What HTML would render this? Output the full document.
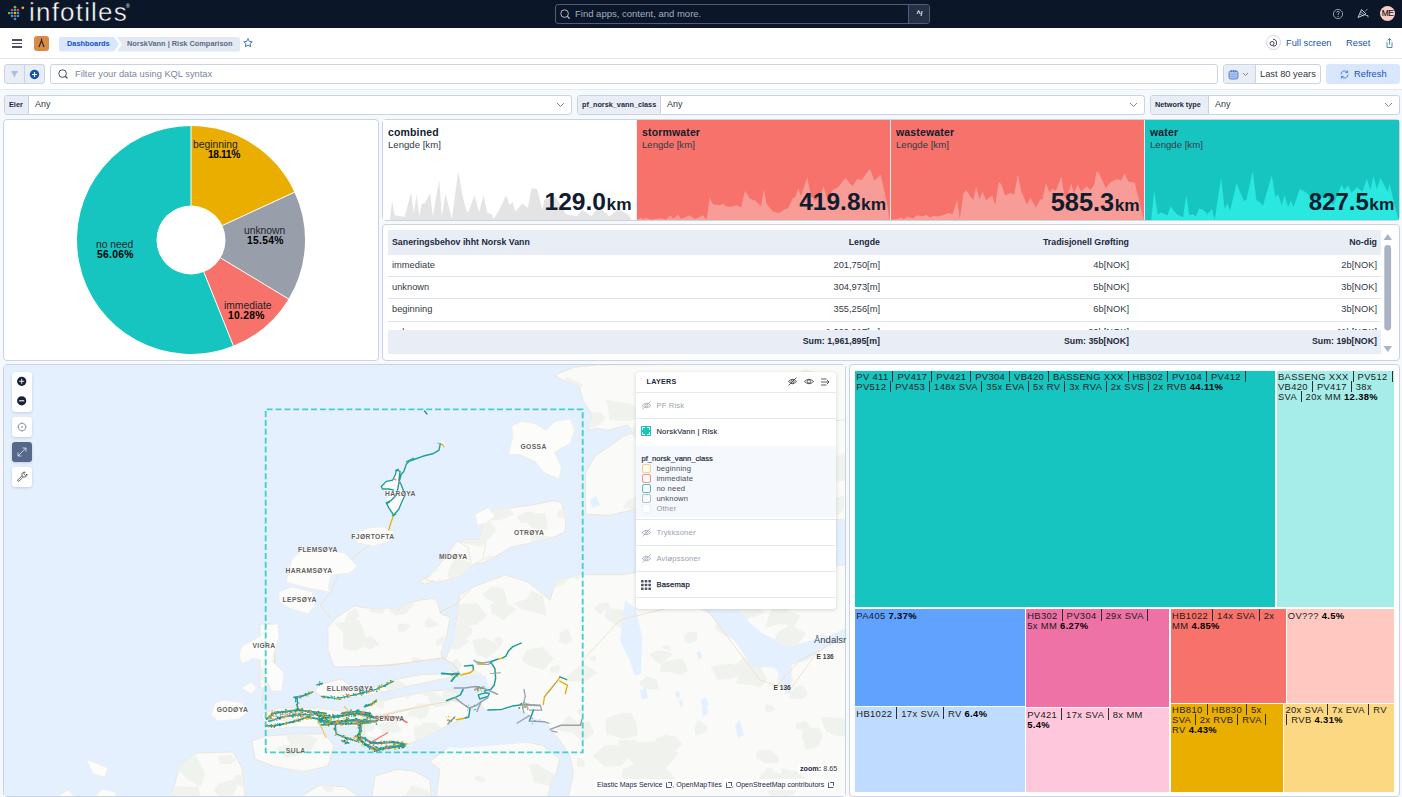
<!DOCTYPE html>
<html><head><meta charset="utf-8">
<style>
*{box-sizing:border-box;margin:0;padding:0}
html,body{width:1402px;height:797px;overflow:hidden;background:#f6f9fc;font-family:"Liberation Sans",sans-serif;color:#1d2a3e}
.abs{position:absolute}
#hdr{position:absolute;left:0;top:0;width:1402px;height:28px;background:#0b1628}
#bar2{position:absolute;left:0;top:28px;width:1402px;height:31px;background:#fff;border-bottom:1px solid #e3e8f2}
#fbar{position:absolute;left:0;top:59px;width:1402px;height:31px;background:#fff;border-bottom:1px solid #e3e8f2}
#cbar{position:absolute;left:0;top:90px;width:1402px;height:29px;background:#f6f9fc}
.panel{position:absolute;background:#fff;border:1px solid #cad3e2;border-radius:4px;overflow:hidden}
.ctl{position:absolute;top:95px;height:20px;background:#fff;border:1px solid #cad3e2;border-radius:3px;overflow:hidden}
.ctl .lb{position:absolute;left:0;top:0;bottom:0;background:#e9edf5;border-right:1px solid #cad3e2;font-size:7.3px;font-weight:bold;color:#1d2a3e;line-height:18px;padding-left:4px}
.ctl .v{position:absolute;top:0;font-size:9px;color:#343741;line-height:17px}
.chev{position:absolute;top:3.5px;width:9px;height:9px}
.pl{font-size:10.3px;line-height:12px;color:#1f2329;white-space:nowrap}
.pl.b{font-weight:bold;color:#000;letter-spacing:0.3px}
.mt{font-size:10.5px;font-weight:bold;color:#111c2f;line-height:12px;letter-spacing:0.15px}
.ms{font-size:9.6px;color:#343a48;line-height:12px}
.mv{font-size:24.3px;font-weight:bold;color:#111c2f;line-height:28px;white-space:nowrap}
.mv span{font-size:17.3px;margin-left:0.5px}
.th{font-size:8.8px;font-weight:bold;color:#1d2a3e;line-height:12px;white-space:nowrap}
.tc{font-size:9.3px;color:#343a48;line-height:12px;white-space:nowrap}
.tm{overflow:hidden}
.tt{position:absolute;left:1px;top:1.5px;font-size:9.4px;line-height:10px;color:#1a1c21;white-space:nowrap;letter-spacing:0.36px}
.tt b{color:#000}
.pp{display:inline-block;width:1px;height:1px;position:relative;margin:0 1px;vertical-align:baseline}.pp:after{content:"";position:absolute;left:0;top:-8.5px;width:1px;height:11.5px;background:#2b3036}
.ml{font-size:6.7px;font-weight:bold;color:#655f5d;letter-spacing:0.4px;line-height:8px;white-space:nowrap;text-shadow:0 0 1px #fff,0 0 1px #fff}
.mc{background:#fff;border-radius:3px;box-shadow:0 1px 3px rgba(0,0,0,0.15)}
.lyl{left:636px;width:200px;height:1px;background:#e3e8f2}
.lyt{left:656.4px;font-size:7.6px;line-height:9px;white-space:nowrap;letter-spacing:0.2px}
.lyt.g{color:#98a2b3}
.sw{left:641.5px;width:9px;height:9px;border:1px solid;border-radius:2px;background:#fff}
.ext{display:inline-block;width:6px;height:6px;border:0.7px solid #5a6170;border-top-color:transparent;border-right-color:transparent;margin-left:2px;vertical-align:-0.5px;position:relative}.ext:after{content:"";position:absolute;right:-1px;top:-1px;width:3px;height:3px;border-top:0.7px solid #5a6170;border-right:0.7px solid #5a6170}
</style></head><body>
<div id="hdr">
 <svg class="abs" style="left:8px;top:5px" width="17" height="17" viewBox="0 0 17 17">
  <circle cx="7" cy="2.2" r="1.35" fill="#7cb342"/>
  <circle cx="14.8" cy="2.8" r="1.35" fill="#f5b400"/>
  <circle cx="4" cy="5" r="1.35" fill="#e0453a"/><circle cx="7" cy="5" r="1.35" fill="#2e9be0"/><circle cx="10" cy="5" r="1.35" fill="#e0453a"/>
  <circle cx="1.2" cy="8" r="1.35" fill="#7cb342"/><circle cx="4" cy="8" r="1.35" fill="#2e9be0"/><circle cx="7" cy="8" r="1.35" fill="#f5b400"/><circle cx="10" cy="8" r="1.35" fill="#2e9be0"/>
  <circle cx="4" cy="11" r="1.35" fill="#2e9be0"/><circle cx="7" cy="11" r="1.35" fill="#e0453a"/><circle cx="10" cy="11" r="1.35" fill="#2e9be0"/>
  <circle cx="7" cy="14" r="1.35" fill="#2e9be0"/>
 </svg>
 <div class="abs" style="left:29px;top:-3px;font-size:26px;color:#fff;letter-spacing:1.2px;line-height:30px;-webkit-text-stroke:0.45px #0b1628">infotiles</div>
 <div class="abs" style="left:126px;top:3px;font-size:5px;color:#fff;line-height:6px">&reg;</div>
 <div class="abs" style="left:555px;top:4px;width:375px;height:20px;border:1px solid #4f5d78;border-radius:3px;background:#0b1628;overflow:hidden">
  <svg class="abs" style="left:4px;top:4px" width="11" height="11" viewBox="0 0 11 11"><circle cx="4.6" cy="4.6" r="3.8" fill="none" stroke="#c5cbd6" stroke-width="0.9"/><path d="M7.4 7.4 L9.6 9.6" stroke="#c5cbd6" stroke-width="1.3"/></svg>
  <div class="abs" style="left:19px;top:0;line-height:18px;font-size:9.5px;color:#a2aec3">Find apps, content, and more.</div>
  <div class="abs" style="left:352px;top:0;width:22px;height:18px;background:#252f45;border-left:1px solid #4f5d78;font-size:7px;color:#fff;line-height:18px;text-align:center;font-weight:bold">^/</div>
 </div>
 <svg class="abs" style="left:1332px;top:8px" width="12" height="12" viewBox="0 0 12 12"><circle cx="6" cy="6" r="4.6" fill="none" stroke="#a6aebb" stroke-width="0.9"/><path d="M4.7 4.6 Q4.8 3.3 6 3.3 Q7.3 3.3 7.3 4.5 Q7.3 5.4 6.1 5.9 L6.1 7" fill="none" stroke="#a6aebb" stroke-width="0.9"/><circle cx="6.1" cy="8.4" r="0.6" fill="#a6aebb"/></svg>
 <svg class="abs" style="left:1357px;top:7px" width="12" height="12" viewBox="0 0 12 12"><path d="M1 10.5 L4.5 2.5 L9 7 Z" fill="none" stroke="#c5cbd6" stroke-width="1"/><path d="M3 7 L6.5 9 M4 4.8 L7.5 8" stroke="#c5cbd6" stroke-width="0.8"/><path d="M8 4.5 L10.5 2" stroke="#c5cbd6" stroke-width="0.7"/><path d="M8.5 8.5 L11 8.5 L11 10.5" fill="none" stroke="#c5cbd6" stroke-width="0.8"/></svg>
 <div class="abs" style="left:1380px;top:6px;width:15px;height:15px;border-radius:50%;background:#fbcdc6;color:#111;font-size:8.3px;line-height:15px;text-align:center;letter-spacing:-0.5px;-webkit-text-stroke:0.15px #111">ME</div>
</div>
<div id="bar2">
 <div class="abs" style="left:12px;top:11px;width:10px;height:1.6px;background:#4a505c"></div>
 <div class="abs" style="left:12px;top:14.6px;width:10px;height:1.6px;background:#4a505c"></div>
 <div class="abs" style="left:12px;top:18.2px;width:10px;height:1.6px;background:#4a505c"></div>
 <div class="abs" style="left:34px;top:8px;width:15px;height:15px;border-radius:3px;background:#d98b45"></div>
 <svg class="abs" style="left:34px;top:8px" width="15" height="15" viewBox="0 0 15 15"><path d="M7.5 2.5 V4.5 M7.5 4.5 L5 11 M7.5 4.5 L10 11" fill="none" stroke="#222" stroke-width="1.1"/></svg>
 <svg class="abs" style="left:59px;top:9px" width="183" height="15" viewBox="0 0 183 15">
  <path d="M0 2 Q0 0 2 0 H55 L60 7.3 L55 14.6 H2 Q0 14.6 0 12.6 Z" fill="#d8e7fe"/>
  <path d="M58 0 H179 Q181 0 181 2 V12.6 Q181 14.6 179 14.6 H58 L63 7.3 Z" fill="#e3e8f2"/>
 </svg>
 <div class="abs" style="left:67px;top:8px;line-height:15px;font-size:7.4px;font-weight:bold;color:#1750ba">Dashboards</div>
 <div class="abs" style="left:127px;top:8px;line-height:15px;font-size:7.4px;font-weight:bold;color:#5a6b86">NorskVann | Risk Comparison</div>
 <svg class="abs" style="left:243px;top:10px" width="10" height="10" viewBox="0.5 0.5 11 11"><path d="M6 1.2 L7.4 4.3 L10.7 4.6 L8.2 6.8 L9 10.1 L6 8.4 L3 10.1 L3.8 6.8 L1.3 4.6 L4.6 4.3 Z" fill="none" stroke="#1d5cc8" stroke-width="0.9" stroke-linejoin="round"/></svg>
 <div class="abs" style="left:1266px;top:7px;width:15px;height:15px;border-radius:50%;border:1px solid #cdd5e3;background:#fff"></div>
 <svg class="abs" style="left:1268px;top:9px" width="11" height="11" viewBox="0 0 11 11"><circle cx="4" cy="6.5" r="2" fill="none" stroke="#333" stroke-width="0.9"/><path d="M5 3 Q6 1.5 7.5 3 L8.5 5 Q9 8 7 9 L5 9" fill="none" stroke="#333" stroke-width="0.9"/></svg>
 <div class="abs" style="left:1286px;top:8px;line-height:14px;font-size:9.3px;color:#1a52b8">Full screen</div>
 <div class="abs" style="left:1346px;top:8px;line-height:14px;font-size:9.3px;color:#1a52b8">Reset</div>
 <svg class="abs" style="left:1384px;top:9px" width="11" height="12" viewBox="0 0 11 12"><path d="M5.5 1.5 V7.5 M3.6 3.4 L5.5 1.5 L7.4 3.4 M3 5.2 V10.5 H8 V5.2" fill="none" stroke="#1d5cc8" stroke-width="0.75" stroke-linejoin="round"/></svg>
</div>
<div id="fbar">
 <div class="abs" style="left:4px;top:5px;width:41px;height:20px;border:1px solid #cad3e2;border-radius:3px;background:#e9edf5"></div>
 <div class="abs" style="left:24px;top:6px;width:1px;height:18px;background:#cad3e2"></div>
 <svg class="abs" style="left:10px;top:11px" width="9" height="8" viewBox="0 0 9 8"><path d="M1.5 2 H7.5 M2.8 4 H6.2 M3.8 6 H5.2" stroke="#1d5cc8" stroke-width="0.65"/></svg>
 <svg class="abs" style="left:29px;top:9.5px" width="11" height="11" viewBox="0 0 11 11"><circle cx="5.5" cy="5.5" r="4.7" fill="#1750ba"/><path d="M5.5 3 V8 M3 5.5 H8" stroke="#fff" stroke-width="1.1"/></svg>
 <div class="abs" style="left:50px;top:5px;width:1168px;height:20px;border:1px solid #cad3e2;border-radius:3px;background:#fff"></div>
 <svg class="abs" style="left:58px;top:10px" width="11" height="11" viewBox="0 0 11 11"><circle cx="4.6" cy="4.6" r="3.8" fill="none" stroke="#343741" stroke-width="0.9"/><path d="M7.4 7.4 L9.4 9.4" stroke="#343741" stroke-width="1.3"/></svg>
 <div class="abs" style="left:75px;top:8px;line-height:14px;font-size:9.3px;color:#7a879c">Filter your data using KQL syntax</div>
 <div class="abs" style="left:1223px;top:5px;width:98px;height:20px;border:1px solid #cad3e2;border-radius:3px;background:#fff;overflow:hidden">
  <div class="abs" style="left:0;top:0;width:32px;height:18px;background:#e9edf5;border-right:1px solid #cad3e2"></div>
 </div>
 <svg class="abs" style="left:1228px;top:10px" width="11" height="11" viewBox="0 0 11 11"><rect x="1" y="2" width="9" height="8" rx="1.8" fill="#a9c2ee" stroke="#3f6fd0" stroke-width="0.8"/><path d="M3.3 1 V3 M5.5 1 V3 M7.7 1 V3" stroke="#3f6fd0" stroke-width="0.9"/><path d="M2.5 5.3 H8.5 M2.5 7.5 H8.5" stroke="#6d93dc" stroke-width="0.5"/></svg>
 <svg class="abs" style="left:1242px;top:12.5px" width="7" height="5" viewBox="0 0 7 5"><path d="M1 1 L3.5 3.5 L6 1" fill="none" stroke="#5a6b86" stroke-width="0.8"/></svg>
 <div class="abs" style="left:1260px;top:8px;line-height:14px;font-size:9.3px;color:#343741">Last 80 years</div>
 <div class="abs" style="left:1326px;top:5px;width:74px;height:20px;border-radius:3px;background:#d8e7fe"></div>
 <svg class="abs" style="left:1339px;top:9.5px" width="11" height="11" viewBox="0 0 11 11"><path d="M2 5.5 A3.5 3.5 0 0 1 8.2 3.2 M9 5.5 A3.5 3.5 0 0 1 2.8 7.8" fill="none" stroke="#1d5cc8" stroke-width="0.7"/><path d="M8.6 1.4 V3.6 H6.4 M2.4 9.6 V7.4 H4.6" fill="none" stroke="#1d5cc8" stroke-width="0.7"/></svg>
 <div class="abs" style="left:1354px;top:8px;line-height:14px;font-size:9.3px;color:#1a52b8">Refresh</div>
</div>
<div id="cbar"></div>
<div class="ctl" style="left:4px;width:568px"><div class="lb" style="width:24px">Eier</div><div class="v" style="left:30px">Any</div>
 <svg class="chev" style="right:6px" viewBox="0 0 9 9"><path d="M1 3 L4.5 6.5 L8 3" fill="none" stroke="#5a6b86" stroke-width="0.8"/></svg></div>
<div class="ctl" style="left:577px;width:568px"><div class="lb" style="width:83px">pf_norsk_vann_class</div><div class="v" style="left:89px">Any</div>
 <svg class="chev" style="right:6px" viewBox="0 0 9 9"><path d="M1 3 L4.5 6.5 L8 3" fill="none" stroke="#5a6b86" stroke-width="0.8"/></svg></div>
<div class="ctl" style="left:1150px;width:250px"><div class="lb" style="width:58px">Network type</div><div class="v" style="left:64px">Any</div>
 <svg class="chev" style="right:6px" viewBox="0 0 9 9"><path d="M1 3 L4.5 6.5 L8 3" fill="none" stroke="#5a6b86" stroke-width="0.8"/></svg></div>

<!-- panels -->
<div class="panel" style="left:3px;top:119px;width:376px;height:242px"></div>
<div class="panel" style="left:382px;top:119px;width:1018px;height:102px"></div>
<div class="panel" style="left:382px;top:224px;width:1018px;height:137px"></div>
<div class="panel" style="left:3px;top:364px;width:843px;height:433px;background:#e5f0ff"></div>
<div class="panel" style="left:849px;top:364px;width:551px;height:433px"></div>
<!-- map -->
<svg class="abs" style="left:4px;top:365px" width="841" height="431" viewBox="4 365 841 431">
<rect x="4" y="365" width="841" height="431" fill="#e5f0ff"/>
<path d="M554.7 375.0 L565.8 370.6 L574.6 367.3 L596.7 365.1 L846.0 364.0 L846.0 440.0 L640.0 440.0 L627.6 425.0 L607.8 430.3 L596.7 428.1 L587.9 430.3 L592.3 414.8 L583.5 401.6 L579.0 386.1 L561.4 379.5 Z" fill="#fafbf9" stroke="#eadfca" stroke-width="0.7"/>
<path d="M585.6 472.5 L595.2 455.9 L611.8 444.9 L622.9 436.6 L640.0 430.0 L846.0 420.0 L846.0 520.0 L640.0 508.0 L609.0 515.3 L585.6 513.9 Z" fill="#fafbf9" stroke="#eadfca" stroke-width="0.7"/>
<path d="M477.4 545.0 L486.3 518.6 L495.1 509.8 L512.8 507.6 L530.4 505.4 L552.5 501.0 L561.4 502.1 L565.8 518.6 L565.0 532.0 L554.0 537.0 L540.0 541.0 L511.0 547.0 L488.0 561.0 L477.0 564.0 Z" fill="#fafbf9" stroke="#eadfca" stroke-width="0.7"/>
<path d="M418.0 582.0 L437.0 572.0 L446.0 556.0 L454.0 546.0 L466.0 540.0 L486.0 540.0 L483.0 559.0 L466.0 569.0 L441.0 578.0 L425.0 584.0 Z" fill="#fafbf9" stroke="#eadfca" stroke-width="0.7"/>
<path d="M425.0 580.0 L440.0 564.0 L457.0 541.0 L468.0 547.0 L471.0 564.0 L463.0 575.0 L440.0 582.0 Z" fill="#fafbf9" stroke="#eadfca" stroke-width="0.7"/>
<path d="M171.0 797.0 L180.0 765.0 L197.0 753.0 L233.0 752.0 L242.0 768.0 L245.0 797.0 Z" fill="#fafbf9" stroke="#eadfca" stroke-width="0.7"/>
<path d="M328.0 627.0 L337.0 617.0 L354.0 606.0 L373.0 609.0 L389.0 608.0 L399.0 611.0 L402.0 605.0 L421.0 600.0 L436.0 598.0 L441.0 614.0 L450.0 617.0 L447.0 634.0 L441.0 653.0 L444.0 663.0 L405.0 663.0 L373.0 666.0 L334.0 667.0 L328.0 650.0 Z" fill="#fafbf9" stroke="#eadfca" stroke-width="0.7"/>
<path d="M444.0 663.0 L454.0 637.0 L460.0 595.0 L473.0 587.0 L505.0 575.0 L528.0 582.0 L550.0 600.0 L556.6 580.2 L581.4 574.7 L620.1 574.7 L700.0 565.0 L846.0 565.0 L846.0 797.0 L568.3 797.0 L573.4 772.8 L570.0 755.7 L559.7 740.3 L551.0 730.0 L544.0 721.0 L518.0 724.0 L486.0 711.0 L470.0 692.0 L454.0 675.0 Z" fill="#fafbf9" stroke="#eadfca" stroke-width="0.7"/>
<path d="M262.0 714.0 L279.0 708.0 L318.0 708.0 L363.0 714.0 L366.0 727.0 L325.0 727.0 L292.0 727.0 L266.0 730.0 Z" fill="#fafbf9" stroke="#eadfca" stroke-width="0.7"/>
<path d="M260.0 624.0 L274.0 624.0 L276.0 650.0 L272.0 675.0 L266.0 688.0 L260.0 688.0 Z" fill="#fafbf9" stroke="#eadfca" stroke-width="0.7"/>
<path d="M252.0 741.0 L266.0 736.0 L300.0 734.0 L325.0 734.0 L334.0 746.0 L328.0 766.0 L302.0 772.0 L273.0 766.0 L255.0 759.0 Z" fill="#fafbf9" stroke="#eadfca" stroke-width="0.7"/>
<path d="M429.6 761.7 L448.5 747.1 L465.6 740.3 L482.7 731.7 L499.8 733.4 L508.4 743.7 L525.5 742.0 L542.6 745.4 L559.7 759.1 L556.3 772.8 L551.2 781.4 L547.7 797.0 L436.5 797.0 L439.9 769.4 Z" fill="#fafbf9" stroke="#eadfca" stroke-width="0.7"/>
<path d="M375.0 776.0 L397.1 769.4 L414.2 771.1 L429.6 779.6 L431.4 797.0 L372.0 797.0 Z" fill="#fafbf9" stroke="#eadfca" stroke-width="0.7"/>
<path d="M300.0 797.0 L320.0 785.0 L345.0 787.0 L360.0 797.0 Z" fill="#fafbf9" stroke="#eadfca" stroke-width="0.7"/>
<clipPath id="landclip"><path d="M554.7 375.0 L565.8 370.6 L574.6 367.3 L596.7 365.1 L846.0 364.0 L846.0 440.0 L640.0 440.0 L627.6 425.0 L607.8 430.3 L596.7 428.1 L587.9 430.3 L592.3 414.8 L583.5 401.6 L579.0 386.1 L561.4 379.5 Z" fill="#000"/><path d="M585.6 472.5 L595.2 455.9 L611.8 444.9 L622.9 436.6 L640.0 430.0 L846.0 420.0 L846.0 520.0 L640.0 508.0 L609.0 515.3 L585.6 513.9 Z" fill="#000"/><path d="M477.4 545.0 L486.3 518.6 L495.1 509.8 L512.8 507.6 L530.4 505.4 L552.5 501.0 L561.4 502.1 L565.8 518.6 L565.0 532.0 L554.0 537.0 L540.0 541.0 L511.0 547.0 L488.0 561.0 L477.0 564.0 Z" fill="#000"/><path d="M418.0 582.0 L437.0 572.0 L446.0 556.0 L454.0 546.0 L466.0 540.0 L486.0 540.0 L483.0 559.0 L466.0 569.0 L441.0 578.0 L425.0 584.0 Z" fill="#000"/><path d="M425.0 580.0 L440.0 564.0 L457.0 541.0 L468.0 547.0 L471.0 564.0 L463.0 575.0 L440.0 582.0 Z" fill="#000"/><path d="M171.0 797.0 L180.0 765.0 L197.0 753.0 L233.0 752.0 L242.0 768.0 L245.0 797.0 Z" fill="#000"/><path d="M328.0 627.0 L337.0 617.0 L354.0 606.0 L373.0 609.0 L389.0 608.0 L399.0 611.0 L402.0 605.0 L421.0 600.0 L436.0 598.0 L441.0 614.0 L450.0 617.0 L447.0 634.0 L441.0 653.0 L444.0 663.0 L405.0 663.0 L373.0 666.0 L334.0 667.0 L328.0 650.0 Z" fill="#000"/><path d="M444.0 663.0 L454.0 637.0 L460.0 595.0 L473.0 587.0 L505.0 575.0 L528.0 582.0 L550.0 600.0 L556.6 580.2 L581.4 574.7 L620.1 574.7 L700.0 565.0 L846.0 565.0 L846.0 797.0 L568.3 797.0 L573.4 772.8 L570.0 755.7 L559.7 740.3 L551.0 730.0 L544.0 721.0 L518.0 724.0 L486.0 711.0 L470.0 692.0 L454.0 675.0 Z" fill="#000"/><path d="M262.0 714.0 L279.0 708.0 L318.0 708.0 L363.0 714.0 L366.0 727.0 L325.0 727.0 L292.0 727.0 L266.0 730.0 Z" fill="#000"/><path d="M260.0 624.0 L274.0 624.0 L276.0 650.0 L272.0 675.0 L266.0 688.0 L260.0 688.0 Z" fill="#000"/><path d="M252.0 741.0 L266.0 736.0 L300.0 734.0 L325.0 734.0 L334.0 746.0 L328.0 766.0 L302.0 772.0 L273.0 766.0 L255.0 759.0 Z" fill="#000"/><path d="M429.6 761.7 L448.5 747.1 L465.6 740.3 L482.7 731.7 L499.8 733.4 L508.4 743.7 L525.5 742.0 L542.6 745.4 L559.7 759.1 L556.3 772.8 L551.2 781.4 L547.7 797.0 L436.5 797.0 L439.9 769.4 Z" fill="#000"/><path d="M375.0 776.0 L397.1 769.4 L414.2 771.1 L429.6 779.6 L431.4 797.0 L372.0 797.0 Z" fill="#000"/><path d="M300.0 797.0 L320.0 785.0 L345.0 787.0 L360.0 797.0 Z" fill="#000"/></clipPath>
<g clip-path="url(#landclip)" fill="#f0f3ed"><path d="M221.9 599.9 L217.0 614.0 L200.9 613.0 L188.7 609.0 L189.1 594.1 L198.3 584.3 L210.1 592.2 Z"/><path d="M798.7 530.3 L786.3 541.5 L773.2 543.7 L771.0 526.7 L791.4 523.4 Z"/><path d="M794.5 533.1 L794.5 542.0 L782.4 550.5 L761.5 545.5 L757.7 536.4 L767.7 525.6 L778.8 525.3 L794.2 521.9 Z"/><path d="M41.9 484.7 L32.3 492.0 L19.6 495.1 L17.8 483.4 L19.2 478.4 L35.6 477.5 Z"/><path d="M297.1 393.7 L296.4 396.0 L291.7 395.7 L290.0 393.6 L292.9 391.6 L294.5 392.2 Z"/><path d="M23.6 414.7 L18.7 425.2 L-3.8 415.5 L-0.1 407.0 L17.8 401.6 Z"/><path d="M748.3 534.3 L741.5 542.2 L729.2 537.4 L728.9 524.3 L738.9 526.5 Z"/><path d="M359.7 615.8 L355.4 621.2 L344.8 621.5 L348.1 612.0 L356.4 608.7 Z"/><path d="M815.4 374.0 L812.3 377.5 L807.3 378.9 L802.6 375.9 L800.1 371.8 L804.4 369.3 L812.2 371.1 Z"/><path d="M200.3 713.0 L197.4 717.1 L184.8 717.2 L181.4 713.5 L190.1 708.3 L195.2 708.5 Z"/><path d="M485.7 482.6 L483.0 485.0 L479.6 482.9 L480.9 480.5 L484.1 479.0 Z"/><path d="M367.0 589.5 L362.4 592.8 L357.4 594.6 L347.3 593.3 L350.0 585.1 L356.1 578.4 L363.1 585.7 Z"/><path d="M402.6 693.0 L395.4 701.1 L388.5 697.2 L378.1 697.6 L381.0 687.6 L388.6 682.4 L392.8 682.7 Z"/><path d="M117.6 582.5 L109.3 592.8 L101.5 589.5 L93.4 580.3 L101.8 574.2 L110.2 572.8 Z"/><path d="M712.4 441.9 L706.8 447.0 L687.3 446.2 L680.6 444.7 L677.9 433.7 L686.9 423.8 L695.6 431.5 Z"/><path d="M122.4 416.3 L113.9 426.3 L106.4 422.6 L102.9 415.0 L112.4 412.6 Z"/><path d="M846.0 551.2 L841.7 554.8 L830.6 558.7 L825.9 548.9 L831.7 541.2 L840.6 543.3 Z"/><path d="M432.0 668.3 L433.0 674.8 L420.6 684.9 L414.9 676.0 L407.8 671.8 L413.2 656.7 L424.3 659.9 L439.9 657.6 Z"/><path d="M633.4 733.6 L631.8 737.6 L622.6 738.8 L613.4 735.7 L611.6 733.7 L614.9 725.9 L615.3 719.9 L628.7 721.3 Z"/><path d="M578.2 727.2 L576.9 734.1 L568.4 731.9 L556.0 729.8 L561.3 724.8 L568.4 715.1 L575.4 720.5 Z"/><path d="M223.9 631.5 L221.0 636.5 L214.9 635.3 L206.8 634.6 L208.3 629.7 L209.5 626.9 L216.5 625.1 L218.0 627.0 Z"/><path d="M765.1 437.9 L763.5 444.0 L753.4 443.8 L742.8 444.8 L740.4 436.2 L739.3 423.6 L749.3 422.7 L763.5 424.9 Z"/><path d="M505.8 479.4 L501.6 485.2 L493.5 485.9 L489.2 479.2 L492.7 474.0 L499.1 474.5 Z"/><path d="M776.4 648.2 L767.7 655.6 L753.9 649.5 L756.1 644.1 L768.3 638.7 Z"/><path d="M822.4 735.3 L819.3 746.6 L805.9 750.2 L801.4 735.4 L804.2 727.7 L818.4 727.4 Z"/><path d="M236.1 760.1 L230.6 764.3 L219.9 763.7 L218.3 756.7 L230.7 754.8 Z"/><path d="M466.5 416.4 L464.5 418.6 L461.1 420.3 L458.6 417.5 L457.8 414.9 L461.6 411.9 L464.6 415.0 Z"/><path d="M807.4 511.3 L805.7 521.9 L786.4 516.4 L792.6 506.4 L803.3 498.3 Z"/><path d="M405.0 413.0 L393.9 420.7 L381.1 423.6 L367.4 409.2 L378.1 404.9 L395.7 400.3 Z"/><path d="M339.3 409.1 L338.3 412.3 L331.0 413.7 L327.0 411.4 L324.3 404.3 L330.5 399.8 L337.0 403.2 Z"/><path d="M93.4 412.9 L89.2 419.4 L82.2 416.0 L82.9 412.0 L88.7 409.0 Z"/><path d="M493.5 451.2 L487.7 457.0 L479.6 457.5 L475.4 453.4 L474.6 449.4 L481.4 443.5 L486.3 449.4 Z"/><path d="M178.6 640.0 L168.5 649.1 L154.3 647.1 L150.9 635.1 L169.8 629.2 Z"/><path d="M486.3 780.1 L483.9 781.8 L479.4 781.8 L473.5 779.2 L476.5 775.0 L482.8 777.0 Z"/><path d="M738.4 626.0 L729.1 638.7 L714.9 628.7 L717.2 617.4 L727.4 618.2 Z"/><path d="M75.4 451.5 L71.7 456.5 L66.9 455.2 L59.3 451.7 L65.0 445.9 L71.4 446.2 Z"/><path d="M725.6 557.5 L729.7 565.9 L718.6 567.3 L711.4 562.5 L708.1 556.3 L715.7 553.3 L722.4 552.4 Z"/><path d="M422.4 390.3 L418.1 396.2 L411.2 396.3 L409.1 383.7 L418.1 384.5 Z"/><path d="M169.6 507.9 L165.7 514.0 L157.3 511.6 L160.2 504.7 L165.6 503.8 Z"/><path d="M697.1 635.3 L696.8 640.8 L690.1 643.7 L684.1 640.9 L684.6 634.9 L688.5 631.7 L697.5 632.3 Z"/><path d="M303.8 568.8 L303.4 586.3 L290.6 582.5 L279.1 573.9 L276.8 567.6 L287.6 554.4 L299.5 558.0 Z"/><path d="M637.4 725.0 L637.1 736.5 L619.2 736.1 L606.4 735.1 L605.0 718.7 L617.3 713.9 L630.7 712.6 Z"/><path d="M33.2 567.2 L28.1 572.3 L18.5 571.3 L17.5 561.6 L26.0 563.8 Z"/><path d="M175.8 704.3 L168.8 709.7 L158.1 709.3 L164.4 701.5 L171.2 701.4 Z"/><path d="M254.8 456.9 L252.9 463.7 L246.3 464.1 L239.6 464.1 L232.4 454.6 L233.8 449.4 L245.0 449.7 L255.0 447.5 Z"/><path d="M589.2 414.1 L586.1 419.9 L581.3 425.6 L563.7 421.2 L562.6 414.0 L564.9 403.0 L574.0 402.8 L583.6 407.0 Z"/><path d="M483.7 679.7 L484.4 691.2 L472.3 691.1 L461.5 689.2 L451.9 684.1 L460.2 677.7 L473.3 669.6 L481.2 673.1 Z"/><path d="M737.4 527.2 L727.2 534.7 L705.8 535.4 L699.9 526.0 L714.8 517.6 L730.1 515.6 Z"/><path d="M447.4 640.3 L444.7 645.0 L436.2 645.4 L436.0 639.4 L444.5 637.4 Z"/><path d="M198.9 580.5 L185.6 582.6 L175.2 588.4 L160.8 581.3 L156.2 569.4 L171.3 563.4 L194.2 565.2 Z"/><path d="M256.9 470.0 L257.1 472.9 L251.5 472.8 L252.3 468.1 L256.2 467.8 Z"/><path d="M472.4 576.7 L471.9 578.7 L468.5 578.9 L465.0 577.3 L467.8 574.9 L470.1 574.3 Z"/><path d="M553.9 659.1 L543.5 669.9 L527.4 665.0 L522.1 659.0 L526.8 649.5 L543.1 647.1 Z"/><path d="M450.0 691.4 L448.0 693.4 L441.6 695.4 L436.1 694.7 L436.0 691.7 L435.8 686.9 L443.1 686.3 L447.0 685.3 Z"/><path d="M202.0 563.4 L200.0 565.1 L196.4 566.9 L194.8 565.3 L194.5 562.2 L198.2 559.3 L200.0 561.7 Z"/><path d="M789.8 442.7 L787.8 447.9 L781.3 457.3 L771.6 448.7 L763.6 443.8 L770.5 432.2 L784.7 428.3 L788.3 437.8 Z"/><path d="M555.1 422.6 L544.6 435.4 L525.3 424.9 L526.7 412.6 L540.1 409.4 Z"/><path d="M139.3 670.4 L143.9 675.8 L132.1 677.1 L116.1 677.1 L112.9 673.5 L122.1 663.3 L127.4 660.9 L139.6 665.9 Z"/><path d="M123.8 429.7 L115.9 431.6 L111.9 432.1 L108.9 427.8 L109.0 419.8 L117.8 419.4 Z"/><path d="M413.9 684.2 L410.7 690.6 L400.3 691.0 L390.4 692.4 L393.8 683.1 L394.9 674.6 L400.2 677.4 L406.2 679.9 Z"/><path d="M834.0 540.4 L830.2 546.9 L824.8 545.0 L824.5 541.4 L825.5 538.6 L829.4 537.9 Z"/><path d="M290.6 584.4 L283.3 593.7 L274.2 594.8 L261.3 590.7 L267.4 581.5 L274.5 576.5 L288.3 577.3 Z"/><path d="M223.4 552.7 L219.3 562.3 L211.1 559.8 L207.4 554.6 L201.7 549.0 L213.0 548.0 L220.2 548.5 Z"/><path d="M833.0 523.4 L831.6 526.0 L828.9 525.0 L826.6 523.6 L827.3 519.8 L831.9 521.7 Z"/><path d="M426.9 505.0 L424.8 509.5 L417.0 507.5 L411.6 499.3 L424.3 497.2 Z"/><path d="M708.1 727.4 L704.1 733.3 L695.3 735.5 L694.4 727.6 L698.1 719.3 L703.1 722.5 Z"/><path d="M307.2 367.0 L304.4 375.8 L293.8 372.8 L288.6 369.3 L294.9 358.8 L303.2 358.4 Z"/><path d="M640.7 505.4 L636.9 509.6 L623.2 507.9 L626.1 501.4 L636.5 496.0 Z"/><path d="M56.4 587.1 L55.4 598.6 L42.7 595.0 L35.1 585.9 L43.5 582.9 L53.7 577.9 Z"/><path d="M124.1 596.0 L120.0 599.9 L114.1 601.6 L107.5 596.2 L106.8 591.3 L113.8 590.9 L122.3 588.1 Z"/><path d="M431.8 727.6 L431.3 733.2 L424.5 731.5 L421.3 730.9 L421.4 727.9 L423.6 723.8 L428.3 726.2 Z"/><path d="M194.8 556.5 L192.6 561.3 L186.9 562.0 L182.5 556.4 L186.2 550.8 L191.6 553.1 Z"/><path d="M670.0 735.8 L669.0 738.2 L666.6 739.1 L664.1 738.2 L662.1 736.1 L663.6 735.0 L666.9 734.5 L668.4 734.5 Z"/><path d="M143.0 493.3 L136.5 507.3 L123.9 501.3 L111.2 491.7 L115.0 480.9 L138.6 484.6 Z"/><path d="M853.6 725.5 L843.9 736.5 L834.5 735.4 L825.9 731.3 L820.7 717.1 L832.4 717.4 L849.3 718.5 Z"/><path d="M473.0 565.2 L468.3 573.6 L462.2 575.7 L453.5 573.7 L449.7 567.8 L453.2 560.7 L458.2 557.6 L466.5 561.8 Z"/><path d="M231.8 456.2 L223.9 462.3 L215.1 460.8 L216.6 453.9 L230.8 448.5 Z"/><path d="M631.7 753.3 L621.9 765.5 L608.5 766.7 L612.5 752.0 L628.3 738.8 Z"/><path d="M132.2 753.8 L128.9 762.9 L118.1 764.8 L106.6 760.3 L106.2 755.9 L109.1 747.5 L118.2 743.1 L131.7 746.9 Z"/><path d="M633.5 526.4 L619.7 531.9 L604.6 535.3 L605.6 522.7 L618.0 519.5 Z"/><path d="M292.1 716.2 L289.5 720.4 L282.9 721.9 L279.3 717.0 L283.8 711.7 L290.0 713.6 Z"/><path d="M705.8 394.0 L706.4 399.1 L701.9 400.6 L695.4 399.4 L693.6 395.4 L696.7 393.1 L699.9 389.7 L703.0 392.6 Z"/><path d="M373.4 402.9 L362.7 412.5 L351.0 420.6 L340.5 413.9 L336.7 399.9 L355.2 394.4 L364.6 400.2 Z"/><path d="M503.6 640.0 L501.0 645.7 L493.7 641.2 L493.6 637.8 L499.1 636.8 Z"/><path d="M455.3 492.5 L447.6 500.0 L440.8 498.8 L435.4 489.5 L454.1 483.3 Z"/><path d="M62.9 656.6 L50.4 665.3 L40.8 667.0 L34.8 659.5 L34.4 651.9 L38.7 647.1 L57.4 647.4 Z"/><path d="M127.0 437.4 L130.8 441.7 L116.3 442.9 L110.3 438.8 L111.3 433.1 L119.9 431.1 L127.7 427.7 Z"/><path d="M226.2 568.5 L225.1 572.9 L218.6 574.7 L214.8 571.5 L218.5 567.3 L219.8 565.2 L225.1 564.8 Z"/><path d="M787.1 560.8 L780.5 565.5 L770.5 575.1 L760.9 571.5 L761.0 561.6 L763.5 555.0 L774.4 546.6 L781.8 555.3 Z"/><path d="M660.7 571.9 L654.0 575.2 L648.9 577.5 L643.9 579.1 L634.7 570.4 L637.8 566.3 L648.5 563.4 L652.9 567.0 Z"/><path d="M196.1 761.5 L197.8 774.1 L178.2 771.3 L162.5 762.4 L178.4 755.9 L194.4 754.4 Z"/><path d="M334.1 785.8 L332.2 792.1 L327.7 792.2 L323.6 789.8 L322.1 783.1 L325.7 781.4 L331.1 781.6 Z"/><path d="M700.2 470.0 L697.8 475.1 L685.1 483.0 L672.8 465.2 L686.6 462.1 L695.3 462.6 Z"/><path d="M780.3 479.9 L775.7 486.5 L766.0 490.6 L748.5 483.6 L750.6 471.3 L758.9 466.6 L772.8 473.7 Z"/><path d="M157.6 501.6 L151.7 506.2 L145.2 507.1 L143.9 504.7 L146.3 496.8 L151.1 500.5 Z"/><path d="M668.5 525.5 L668.3 528.4 L662.1 531.2 L657.7 527.0 L655.6 524.4 L658.9 522.9 L662.5 520.2 L669.1 520.2 Z"/><path d="M154.6 683.0 L155.0 686.8 L150.6 689.9 L144.4 684.0 L143.3 680.3 L147.6 677.7 L152.8 677.9 Z"/><path d="M375.1 647.3 L371.2 648.9 L366.9 649.1 L367.5 644.9 L370.5 644.2 Z"/><path d="M767.4 679.2 L760.4 688.0 L753.4 685.2 L735.8 683.5 L738.9 674.5 L745.3 665.5 L760.9 669.1 Z"/><path d="M579.7 422.7 L583.6 434.3 L564.9 434.7 L551.1 429.9 L554.8 420.5 L566.3 409.2 L572.9 417.3 Z"/><path d="M793.7 682.0 L790.4 683.0 L786.3 687.8 L777.3 687.6 L776.7 679.6 L779.1 674.4 L786.1 673.3 L791.9 675.4 Z"/><path d="M709.7 448.4 L706.0 450.7 L703.9 452.4 L698.0 449.4 L701.2 446.1 L704.4 443.1 L706.4 445.9 Z"/><path d="M586.7 418.4 L582.4 421.5 L570.7 422.3 L561.9 418.5 L559.0 412.8 L570.2 406.6 L582.5 410.0 Z"/><path d="M300.4 392.9 L296.0 396.1 L289.1 396.1 L286.9 387.6 L294.5 385.2 Z"/><path d="M552.0 390.6 L543.6 399.6 L530.9 398.6 L525.7 392.5 L533.3 383.3 L544.0 383.7 Z"/><path d="M37.2 642.9 L29.4 652.9 L12.4 648.3 L11.5 636.0 L33.6 630.6 Z"/><path d="M594.4 732.6 L583.3 741.4 L574.3 735.0 L566.0 723.7 L589.7 721.6 Z"/><path d="M811.1 529.5 L807.6 534.5 L804.5 535.2 L796.9 535.2 L797.9 525.9 L802.7 523.5 L810.4 524.5 Z"/><path d="M652.3 541.8 L651.4 549.9 L635.4 556.2 L616.1 546.6 L622.8 535.8 L636.9 524.5 L646.9 528.1 Z"/><path d="M380.1 644.9 L371.7 647.4 L364.6 647.7 L365.0 638.0 L372.0 636.1 Z"/><path d="M456.3 527.1 L447.0 531.0 L441.0 536.2 L434.8 529.1 L439.8 523.5 L444.0 518.0 L450.0 521.5 Z"/><path d="M533.9 420.9 L529.8 424.8 L522.3 424.1 L516.5 420.6 L522.4 413.0 L527.8 412.6 Z"/><path d="M29.1 609.5 L26.4 615.0 L14.8 619.3 L1.2 617.6 L-0.9 606.6 L-0.9 601.2 L13.4 594.7 L20.3 602.9 Z"/><path d="M216.5 600.6 L208.5 606.0 L198.3 613.4 L193.4 599.4 L191.1 596.1 L201.2 590.1 L209.6 586.5 Z"/><path d="M149.2 786.7 L149.9 789.7 L145.8 789.1 L145.0 788.8 L142.1 786.8 L144.7 785.5 L145.4 784.0 L148.0 784.8 Z"/><path d="M575.6 424.6 L570.8 435.2 L550.2 436.4 L551.1 426.8 L550.0 418.3 L561.2 419.9 Z"/><path d="M682.8 744.8 L669.0 755.7 L658.4 750.7 L650.9 746.6 L657.2 737.4 L674.5 735.6 Z"/><path d="M640.2 752.9 L636.1 757.6 L615.9 760.3 L619.9 748.9 L618.3 740.2 L636.1 739.7 Z"/><path d="M145.6 398.7 L145.4 401.1 L141.8 400.8 L140.3 399.5 L140.3 397.7 L140.6 395.4 L141.4 394.3 L144.3 396.6 Z"/><path d="M234.9 377.5 L236.8 384.6 L219.0 390.0 L213.5 382.6 L212.9 371.4 L221.0 370.3 L230.3 371.2 Z"/><path d="M638.3 529.2 L639.0 534.6 L633.6 536.2 L625.7 533.6 L624.5 528.7 L629.7 525.6 L633.0 523.0 L638.4 524.4 Z"/><path d="M775.7 709.0 L771.5 711.4 L766.8 712.0 L764.4 707.9 L767.3 703.6 L771.8 705.4 Z"/><path d="M350.1 530.1 L347.4 531.0 L343.5 532.1 L340.7 531.3 L339.4 527.8 L344.1 525.9 L348.2 526.9 Z"/><path d="M738.2 617.2 L739.0 623.1 L733.8 621.3 L729.8 622.8 L730.4 616.9 L730.0 614.3 L735.8 611.1 L736.9 615.2 Z"/><path d="M652.0 526.3 L646.5 534.3 L642.0 535.5 L628.4 533.0 L628.3 525.5 L635.0 524.8 L639.1 523.1 L646.3 524.4 Z"/><path d="M289.3 368.0 L296.6 374.9 L285.6 379.0 L274.8 370.7 L273.3 365.7 L275.1 358.9 L285.8 352.8 L288.0 358.1 Z"/><path d="M135.7 692.9 L135.2 695.5 L128.5 695.1 L129.3 691.5 L132.6 690.1 Z"/><path d="M559.7 669.3 L558.7 673.4 L555.3 672.4 L551.0 673.6 L549.8 668.7 L551.2 666.7 L555.8 665.6 L559.6 665.2 Z"/><path d="M444.9 581.5 L444.0 584.2 L442.7 585.7 L438.9 585.8 L436.9 581.5 L438.7 579.3 L442.9 579.6 L444.9 580.2 Z"/><path d="M796.6 464.8 L787.4 471.5 L780.1 475.5 L778.3 467.9 L782.9 461.1 L794.4 461.2 Z"/><path d="M744.8 668.4 L735.0 678.0 L717.6 679.9 L710.8 666.8 L722.2 664.4 L731.8 663.8 Z"/><path d="M583.0 384.6 L571.2 401.0 L552.7 395.0 L552.7 383.5 L567.1 376.9 Z"/><path d="M475.2 457.8 L462.5 466.9 L451.2 465.9 L438.6 464.5 L443.8 450.9 L453.7 449.0 L463.1 450.6 Z"/><path d="M346.4 684.5 L340.5 689.3 L336.8 687.6 L336.4 683.2 L342.1 679.6 Z"/><path d="M340.7 370.7 L337.6 372.6 L333.7 373.5 L327.9 371.3 L331.3 368.9 L333.3 363.3 L340.2 365.3 Z"/><path d="M92.6 694.1 L89.6 704.9 L78.4 705.2 L70.4 699.9 L71.0 691.0 L78.8 687.4 L85.8 690.3 Z"/><path d="M86.0 720.7 L85.5 725.8 L76.5 729.9 L70.2 723.5 L70.1 716.7 L73.9 715.6 L81.0 714.6 Z"/><path d="M773.3 770.7 L773.4 774.7 L769.5 775.4 L763.6 773.5 L765.1 768.9 L768.4 767.8 L772.9 767.5 Z"/><path d="M55.5 586.2 L49.8 590.2 L43.6 590.2 L43.6 584.9 L49.0 583.6 Z"/><path d="M438.8 624.8 L430.7 628.0 L424.3 626.4 L424.9 620.9 L429.6 617.6 Z"/><path d="M628.8 618.2 L620.6 627.9 L612.8 623.2 L604.1 616.9 L607.8 607.9 L624.9 609.7 Z"/><path d="M461.9 664.9 L457.9 674.0 L449.7 670.3 L443.4 666.1 L451.8 661.6 L457.0 658.0 Z"/><path d="M391.9 733.9 L388.3 736.2 L383.4 736.4 L381.3 737.1 L376.6 732.6 L379.6 725.8 L381.6 724.5 L390.1 729.8 Z"/><path d="M498.4 561.9 L498.8 565.2 L491.9 566.2 L485.8 565.2 L484.2 561.1 L484.8 556.9 L490.4 555.3 L497.6 558.1 Z"/><path d="M572.0 421.9 L566.6 429.2 L557.7 438.9 L551.1 430.9 L547.7 423.0 L542.5 411.7 L562.4 408.8 L565.5 417.6 Z"/><path d="M108.1 579.8 L105.7 584.9 L100.4 593.6 L90.1 588.1 L83.9 582.8 L85.6 570.4 L100.8 572.3 L104.4 573.5 Z"/><path d="M806.3 633.5 L793.9 649.7 L773.2 646.8 L776.5 633.4 L790.1 624.5 Z"/><path d="M406.7 429.9 L400.6 439.5 L386.4 440.8 L370.4 436.4 L377.6 430.0 L388.7 418.1 L399.3 421.5 Z"/><path d="M496.4 530.3 L482.0 546.8 L462.9 543.2 L459.9 526.1 L488.7 519.3 Z"/><path d="M493.3 398.3 L489.7 399.6 L484.1 405.4 L482.7 401.1 L478.9 397.9 L481.6 393.4 L485.9 390.4 L492.7 390.7 Z"/><path d="M386.0 585.4 L381.6 595.9 L369.5 603.7 L364.5 597.2 L360.8 585.9 L353.6 577.3 L372.2 575.6 L388.3 575.1 Z"/><path d="M494.4 407.6 L489.8 418.8 L476.5 416.3 L462.0 415.7 L470.1 406.7 L465.1 399.7 L478.1 391.6 L492.2 398.4 Z"/><path d="M144.4 594.1 L145.8 605.5 L131.8 599.9 L115.8 600.7 L113.4 586.7 L130.9 575.8 L138.9 578.2 Z"/><path d="M688.4 670.7 L681.3 675.1 L666.3 671.5 L663.1 661.6 L682.3 658.0 Z"/><path d="M411.3 581.9 L403.5 594.9 L383.7 588.7 L386.2 580.6 L402.0 575.4 Z"/><path d="M556.4 774.9 L550.5 786.0 L541.9 784.4 L533.1 782.1 L532.3 775.0 L528.8 765.2 L536.4 763.2 L545.9 769.8 Z"/><path d="M782.8 779.6 L774.1 788.7 L761.9 790.9 L759.0 779.0 L760.7 773.5 L776.7 772.8 Z"/><path d="M782.2 450.8 L775.7 458.7 L760.0 457.0 L767.9 447.5 L775.9 441.8 Z"/><path d="M80.5 404.9 L74.2 407.4 L69.0 407.4 L66.6 401.1 L74.4 400.6 Z"/><path d="M246.3 779.2 L246.9 787.6 L239.8 786.0 L235.1 785.3 L234.1 779.3 L234.9 775.4 L242.7 774.6 L244.9 774.9 Z"/><path d="M753.9 439.9 L751.7 443.3 L745.6 443.6 L741.6 439.8 L744.3 436.7 L751.7 437.2 Z"/><path d="M516.6 608.7 L504.2 620.0 L491.5 613.6 L490.8 603.7 L505.5 603.3 Z"/><path d="M575.8 413.7 L575.3 419.9 L564.0 423.0 L561.9 420.4 L559.7 416.2 L561.7 412.1 L565.0 410.9 L574.3 410.5 Z"/><path d="M447.3 595.9 L441.8 599.9 L438.9 603.0 L431.1 598.7 L431.4 594.6 L430.3 587.7 L438.6 590.6 L445.4 589.9 Z"/><path d="M140.1 630.3 L134.5 640.5 L119.7 635.4 L113.2 629.0 L116.8 614.1 L128.3 619.0 Z"/><path d="M642.7 772.9 L647.2 782.8 L631.2 784.7 L622.1 777.3 L622.5 769.2 L631.5 765.2 L642.9 763.0 Z"/><path d="M43.2 569.1 L41.1 576.0 L33.7 575.3 L31.1 569.3 L26.6 563.1 L34.7 564.1 L42.3 564.7 Z"/><path d="M179.0 623.0 L169.6 631.3 L157.7 637.3 L147.5 630.5 L144.4 617.5 L157.4 613.7 L170.2 615.7 Z"/><path d="M643.2 414.0 L631.1 421.1 L609.3 420.3 L608.4 410.0 L606.3 400.1 L630.6 403.5 Z"/><path d="M562.8 546.3 L560.7 552.1 L545.1 556.6 L533.8 552.4 L529.9 535.0 L544.4 535.8 L558.8 537.4 Z"/><path d="M39.0 723.6 L34.0 727.9 L30.6 729.8 L24.5 728.8 L26.8 722.4 L29.8 718.6 L33.9 719.7 Z"/><path d="M678.1 563.3 L672.7 564.3 L669.1 564.3 L665.9 561.7 L667.3 558.2 L672.5 557.5 Z"/><path d="M451.3 425.4 L441.4 433.7 L419.9 439.5 L408.1 423.1 L424.1 414.5 L434.2 407.3 Z"/><path d="M706.2 549.8 L696.8 557.3 L682.7 560.7 L687.6 548.6 L700.0 545.3 Z"/><path d="M678.5 753.4 L664.8 770.0 L645.6 762.1 L646.3 751.0 L661.6 741.2 Z"/><path d="M238.2 656.0 L236.6 662.7 L227.0 665.2 L223.0 661.2 L216.3 657.1 L223.8 650.7 L228.3 652.5 L236.2 652.9 Z"/><path d="M368.4 439.6 L361.9 445.2 L351.4 445.2 L341.0 448.5 L339.0 436.8 L342.6 430.7 L351.9 428.6 L368.6 427.9 Z"/><path d="M508.1 735.3 L512.9 740.6 L495.0 743.3 L491.0 738.4 L481.3 732.4 L491.8 724.7 L501.3 720.1 L504.9 729.5 Z"/><path d="M269.9 547.7 L266.3 549.3 L261.5 549.7 L257.0 548.3 L260.8 544.5 L262.2 543.5 L266.9 541.5 Z"/><path d="M469.5 568.9 L467.4 574.9 L460.7 580.4 L447.7 576.9 L449.0 568.9 L454.4 560.8 L468.7 561.9 Z"/><path d="M289.2 579.3 L291.2 588.4 L283.7 591.2 L264.5 589.8 L262.4 577.3 L269.0 575.7 L280.3 573.9 L290.6 575.5 Z"/><path d="M673.4 654.4 L664.8 660.6 L659.5 664.1 L655.1 660.9 L648.6 654.2 L657.7 650.2 L668.8 651.5 Z"/><path d="M496.1 460.6 L489.6 465.2 L473.1 474.4 L467.6 468.7 L463.4 456.6 L476.5 446.7 L488.8 454.2 Z"/><path d="M501.3 646.1 L486.6 659.0 L475.8 654.5 L472.0 640.0 L484.9 637.7 Z"/><path d="M585.6 762.8 L583.0 767.2 L578.1 766.7 L576.4 763.0 L577.5 757.5 L582.8 759.6 Z"/><path d="M321.7 561.1 L319.9 564.1 L313.0 568.3 L306.6 561.9 L303.6 558.5 L313.1 557.1 L318.1 555.6 Z"/><path d="M674.4 667.4 L667.0 671.7 L660.0 672.5 L660.7 666.9 L662.2 662.6 L667.9 664.7 Z"/><path d="M586.6 566.8 L578.1 580.3 L571.3 576.7 L557.6 572.2 L550.1 564.7 L563.6 551.4 L577.7 559.7 Z"/><path d="M372.0 720.7 L364.9 729.0 L356.3 726.3 L351.7 713.7 L362.5 712.6 Z"/><path d="M50.3 722.5 L42.0 726.7 L34.7 732.3 L32.4 723.5 L35.3 718.4 L43.8 715.0 Z"/><path d="M210.2 548.9 L201.1 560.0 L185.8 559.9 L180.3 540.6 L201.0 539.3 Z"/><path d="M411.7 625.7 L403.3 632.0 L397.7 631.0 L397.7 624.3 L405.0 623.2 Z"/><path d="M306.2 580.5 L302.9 596.2 L278.7 596.8 L266.9 588.0 L278.3 575.7 L300.9 571.8 Z"/><path d="M606.4 417.6 L598.6 425.6 L586.4 428.9 L582.4 416.8 L585.5 413.1 L599.2 412.0 Z"/><path d="M28.3 732.8 L27.1 736.1 L11.8 737.0 L5.4 737.2 L-7.0 725.6 L3.2 717.4 L14.7 722.5 L17.2 723.4 Z"/><path d="M574.6 492.0 L567.5 502.1 L554.7 500.5 L548.4 492.7 L555.3 479.3 L570.7 485.0 Z"/><path d="M458.4 405.3 L458.1 409.5 L451.2 409.5 L447.4 409.7 L445.6 405.7 L447.3 402.7 L452.5 399.8 L456.8 401.4 Z"/><path d="M196.6 488.6 L187.6 495.0 L176.0 498.7 L170.6 488.6 L177.7 485.6 L187.3 486.2 Z"/><path d="M754.8 505.5 L746.2 521.4 L733.4 513.4 L726.0 499.4 L741.8 495.4 Z"/><path d="M487.2 392.1 L485.1 396.3 L482.2 396.9 L475.7 394.5 L479.9 391.0 L481.7 390.5 L487.3 388.3 Z"/><path d="M339.4 577.5 L322.9 594.3 L305.4 587.9 L312.3 570.7 L327.1 563.2 Z"/><path d="M325.0 515.8 L323.3 519.0 L319.9 519.2 L316.2 518.5 L313.0 515.2 L316.4 515.0 L320.2 512.4 L320.9 515.0 Z"/><path d="M28.9 661.6 L23.9 670.6 L9.4 672.9 L5.8 668.1 L-0.5 660.2 L2.7 655.0 L12.4 648.6 L20.2 656.6 Z"/><path d="M429.5 723.9 L432.8 731.5 L420.9 732.6 L406.1 731.7 L408.1 725.7 L413.4 720.2 L421.5 715.0 L435.5 715.0 Z"/><path d="M284.5 487.2 L288.5 499.2 L273.7 500.4 L257.3 494.8 L260.6 479.1 L269.8 478.0 L280.8 482.7 Z"/><path d="M182.8 600.1 L184.0 609.6 L168.4 608.4 L155.0 604.6 L160.8 589.3 L185.3 590.5 Z"/><path d="M205.6 774.9 L200.6 787.1 L185.3 777.9 L177.6 768.2 L197.0 756.5 Z"/><path d="M26.1 538.9 L20.1 548.4 L7.2 545.9 L2.0 541.5 L3.6 534.8 L10.4 528.3 L17.3 531.8 Z"/><path d="M843.6 509.2 L839.8 514.0 L831.3 516.0 L819.4 522.6 L816.4 510.4 L815.9 501.9 L829.7 498.4 L844.1 496.1 Z"/><path d="M596.6 658.8 L595.3 660.2 L592.5 661.6 L590.8 660.2 L589.0 656.7 L592.3 656.5 L594.8 655.8 Z"/><path d="M725.8 379.2 L716.8 391.9 L706.8 385.3 L699.5 379.8 L706.5 375.3 L717.1 373.3 Z"/><path d="M364.6 773.1 L349.8 783.9 L342.3 787.1 L329.5 780.0 L337.3 769.1 L351.0 763.7 Z"/><path d="M289.7 654.9 L287.7 658.9 L284.0 658.0 L280.8 655.4 L283.4 653.5 L286.4 653.9 Z"/><path d="M778.1 756.6 L779.3 763.1 L765.6 763.2 L761.8 761.1 L755.8 757.1 L757.7 750.2 L767.8 749.6 L772.3 751.2 Z"/><path d="M331.9 478.9 L318.5 481.7 L310.0 481.7 L301.8 475.7 L309.6 469.4 L323.4 467.1 Z"/><path d="M537.0 514.2 L535.8 522.8 L520.2 522.8 L516.7 516.6 L527.3 511.5 L532.1 511.6 Z"/><path d="M83.8 559.1 L86.1 568.9 L63.9 562.6 L50.7 558.0 L62.5 547.2 L76.9 547.8 Z"/><path d="M797.2 787.4 L794.6 793.4 L778.7 800.6 L767.5 793.0 L768.2 786.0 L767.5 772.8 L779.1 773.0 L789.2 779.4 Z"/><path d="M219.8 646.9 L213.9 654.4 L191.1 654.3 L195.7 637.0 L211.7 636.8 Z"/><path d="M236.0 789.0 L231.8 797.4 L221.9 800.1 L213.5 790.3 L218.8 783.0 L238.3 778.4 Z"/><path d="M794.7 600.4 L792.7 604.5 L788.0 606.1 L785.5 603.7 L785.2 599.5 L788.0 598.5 L790.6 598.1 Z"/><path d="M393.8 379.2 L395.6 383.9 L390.5 386.8 L385.2 382.2 L383.0 380.0 L385.3 376.5 L390.0 377.0 L393.7 375.1 Z"/><path d="M284.2 646.6 L278.5 649.0 L273.2 649.9 L267.8 645.6 L270.0 636.9 L280.2 638.8 Z"/><path d="M22.6 666.8 L25.1 672.9 L12.4 671.4 L6.1 670.1 L6.0 662.3 L11.0 660.8 L22.8 659.3 Z"/><path d="M692.5 511.2 L688.5 512.9 L683.2 514.1 L683.0 508.8 L689.3 506.5 Z"/><path d="M675.3 778.7 L668.9 780.6 L663.2 786.1 L652.3 783.6 L641.3 773.7 L646.4 766.0 L659.6 766.3 L669.6 771.3 Z"/><path d="M83.1 790.8 L75.3 800.1 L64.1 805.7 L57.8 798.6 L56.1 795.3 L58.3 783.1 L67.1 782.0 L73.2 788.2 Z"/><path d="M64.0 577.4 L53.9 588.7 L36.7 582.3 L27.9 570.7 L51.2 567.3 Z"/><path d="M432.5 732.1 L430.9 737.5 L424.1 737.6 L419.2 732.9 L420.6 728.0 L431.8 726.5 Z"/><path d="M803.9 586.2 L793.7 597.4 L783.6 593.8 L779.0 580.0 L792.1 574.9 Z"/><path d="M66.4 520.7 L57.0 526.0 L49.2 524.2 L45.0 516.2 L55.5 514.8 Z"/><path d="M271.0 411.2 L267.2 418.7 L263.2 416.4 L256.0 412.5 L255.6 408.3 L260.6 407.8 L268.5 407.7 Z"/><path d="M388.4 604.4 L382.6 614.0 L369.4 611.7 L367.1 602.1 L379.5 595.8 Z"/><path d="M475.9 493.0 L472.3 495.2 L468.9 496.2 L466.9 494.8 L469.2 491.9 L473.4 491.8 Z"/><path d="M316.2 575.8 L301.6 581.6 L277.1 577.5 L279.9 563.9 L299.3 563.8 Z"/><path d="M414.5 755.1 L406.0 760.4 L399.5 760.9 L384.2 761.1 L384.4 743.4 L398.9 741.5 L408.7 742.9 Z"/><path d="M773.2 512.7 L768.8 515.8 L765.4 517.9 L758.7 510.7 L762.6 506.1 L769.8 507.1 Z"/><path d="M265.1 460.8 L254.4 474.2 L239.0 468.1 L236.4 458.5 L255.1 452.4 Z"/><path d="M238.5 538.9 L236.4 543.2 L233.6 541.0 L230.7 538.7 L234.1 537.4 L236.1 537.9 Z"/><path d="M437.8 521.8 L424.8 530.9 L412.7 526.2 L413.9 515.3 L421.7 514.5 Z"/><path d="M631.6 752.2 L614.1 764.4 L605.1 766.9 L592.6 755.7 L604.4 745.7 L614.9 744.6 Z"/><path d="M156.0 557.7 L147.4 561.2 L139.3 563.5 L126.0 562.8 L122.1 552.9 L139.6 542.6 L149.0 549.3 Z"/><path d="M547.1 520.0 L548.0 530.1 L533.7 529.1 L528.3 524.6 L528.8 518.1 L538.4 513.3 L544.9 512.9 Z"/><path d="M192.4 413.4 L193.6 415.4 L190.1 417.1 L186.0 415.4 L184.2 413.2 L185.6 410.0 L188.7 410.4 L192.9 409.7 Z"/><path d="M317.4 773.1 L315.3 785.1 L303.3 782.5 L299.9 782.6 L290.5 773.0 L291.9 768.9 L305.2 770.2 L316.6 767.5 Z"/><path d="M661.6 772.0 L657.9 782.8 L649.0 777.3 L639.5 771.1 L646.5 764.8 L659.7 768.8 Z"/><path d="M423.9 577.8 L410.5 586.5 L401.7 590.3 L396.2 582.0 L398.7 576.3 L399.5 570.4 L413.8 570.9 Z"/><path d="M200.2 793.5 L193.8 804.3 L183.1 803.4 L171.0 800.6 L158.9 790.7 L166.2 785.7 L181.3 786.3 L198.7 786.7 Z"/><path d="M359.5 583.8 L352.0 595.6 L340.7 589.2 L346.3 582.1 L350.8 580.3 Z"/><path d="M133.3 732.3 L127.7 736.5 L122.9 734.4 L114.1 732.9 L120.1 724.1 L130.5 723.9 Z"/><path d="M452.7 427.2 L449.1 431.8 L441.4 435.6 L435.6 432.2 L438.3 424.0 L444.6 422.3 L450.4 421.6 Z"/><path d="M234.3 654.1 L233.4 655.6 L227.5 658.7 L221.8 655.3 L226.2 651.4 L229.1 650.2 L234.8 650.3 Z"/><path d="M409.8 749.5 L395.1 757.4 L381.1 758.0 L384.4 740.5 L396.7 744.0 Z"/><path d="M762.1 454.9 L758.7 461.8 L743.3 458.2 L748.6 451.8 L757.9 447.4 Z"/><path d="M762.5 565.0 L758.9 570.1 L750.9 567.2 L748.2 563.0 L758.5 558.3 Z"/><path d="M303.5 487.0 L303.6 489.7 L298.7 493.0 L296.5 490.9 L295.2 487.5 L295.9 485.7 L300.3 484.4 L302.4 486.2 Z"/><path d="M278.1 488.8 L273.2 498.4 L255.3 496.9 L255.4 492.3 L258.1 485.7 L269.9 482.6 Z"/><path d="M199.1 498.4 L197.8 501.6 L191.2 502.0 L191.6 497.9 L192.8 496.1 L196.7 496.7 Z"/><path d="M479.9 490.0 L473.0 501.0 L461.3 502.0 L452.9 500.8 L453.4 488.5 L457.1 486.9 L462.5 482.6 L469.8 484.0 Z"/><path d="M283.0 440.1 L280.9 452.3 L257.2 445.9 L258.2 427.0 L275.5 425.7 Z"/><path d="M317.9 738.9 L310.0 751.2 L300.2 747.8 L291.2 746.4 L286.1 737.0 L288.1 732.5 L299.7 729.4 L311.4 735.9 Z"/><path d="M58.1 727.0 L54.6 731.3 L48.1 731.9 L43.3 728.3 L46.5 723.2 L58.1 723.6 Z"/><path d="M264.5 548.8 L262.5 550.9 L260.2 551.4 L256.0 550.1 L257.3 547.7 L258.7 547.4 L263.5 546.6 Z"/><path d="M657.8 683.1 L659.4 689.9 L645.6 688.9 L638.7 683.9 L646.3 675.7 L656.4 679.5 Z"/><path d="M825.5 635.3 L826.5 638.0 L823.3 638.0 L820.0 636.9 L819.5 635.0 L822.9 632.5 L825.9 633.5 Z"/><path d="M490.5 432.0 L483.6 440.9 L478.9 439.6 L471.8 435.2 L471.3 428.2 L476.1 426.7 L487.0 424.8 Z"/><path d="M121.5 581.6 L106.5 588.3 L96.8 593.1 L83.6 582.9 L87.4 574.5 L98.5 565.0 L108.9 572.4 Z"/><path d="M372.2 445.6 L363.8 459.2 L348.1 450.2 L340.4 438.8 L362.6 431.2 Z"/><path d="M245.1 581.6 L234.2 588.1 L228.3 588.0 L221.7 581.5 L225.2 577.2 L237.2 574.2 Z"/><path d="M461.6 439.8 L460.0 448.6 L445.7 448.1 L442.4 439.2 L451.9 434.0 L457.8 430.9 Z"/><path d="M560.4 448.8 L559.5 452.5 L551.7 454.5 L549.9 450.4 L552.3 443.6 L558.5 442.7 Z"/><path d="M648.7 435.2 L642.3 440.4 L635.1 437.9 L627.3 431.5 L634.7 426.2 L639.8 426.8 Z"/><path d="M799.0 599.9 L798.5 609.0 L784.6 609.9 L771.7 603.5 L772.8 594.0 L782.8 593.1 L795.9 593.7 Z"/><path d="M855.2 554.4 L843.7 565.0 L824.6 571.0 L823.9 556.2 L825.8 542.9 L843.9 544.6 Z"/><path d="M269.3 675.2 L261.6 680.6 L242.0 685.5 L235.1 678.6 L241.0 664.7 L259.2 664.8 Z"/><path d="M487.1 615.8 L477.3 624.6 L467.7 626.1 L454.0 621.9 L449.6 613.4 L459.9 603.7 L478.0 603.4 Z"/><path d="M750.7 583.7 L745.3 589.4 L730.7 592.0 L725.3 578.8 L732.4 572.5 L742.9 574.4 Z"/><path d="M473.1 631.3 L463.8 642.0 L454.9 642.7 L447.5 630.0 L453.6 625.0 L467.7 621.9 Z"/><path d="M677.9 433.5 L677.0 438.6 L671.0 438.8 L667.2 433.0 L672.0 430.4 L677.3 429.4 Z"/><path d="M260.0 471.5 L254.2 480.7 L244.6 475.7 L239.5 461.5 L255.7 464.8 Z"/><path d="M514.3 513.9 L499.6 520.6 L488.7 520.4 L483.5 512.2 L487.7 501.6 L504.4 503.6 Z"/><path d="M124.7 377.8 L116.2 387.7 L102.5 385.6 L106.3 370.0 L115.6 365.7 Z"/><path d="M807.3 780.8 L797.9 784.9 L789.1 792.6 L780.6 777.8 L781.5 767.9 L799.9 772.1 Z"/><path d="M459.6 706.5 L453.5 717.4 L442.1 716.4 L436.4 713.0 L435.2 706.6 L444.2 702.1 L451.9 706.0 Z"/><path d="M297.1 716.0 L292.1 719.6 L289.3 720.0 L282.0 720.2 L283.3 716.6 L281.8 710.1 L289.9 710.9 L291.3 712.3 Z"/><path d="M506.0 389.1 L504.8 393.0 L500.3 392.6 L495.3 392.4 L494.3 388.5 L495.2 386.1 L498.7 386.0 L501.9 387.2 Z"/><path d="M372.2 465.5 L368.2 467.7 L361.1 471.0 L352.3 467.6 L350.6 463.9 L352.3 459.6 L363.2 450.9 L370.4 456.3 Z"/><path d="M333.0 581.8 L331.7 590.5 L320.4 596.6 L306.4 595.1 L299.5 582.8 L303.4 575.6 L316.2 573.4 L325.4 571.3 Z"/><path d="M305.9 412.3 L304.2 426.0 L287.9 422.6 L282.4 409.9 L288.4 405.8 L303.6 403.4 Z"/><path d="M151.3 635.3 L148.3 647.2 L133.5 648.0 L129.0 641.1 L123.7 633.2 L132.9 628.2 L149.8 627.2 Z"/><path d="M369.2 589.1 L365.6 594.6 L364.7 602.9 L351.3 593.8 L346.8 587.0 L352.7 584.0 L359.8 580.4 L368.7 577.6 Z"/><path d="M470.1 641.6 L457.6 649.6 L447.0 648.8 L437.8 638.6 L454.2 634.3 Z"/><path d="M129.6 499.2 L126.4 502.5 L123.1 501.9 L121.0 497.8 L125.6 497.5 Z"/><path d="M597.5 673.1 L587.8 679.9 L582.7 681.5 L566.6 681.5 L566.8 676.2 L573.5 670.7 L582.4 663.3 L589.4 666.9 Z"/><path d="M394.6 527.3 L396.6 534.6 L385.4 539.1 L375.8 534.3 L374.2 519.6 L384.4 516.4 L395.6 522.9 Z"/><path d="M560.7 467.5 L553.1 476.5 L544.0 470.8 L536.5 464.9 L543.7 455.0 L552.7 460.2 Z"/><path d="M496.9 460.6 L490.8 473.6 L475.9 470.3 L464.6 465.6 L456.7 464.4 L462.7 448.2 L472.6 444.0 L491.6 453.0 Z"/><path d="M34.8 695.0 L28.7 709.6 L14.7 707.0 L4.9 703.3 L8.2 690.1 L12.4 688.0 L28.1 684.7 Z"/><path d="M765.3 612.3 L753.9 617.6 L729.5 621.5 L728.5 611.3 L734.1 602.4 L749.7 602.2 Z"/><path d="M102.8 385.0 L100.6 389.3 L98.3 389.7 L92.8 387.4 L90.2 381.4 L93.3 376.1 L100.4 380.4 Z"/><path d="M235.5 363.7 L231.2 367.7 L226.4 366.9 L224.5 363.5 L230.5 361.3 Z"/><path d="M430.8 793.0 L428.9 802.9 L409.4 802.0 L406.2 794.5 L411.2 785.2 L425.8 789.5 Z"/><path d="M86.9 792.0 L88.7 805.1 L71.4 802.4 L60.9 803.0 L68.4 789.9 L72.2 786.8 L80.7 788.6 Z"/><path d="M339.2 438.5 L337.4 447.2 L319.9 444.7 L324.2 434.4 L333.3 430.6 Z"/><path d="M861.6 466.5 L855.3 480.8 L842.1 481.0 L829.1 479.9 L825.5 471.9 L833.9 457.8 L842.7 453.1 L854.8 461.8 Z"/><path d="M519.0 716.1 L513.2 721.0 L507.0 720.4 L501.7 715.8 L507.2 709.8 L514.7 710.7 Z"/><path d="M583.0 711.8 L582.7 712.4 L579.8 715.2 L578.3 713.7 L576.3 710.3 L577.8 709.5 L581.9 707.6 L583.5 709.0 Z"/><path d="M79.3 537.1 L67.0 545.3 L51.6 544.3 L51.0 528.5 L68.4 524.9 Z"/><path d="M258.0 461.1 L256.5 466.9 L248.7 467.1 L241.7 462.7 L243.1 456.3 L248.1 454.2 L256.8 454.3 Z"/><path d="M322.9 480.9 L311.7 487.9 L298.6 486.5 L300.2 477.7 L310.1 471.9 Z"/><path d="M40.8 555.1 L36.9 562.8 L19.2 564.3 L20.0 553.6 L21.7 549.6 L31.3 548.1 Z"/><path d="M134.2 551.5 L130.3 556.8 L118.5 557.5 L116.5 550.4 L121.9 546.6 L128.7 548.2 Z"/><path d="M317.5 417.4 L312.1 427.6 L292.1 424.9 L297.3 411.0 L311.4 411.8 Z"/><path d="M414.4 604.3 L405.6 614.2 L394.8 615.6 L389.1 611.1 L391.9 601.8 L393.5 594.5 L406.5 599.5 Z"/><path d="M440.1 570.2 L434.6 572.1 L428.5 578.2 L427.3 572.3 L418.9 571.0 L426.1 564.1 L430.9 564.9 L433.1 565.1 Z"/><path d="M322.1 374.6 L315.8 384.0 L311.1 380.2 L305.6 374.2 L307.3 368.8 L318.6 370.9 Z"/><path d="M637.1 532.3 L633.1 541.1 L624.6 543.1 L612.3 537.9 L606.0 532.2 L612.5 522.8 L623.4 515.8 L639.8 522.4 Z"/><path d="M573.3 490.8 L568.9 497.2 L561.4 497.1 L559.5 493.0 L559.3 489.2 L562.3 485.3 L569.5 486.7 Z"/><path d="M107.7 425.9 L94.7 437.3 L82.1 434.2 L77.5 424.0 L93.7 419.6 Z"/><path d="M423.2 581.8 L416.1 591.6 L407.8 594.3 L400.9 585.6 L410.7 578.6 L416.2 578.3 Z"/><path d="M715.9 606.5 L714.7 608.9 L704.0 611.6 L702.7 607.6 L701.6 603.9 L706.4 596.2 L715.3 601.2 Z"/><path d="M569.8 514.8 L571.2 518.7 L564.4 518.6 L556.1 517.1 L558.0 511.9 L561.5 508.0 L571.4 510.3 Z"/><path d="M460.8 463.7 L460.6 466.8 L457.0 467.3 L453.0 467.3 L454.2 464.5 L454.4 461.0 L456.6 460.6 L461.9 461.8 Z"/><path d="M91.0 523.4 L85.6 531.2 L79.2 526.0 L78.2 519.6 L89.9 515.4 Z"/><path d="M431.5 527.8 L432.9 538.5 L428.2 541.2 L413.8 535.0 L408.6 530.7 L417.9 521.3 L420.2 516.5 L435.8 519.1 Z"/><path d="M41.6 624.4 L29.8 629.6 L23.0 640.7 L14.6 628.9 L3.7 620.9 L22.8 613.9 L30.6 611.6 Z"/><path d="M18.6 689.9 L14.9 694.4 L10.0 698.9 L2.3 694.4 L-4.7 690.5 L1.3 685.7 L4.1 681.1 L19.5 683.0 Z"/><path d="M216.4 744.3 L200.8 753.1 L178.9 750.9 L179.7 737.4 L199.0 731.2 Z"/><path d="M252.8 737.9 L243.6 741.0 L239.5 743.0 L235.6 743.2 L232.1 736.7 L235.0 733.7 L240.9 731.9 L247.8 733.6 Z"/><path d="M470.6 615.0 L468.9 620.2 L459.0 617.2 L463.8 613.0 L467.7 611.3 Z"/><path d="M333.5 563.4 L326.4 572.9 L312.4 569.0 L315.6 561.1 L324.0 560.8 Z"/><path d="M568.5 456.0 L552.6 463.6 L540.5 458.1 L534.6 443.3 L549.8 445.5 Z"/><path d="M823.5 536.1 L821.7 537.9 L819.8 538.9 L816.2 538.5 L817.3 533.8 L819.3 533.8 L821.9 533.6 Z"/><path d="M654.4 454.8 L654.0 459.3 L647.3 460.1 L646.2 458.8 L643.0 457.3 L644.2 452.6 L647.7 450.8 L653.4 453.6 Z"/><path d="M430.7 766.1 L430.2 767.6 L426.1 767.7 L423.8 765.6 L427.4 762.9 L429.7 763.9 Z"/><path d="M763.6 668.8 L753.3 674.8 L750.1 679.8 L738.0 675.4 L729.9 669.7 L735.6 664.6 L743.8 657.3 L753.3 663.8 Z"/><path d="M762.0 380.4 L760.9 382.8 L756.6 382.5 L755.3 378.9 L760.6 377.3 Z"/><path d="M484.4 505.6 L482.5 507.7 L480.5 508.2 L477.2 505.9 L475.2 505.2 L477.7 503.1 L479.5 500.9 L481.4 503.0 Z"/><path d="M810.0 727.3 L805.9 730.7 L795.7 728.6 L795.9 723.4 L805.9 721.0 Z"/><path d="M507.0 598.5 L506.8 607.5 L496.2 603.7 L487.0 599.1 L482.2 594.4 L492.1 586.3 L503.8 588.5 Z"/><path d="M453.2 483.0 L447.7 489.4 L434.4 484.9 L436.5 480.8 L443.7 476.4 Z"/><path d="M179.9 769.5 L178.8 771.2 L176.2 772.3 L173.0 770.8 L171.9 769.3 L171.8 766.7 L176.0 764.8 L179.6 766.4 Z"/><path d="M204.9 546.3 L201.0 551.4 L191.1 549.4 L191.4 543.5 L199.0 541.2 Z"/><path d="M23.1 524.1 L22.0 526.5 L16.1 529.1 L11.7 528.3 L8.7 523.7 L10.8 518.2 L17.5 518.1 L22.8 521.3 Z"/><path d="M461.6 399.7 L453.2 408.6 L448.0 403.1 L442.3 397.2 L452.9 394.6 Z"/><path d="M573.7 572.5 L564.6 584.1 L554.9 587.9 L542.5 574.3 L545.1 567.5 L549.6 560.9 L567.8 559.1 Z"/><path d="M808.5 693.8 L802.0 699.5 L793.1 698.5 L788.8 698.3 L792.5 689.6 L798.3 685.8 L803.0 686.0 Z"/><path d="M109.4 466.7 L106.2 477.8 L93.1 479.7 L88.3 472.9 L76.7 467.2 L86.9 457.8 L98.1 459.2 L103.7 459.6 Z"/><path d="M110.9 568.1 L106.1 569.6 L101.6 571.3 L100.4 569.6 L99.2 566.1 L101.5 563.8 L105.3 564.8 Z"/><path d="M609.8 608.9 L604.3 610.6 L600.7 614.7 L593.6 609.6 L596.5 605.9 L598.7 603.8 L608.8 602.3 Z"/><path d="M365.6 636.9 L363.5 646.9 L355.8 650.7 L343.4 648.9 L342.9 632.3 L334.7 623.1 L359.0 620.2 L363.9 630.0 Z"/><path d="M353.7 732.4 L351.2 735.6 L347.5 734.5 L348.6 731.1 L352.9 728.7 Z"/><path d="M339.8 384.0 L333.9 394.9 L319.5 387.0 L315.6 375.4 L332.0 373.0 Z"/><path d="M57.0 775.6 L53.7 780.9 L39.8 776.5 L38.5 769.8 L50.0 765.3 Z"/><path d="M753.5 398.4 L746.2 404.6 L740.7 406.6 L733.4 402.2 L734.8 393.0 L740.5 391.8 L747.3 392.9 Z"/><path d="M662.6 748.5 L661.2 765.9 L637.2 768.1 L622.8 752.9 L633.5 742.2 L654.5 741.6 Z"/><path d="M264.3 720.4 L254.6 738.0 L235.9 735.5 L231.3 711.3 L250.8 706.1 Z"/><path d="M670.5 647.2 L670.8 651.1 L667.1 649.8 L662.2 648.5 L662.0 646.6 L667.8 644.8 L669.4 646.1 Z"/><path d="M314.9 450.1 L306.0 455.6 L299.4 465.5 L288.5 456.5 L285.5 453.3 L286.4 443.9 L298.3 443.6 L307.3 443.1 Z"/><path d="M72.0 441.5 L70.8 444.3 L63.2 443.8 L62.7 440.2 L64.1 437.5 L72.6 434.8 Z"/><path d="M442.7 465.4 L441.6 470.3 L433.8 472.0 L431.1 468.5 L430.4 465.4 L436.1 456.6 L445.1 459.6 Z"/><path d="M571.1 637.4 L572.3 641.4 L565.1 644.2 L558.6 641.5 L559.7 637.7 L560.6 632.2 L567.7 628.4 L570.9 634.7 Z"/><path d="M298.8 751.8 L296.4 756.2 L285.1 757.7 L282.6 754.4 L275.9 747.1 L286.4 745.4 L295.4 744.1 Z"/><path d="M733.0 416.1 L729.4 422.9 L717.0 429.0 L712.1 423.4 L713.7 417.0 L709.1 411.1 L722.8 411.1 L729.1 410.2 Z"/><path d="M759.3 566.4 L754.3 579.3 L736.0 570.6 L737.6 563.2 L750.9 561.0 Z"/><path d="M352.9 454.2 L348.6 457.1 L344.5 461.3 L340.3 457.6 L339.9 455.9 L338.6 450.6 L346.0 447.6 L351.9 452.3 Z"/><path d="M398.1 472.5 L395.4 476.5 L389.9 475.7 L391.3 470.5 L397.3 469.3 Z"/><path d="M290.0 693.3 L282.0 700.4 L272.6 697.3 L277.2 691.7 L284.4 687.5 Z"/><path d="M532.0 381.7 L519.3 399.1 L502.7 391.8 L505.4 381.9 L517.1 378.0 Z"/><path d="M826.6 534.2 L826.4 540.7 L820.0 538.0 L816.1 534.3 L818.8 530.4 L825.9 531.6 Z"/><path d="M288.2 552.1 L277.3 563.2 L272.9 557.8 L273.5 550.6 L277.5 548.4 Z"/><path d="M132.0 759.9 L131.3 769.0 L121.4 773.5 L108.5 768.4 L107.4 763.4 L107.1 752.7 L120.4 751.0 L128.6 757.8 Z"/><path d="M545.1 606.6 L546.5 616.0 L534.1 612.1 L523.6 610.3 L512.8 603.5 L526.8 598.7 L531.7 590.2 L543.0 595.9 Z"/><path d="M857.0 464.8 L845.0 471.0 L839.2 474.7 L822.0 473.1 L819.6 461.4 L822.8 454.7 L836.7 456.6 L844.5 454.9 Z"/><path d="M800.4 615.6 L795.0 625.8 L778.8 624.1 L765.4 628.2 L767.9 618.4 L771.5 610.1 L782.8 600.3 L788.2 610.6 Z"/><path d="M64.7 665.9 L57.8 671.2 L46.8 678.5 L41.4 677.3 L40.4 669.5 L45.3 663.0 L48.8 660.1 L56.6 662.5 Z"/><path d="M223.4 563.1 L220.8 565.0 L218.3 568.8 L208.3 566.3 L212.5 561.1 L211.7 558.3 L215.2 555.0 L222.5 556.5 Z"/><path d="M485.8 496.3 L480.8 501.5 L461.2 501.5 L451.8 495.3 L458.8 487.5 L462.3 478.3 L473.4 487.3 Z"/><path d="M735.2 599.0 L737.0 601.0 L731.8 603.0 L728.4 600.2 L724.8 598.2 L728.4 596.6 L730.9 593.2 L734.5 594.6 Z"/><path d="M35.7 741.8 L32.6 750.3 L25.3 747.4 L22.9 742.5 L26.2 738.6 L32.6 738.1 Z"/></g>
<path d="M699.3 609.2 L710.1 613.9 L722.4 630.8 L734.8 641.6 L744.0 653.9 L750.2 666.3 L774.8 667.8 L780.2 677.0 L785.6 694.0 L791.0 693.2 L791.8 664.7 L807.2 660.1 L822.6 649.3 L846.0 638.5 L846.0 627.7 L830.3 635.4 L807.2 641.6 L791.8 646.2 L784.1 646.2 L776.4 640.1 L761.0 632.4 L750.2 623.1 L737.9 609.2 Z" fill="#e5f0ff"/>
<path d="M625.0 600.0 L636.2 609.2 L642.3 638.5 L640.8 674.0 L634.6 675.5 L630.0 661.6 L620.0 640.0 Z" fill="#e5f0ff"/>
<path d="M696.3 652.4 L700.0 651.0 L702.4 656.0 L699.0 660.1 Z" fill="#e5f0ff"/>
<path d="M675.0 692.0 L679.0 691.0 L680.0 697.0 L676.0 698.0 Z" fill="#e5f0ff"/>
<path d="M679.0 700.0 L682.0 699.0 L683.0 706.0 L680.0 707.0 Z" fill="#e5f0ff"/>
<path d="M702.0 708.0 L707.0 706.0 L708.0 713.0 L703.0 717.0 Z" fill="#e5f0ff"/>
<path d="M420.0 745.0 L440.0 735.0 L457.6 722.0 L471.4 712.0 L485.2 708.7 L499.0 711.4 L512.8 707.3 L526.6 712.8 L547.3 725.3 L554.2 734.9 L554.2 740.0 L500.0 745.0 L460.0 748.0 Z" fill="#e5f0ff"/>
<path d="M360.0 666.4 L390.1 665.6 L420.2 661.1 L442.8 658.1 L453.4 664.1 L457.9 670.1 L457.6 675.6 L448.0 678.0 L400.0 685.0 L360.0 690.0 Z" fill="#e5f0ff"/>
<path d="M457.6 675.6 L471.4 674.2 L485.2 675.6 L489.4 688.0 L485.2 699.0 L475.6 705.9 L464.5 704.5 L453.5 696.3 L449.3 688.0 Z" fill="#e5f0ff"/>
<path d="M400.0 690.0 L450.7 685.2 L453.5 696.3 L440.0 702.0 L400.0 708.0 Z" fill="#e5f0ff"/>
<path d="M448.0 630.0 L456.2 630.0 L452.1 646.6 L448.0 643.8 Z" fill="#e5f0ff"/>
<path d="M590.0 500.0 L596.0 496.0 L600.0 505.0 L592.0 508.0 Z" fill="#e5f0ff"/>
<path d="M700.0 700.0 L706.0 697.0 L709.0 705.0 L703.0 708.0 Z" fill="#e5f0ff"/>
<path d="M735.0 725.0 L740.0 720.0 L744.0 735.0 L738.0 738.0 Z" fill="#e5f0ff"/>
<path d="M640.0 690.0 L646.0 688.0 L648.0 698.0 L642.0 700.0 Z" fill="#e5f0ff"/>
<path d="M394.0 514.0 L391.0 524.0 L387.0 532.0 L380.0 538.0 L365.0 548.0 L350.0 560.0 L340.0 573.0 L335.0 582.0 L331.0 592.0 L320.0 605.0 L330.0 617.0" fill="none" stroke="#efd9b8" stroke-width="0.8" stroke-linejoin="round" stroke-linecap="round" opacity="0.9"/>
<path d="M440.0 612.0 L455.0 605.0 L470.0 590.0" fill="none" stroke="#efd9b8" stroke-width="0.8" stroke-linejoin="round" stroke-linecap="round" opacity="0.9"/>
<path d="M583.0 660.0 L620.0 620.0 L700.0 600.0 L730.0 640.0 L760.0 680.0 L790.0 690.0 L815.0 655.0 L835.0 640.0" fill="none" stroke="#efd9b8" stroke-width="0.8" stroke-linejoin="round" stroke-linecap="round" opacity="0.9"/>
<path d="M775.0 688.0 L800.0 660.0 L820.0 650.0" fill="none" stroke="#efd9b8" stroke-width="0.8" stroke-linejoin="round" stroke-linecap="round" opacity="0.9"/>
<path d="M270.0 720.0 L262.0 700.0 L266.0 680.0 L275.0 660.0 L272.0 640.0" fill="none" stroke="#efd9b8" stroke-width="0.8" stroke-linejoin="round" stroke-linecap="round" opacity="0.9"/>
<clipPath id="lateclip"><path d="M318.0 685.0 L341.0 679.0 L360.0 692.7 L375.1 686.7 L397.7 679.2 L420.2 674.6 L441.3 673.9 L450.4 670.1 L457.9 674.6 L453.4 677.6 L441.3 679.2 L420.2 683.7 L397.7 688.2 L375.1 694.2 L360.0 697.2 L325.0 698.0 L315.0 692.0 Z" fill="#000"/><path d="M366.0 706.3 L382.6 700.2 L405.2 695.7 L427.8 691.2 L450.4 689.7 L456.4 692.7 L457.9 698.7 L444.3 703.3 L420.2 706.3 L397.7 710.8 L378.1 715.3 L366.0 718.3 Z" fill="#000"/><path d="M364.5 724.3 L382.6 715.3 L405.2 710.8 L427.8 704.8 L450.4 700.2 L465.4 703.3 L469.9 712.3 L465.4 718.3 L450.4 724.3 L435.3 731.9 L420.2 739.4 L405.2 745.4 L382.6 745.4 L364.5 742.4 Z" fill="#000"/></clipPath>
<path d="M318.0 685.0 L341.0 679.0 L360.0 692.7 L375.1 686.7 L397.7 679.2 L420.2 674.6 L441.3 673.9 L450.4 670.1 L457.9 674.6 L453.4 677.6 L441.3 679.2 L420.2 683.7 L397.7 688.2 L375.1 694.2 L360.0 697.2 L325.0 698.0 L315.0 692.0 Z" fill="#fafbf9" stroke="#eadfca" stroke-width="0.7"/>
<path d="M366.0 706.3 L382.6 700.2 L405.2 695.7 L427.8 691.2 L450.4 689.7 L456.4 692.7 L457.9 698.7 L444.3 703.3 L420.2 706.3 L397.7 710.8 L378.1 715.3 L366.0 718.3 Z" fill="#fafbf9" stroke="#eadfca" stroke-width="0.7"/>
<path d="M364.5 724.3 L382.6 715.3 L405.2 710.8 L427.8 704.8 L450.4 700.2 L465.4 703.3 L469.9 712.3 L465.4 718.3 L450.4 724.3 L435.3 731.9 L420.2 739.4 L405.2 745.4 L382.6 745.4 L364.5 742.4 Z" fill="#fafbf9" stroke="#eadfca" stroke-width="0.7"/>
<g clip-path="url(#lateclip)" fill="#f0f3ed"><path d="M428.5 712.9 L425.8 718.0 L418.7 719.3 L414.6 712.8 L418.4 707.0 L426.4 709.2 Z"/><path d="M471.7 689.4 L470.6 695.5 L462.9 695.5 L457.1 690.4 L461.9 684.4 L471.6 684.4 Z"/><path d="M372.2 688.9 L367.7 691.4 L358.9 694.0 L355.3 687.4 L358.3 681.7 L368.0 680.8 Z"/><path d="M390.4 729.3 L389.3 732.6 L382.1 732.9 L381.5 728.8 L382.5 726.5 L386.1 726.6 Z"/><path d="M429.8 707.7 L427.5 714.9 L418.5 712.2 L412.0 709.2 L417.6 703.5 L426.4 703.1 Z"/><path d="M470.4 735.7 L465.6 743.4 L461.2 741.0 L457.9 737.1 L458.3 732.6 L466.3 731.3 Z"/><path d="M470.1 690.7 L468.6 695.0 L459.1 694.3 L455.7 688.8 L458.2 685.6 L468.6 685.5 Z"/><path d="M422.4 713.8 L417.4 717.3 L411.6 716.6 L406.7 715.2 L411.7 709.3 L414.9 711.4 Z"/><path d="M397.6 743.0 L396.8 746.1 L389.3 744.4 L384.5 741.1 L387.2 739.4 L393.3 739.3 Z"/><path d="M440.5 733.4 L431.2 738.7 L420.3 740.9 L416.2 733.3 L425.7 731.6 L435.5 730.1 Z"/><path d="M480.9 743.5 L475.2 749.3 L466.4 749.1 L458.9 746.1 L462.5 740.3 L471.5 741.4 Z"/><path d="M466.0 688.9 L464.5 691.9 L460.5 691.2 L459.2 688.4 L460.6 686.8 L463.8 687.6 Z"/><path d="M385.2 726.2 L383.4 729.0 L377.6 729.2 L378.5 726.3 L379.6 724.4 L384.0 722.1 Z"/><path d="M387.9 698.9 L386.8 701.8 L382.4 701.4 L378.6 699.1 L383.3 696.2 L386.2 697.2 Z"/><path d="M369.7 699.5 L368.0 702.9 L361.6 702.6 L356.6 699.8 L362.5 697.7 L366.1 697.4 Z"/><path d="M397.1 724.8 L397.2 732.3 L386.9 730.5 L382.5 724.7 L389.9 721.1 L397.1 717.5 Z"/><path d="M381.9 740.1 L372.4 744.1 L369.2 743.6 L362.7 740.9 L365.8 735.4 L372.2 737.2 Z"/><path d="M416.3 694.1 L412.2 695.8 L407.0 699.2 L400.3 692.1 L404.5 688.8 L411.4 691.1 Z"/><path d="M375.6 728.1 L372.3 730.8 L364.8 732.0 L361.0 727.5 L366.7 724.5 L372.6 724.8 Z"/><path d="M407.5 689.9 L406.6 691.9 L402.9 692.6 L402.3 689.8 L402.5 687.9 L408.5 687.8 Z"/><path d="M465.3 734.6 L461.9 737.0 L459.9 736.2 L458.3 734.9 L459.4 733.1 L462.7 733.2 Z"/><path d="M432.8 692.2 L429.3 696.8 L424.9 695.6 L419.4 693.5 L422.4 689.7 L431.2 689.7 Z"/><path d="M403.5 687.9 L403.7 693.7 L394.0 695.3 L390.1 687.2 L394.9 682.4 L402.1 682.7 Z"/><path d="M381.7 696.9 L377.7 698.0 L372.5 699.4 L369.3 696.5 L374.2 694.1 L376.5 693.2 Z"/><path d="M441.3 729.1 L432.8 731.9 L425.0 731.2 L421.4 726.4 L423.1 722.5 L436.5 723.1 Z"/><path d="M443.4 697.4 L440.8 701.9 L431.7 701.6 L427.2 699.2 L432.5 691.1 L439.5 695.2 Z"/><path d="M385.2 741.3 L381.4 747.1 L371.6 745.1 L362.2 740.1 L366.0 737.0 L381.8 736.2 Z"/><path d="M435.5 733.9 L427.1 737.6 L416.4 741.6 L414.0 735.1 L415.1 725.8 L429.2 725.8 Z"/><path d="M376.8 697.2 L373.3 700.6 L369.1 699.8 L365.5 697.0 L369.7 695.9 L373.9 694.7 Z"/><path d="M452.3 702.9 L443.7 705.6 L434.7 707.4 L429.5 702.4 L432.8 695.1 L443.7 697.4 Z"/><path d="M401.8 728.6 L400.0 731.7 L391.4 733.4 L391.2 729.0 L392.7 723.5 L396.5 725.3 Z"/><path d="M456.8 694.9 L450.2 696.9 L444.7 699.7 L442.0 694.2 L445.6 690.1 L450.6 689.4 Z"/><path d="M384.3 704.1 L383.8 708.7 L378.1 708.0 L374.4 704.0 L377.9 701.1 L383.3 700.1 Z"/><path d="M406.1 685.7 L397.3 690.7 L389.0 691.6 L383.2 686.2 L387.2 682.2 L399.5 680.2 Z"/><path d="M394.6 729.6 L389.4 731.5 L382.7 731.5 L381.3 729.4 L384.9 724.2 L389.9 726.1 Z"/></g>
<path d="M511.7 425.9 L521.6 421.4 L534.9 423.6 L545.9 430.3 L554.7 421.4 L570.2 419.2 L574.6 430.3 L570.2 443.5 L561.4 447.9 L554.7 452.4 L561.4 467.8 L559.2 478.9 L543.7 472.2 L534.9 461.2 L519.4 454.6 L508.4 454.6 L512.8 436.9 Z" fill="#fcfcfb" stroke="#efe6d6" stroke-width="0.5"/>
<path d="M475.2 514.2 L488.5 507.6 L495.1 516.4 L486.3 523.0 L477.4 525.3 Z" fill="#fcfcfb" stroke="#efe6d6" stroke-width="0.5"/>
<path d="M352.0 535.0 L368.0 528.0 L383.0 527.0 L394.0 532.0 L390.0 541.0 L374.0 546.0 L358.0 543.0 Z" fill="#fcfcfb" stroke="#efe6d6" stroke-width="0.5"/>
<path d="M292.0 559.0 L302.0 550.0 L325.0 550.0 L345.0 553.0 L357.0 566.0 L350.0 573.0 L331.0 575.0 L328.0 588.0 L331.0 592.0 L308.0 588.0 L286.0 582.0 L289.0 569.0 Z" fill="#fcfcfb" stroke="#efe6d6" stroke-width="0.5"/>
<path d="M279.0 592.0 L292.0 587.0 L312.0 592.0 L315.0 605.0 L308.0 614.0 L289.0 608.0 L279.0 601.0 Z" fill="#fcfcfb" stroke="#efe6d6" stroke-width="0.5"/>
<path d="M239.0 655.0 L242.0 646.0 L254.0 640.0 L263.0 634.0 L266.0 625.0 L278.0 624.0 L279.0 637.0 L275.0 649.0 L272.0 661.0 L284.0 673.0 L282.0 691.0 L272.0 691.0 L266.0 679.0 L263.0 661.0 L254.0 658.0 L242.0 664.0 Z" fill="#fcfcfb" stroke="#efe6d6" stroke-width="0.5"/>
<path d="M242.0 688.0 L251.0 682.0 L257.0 688.0 L251.0 694.0 Z" fill="#fcfcfb" stroke="#efe6d6" stroke-width="0.5"/>
<path d="M211.0 715.0 L215.0 703.0 L224.0 700.0 L242.0 703.0 L248.0 712.0 L239.0 719.0 L218.0 721.0 Z" fill="#fcfcfb" stroke="#efe6d6" stroke-width="0.5"/>
<path d="M86.0 759.0 L93.0 762.0 L108.0 768.0 L105.0 777.0 L93.0 774.0 Z" fill="#fcfcfb" stroke="#efe6d6" stroke-width="0.5"/>
<path d="M56.0 797.0 L68.0 790.0 L75.0 797.0 Z" fill="#fcfcfb" stroke="#efe6d6" stroke-width="0.5"/>
<path d="M95.0 797.0 L102.0 789.0 L115.0 792.0 L117.0 797.0 Z" fill="#fcfcfb" stroke="#efe6d6" stroke-width="0.5"/>
<path d="M360.0 666.0 L390.0 665.6 L420.0 661.0 L443.0 658.0 L453.0 664.0 L458.0 670.0" fill="none" stroke="#efd9b8" stroke-width="0.9" stroke-linejoin="round" stroke-linecap="round" opacity="0.9"/>
<path d="M375.0 718.0 L400.0 711.0 L430.0 705.0 L455.0 700.0" fill="none" stroke="#efd9b8" stroke-width="0.9" stroke-linejoin="round" stroke-linecap="round" opacity="0.9"/>
</svg>
<div class="abs ml" style="left:269.7px;top:711.4px;color:#8d8886;opacity:0.8">ÅLESUND</div>
<svg class="abs" style="left:4px;top:365px" width="841" height="431" viewBox="4 365 841 431">
<rect x="265.7" y="409.4" width="317" height="343" fill="none" stroke="#48cfcc" stroke-width="1.9" stroke-dasharray="6 2.86" stroke-dashoffset="-1"/>
<path d="M381.3 487.1 L386.3 482.7 L393.8 480.2 L396.3 471.4 L400.1 468.9 L401.4 475.2 L400.1 482.7 L405.1 496.5 L402.6 505.3 L396.3 512.8 L391.3 511.6 L386.3 502.8 L388.8 495.2 L382.5 489 Z" fill="#fcfcfb"/>
<path d="M441 443 L444 441 L445 446 L442 447 Z" fill="#fcfcfb"/>
<path d="M440.3 443.8 L439.0 450.1 L432.7 453.8 L422.7 456.3 L413.9 459.5 L408.9 461.4 L406.4 463.9 L403.9 471.4 L401.4 473.9 L398.9 482.7 L397.6 490.2 L395.1 496.5 L391.3 500.3 L386.3 502.8 L388.8 507.8 L393.8 515.3 L398.9 509.0 L402.6 500.3 L405.1 495.2 L401.4 485.2 L398.9 480.2 L400.1 471.4 L396.3 470.2" fill="none" stroke="#1e9e9a" stroke-width="1.4" stroke-linejoin="round" stroke-linecap="round" opacity="1"/>
<path d="M396.3 471.4 L395.1 475.2 L392.6 480.2 L386.3 481.4 L381.3 486.5 L382.5 489.0 L388.8 489.0 L393.8 490.2" fill="none" stroke="#1e9e9a" stroke-width="1.3" stroke-linejoin="round" stroke-linecap="round" opacity="1"/>
<path d="M393.8 515.3 L391.0 522.0 L388.8 530.0" fill="none" stroke="#eaae01" stroke-width="1.2" stroke-linejoin="round" stroke-linecap="round" opacity="1"/>
<path d="M424.5 411.0 L427.0 414.0" fill="none" stroke="#2f7f86" stroke-width="1.2" stroke-linejoin="round" stroke-linecap="round" opacity="1"/>
<path d="M438.0 443.0 L443.0 445.0" fill="none" stroke="#98a1ae" stroke-width="1.1" stroke-linejoin="round" stroke-linecap="round" opacity="1"/>
<path d="M442.0 444.0 L444.0 447.0" fill="none" stroke="#eaae01" stroke-width="1.1" stroke-linejoin="round" stroke-linecap="round" opacity="1"/>
<path d="M406.0 462.0 l4 -2" stroke="#1e9e9a" stroke-width="1.3"/>
<path d="M395.0 471.0 l4 -2" stroke="#1e9e9a" stroke-width="1.3"/>
<path d="M392.0 516.0 l4 -2" stroke="#1e9e9a" stroke-width="1.3"/>
<path d="M386.0 504.0 l4 -2" stroke="#1e9e9a" stroke-width="1.3"/>
<path d="M410.0 460.0 l4 -2" stroke="#1e9e9a" stroke-width="1.3"/>
<path d="M394.0 479.0 L396.0 480.0" fill="none" stroke="#f6726a" stroke-width="1.1" stroke-linejoin="round" stroke-linecap="round" opacity="1"/>
<path d="M399.0 481.0 L400.0 483.0" fill="none" stroke="#f6726a" stroke-width="1.0" stroke-linejoin="round" stroke-linecap="round" opacity="1"/>
<path d="M266.6 719.1 L273.4 713.4 L284.8 711.7 L296.2 710.2 L307.7 711.1 L316.8 712.5 L325.9 713.4" fill="none" stroke="#1e9e9a" stroke-width="1.8" stroke-linejoin="round" stroke-linecap="round" opacity="1"/>
<path d="M266.6 725.9 L273.4 725.9 L284.8 723.7 L296.2 720.8 L307.7 717.0 L319.1 719.1 L325.9 717.9" fill="none" stroke="#1e9e9a" stroke-width="1.8" stroke-linejoin="round" stroke-linecap="round" opacity="1"/>
<path d="M268.8 721.4 L279.1 717.9 L290.5 715.7 L302.0 714.5 L313.4 715.1" fill="none" stroke="#1e9e9a" stroke-width="1.2" stroke-linejoin="round" stroke-linecap="round" opacity="1"/>
<path d="M314.5 713.4 L325.9 717.9 L341.9 715.7 L353.3 713.4 L364.7 714.5 L376.2 717.9" fill="none" stroke="#1e9e9a" stroke-width="2.4" stroke-linejoin="round" stroke-linecap="round" opacity="1"/>
<path d="M319.1 720.2 L330.5 722.5 L341.9 721.4 L353.3 720.2 L364.7 721.4 L376.2 721.4" fill="none" stroke="#1e9e9a" stroke-width="2.4" stroke-linejoin="round" stroke-linecap="round" opacity="1"/>
<path d="M321.4 724.8 L336.2 723.7 L353.3 723.7 L370.4 722.5" fill="none" stroke="#1e9e9a" stroke-width="1.8" stroke-linejoin="round" stroke-linecap="round" opacity="1"/>
<path d="M341.9 713.4 L348.8 712.2 L357.9 711.7 L370.4 713.4" fill="none" stroke="#1e9e9a" stroke-width="1.8" stroke-linejoin="round" stroke-linecap="round" opacity="1"/>
<path d="M359.0 720.2 L360.2 729.4 L359.0 738.5 L364.7 744.2 L376.2 749.9 L387.6 747.6 L404.7 745.3" fill="none" stroke="#1e9e9a" stroke-width="2.6" stroke-linejoin="round" stroke-linecap="round" opacity="1"/>
<path d="M355.6 736.2 L364.7 738.5 L371.6 743.1 L381.9 743.1 L393.3 741.9 L404.7 744.2" fill="none" stroke="#1e9e9a" stroke-width="2.0" stroke-linejoin="round" stroke-linecap="round" opacity="1"/>
<path d="M335.1 723.7 L336.2 733.9 L347.6 738.5 L355.6 740.8 L362.5 738.5" fill="none" stroke="#1e9e9a" stroke-width="1.4" stroke-linejoin="round" stroke-linecap="round" opacity="1"/>
<path d="M341.9 740.8 L348.8 743.1" fill="none" stroke="#1e9e9a" stroke-width="1.6" stroke-linejoin="round" stroke-linecap="round" opacity="1"/>
<path d="M364.7 706.5 L371.6 704.2 L376.2 700.8" fill="none" stroke="#1e9e9a" stroke-width="2.0" stroke-linejoin="round" stroke-linecap="round" opacity="1"/>
<path d="M294.0 697.4 L302.0 696.3 L312.2 692.3" fill="none" stroke="#1e9e9a" stroke-width="1.6" stroke-linejoin="round" stroke-linecap="round" opacity="1"/>
<path d="M321.4 696.3 L336.2 698.5 L353.3 695.1 L376.2 689.4 L393.3 681.4" fill="none" stroke="#1e9e9a" stroke-width="1.2" stroke-linejoin="round" stroke-linecap="round" opacity="1"/>
<path d="M297.4 698.5 L297.4 708.8" fill="none" stroke="#1e9e9a" stroke-width="1.3" stroke-linejoin="round" stroke-linecap="round" opacity="1"/>
<path d="M316.8 684.8 L322.5 683.1" fill="none" stroke="#1e9e9a" stroke-width="1.4" stroke-linejoin="round" stroke-linecap="round" opacity="1"/>
<path d="M376.2 717.9 L387.6 716.2 L399.0 717.9 L407.0 722.5" fill="none" stroke="#f6726a" stroke-width="1.5" stroke-linejoin="round" stroke-linecap="round" opacity="1"/>
<path d="M373.9 740.8 L387.6 732.8" fill="none" stroke="#f6726a" stroke-width="1.2" stroke-linejoin="round" stroke-linecap="round" opacity="1"/>
<path d="M317.9 721.4 L322.5 729.4 L325.9 737.4" fill="none" stroke="#f2c66a" stroke-width="1.2" stroke-linejoin="round" stroke-linecap="round" opacity="1"/>
<path d="M344.2 706.5 L348.8 711.1" fill="none" stroke="#f2c66a" stroke-width="1.2" stroke-linejoin="round" stroke-linecap="round" opacity="1"/>
<path d="M267.7 717.7 l1.2 -1.1" stroke="#eaae01" stroke-width="1.2"/>
<path d="M271.8 714.9 l-0.2 -1.2" stroke="#eaae01" stroke-width="1.2"/>
<path d="M267.0 719.5 l1.6 0.4" stroke="#eaae01" stroke-width="1.2"/>
<path d="M269.2 716.0 l1.7 -1.3" stroke="#eaae01" stroke-width="1.2"/>
<path d="M271.8 713.1 l0.3 0.2" stroke="#eaae01" stroke-width="1.2"/>
<path d="M270.0 715.4 l-0.5 0.1" stroke="#eaae01" stroke-width="1.2"/>
<path d="M265.7 717.8 l0.1 0.8" stroke="#1e9e9a" stroke-width="1.2"/>
<path d="M271.0 716.0 l1.1 0.6" stroke="#eaae01" stroke-width="1.2"/>
<path d="M268.5 717.8 l0.8 -0.6" stroke="#f6726a" stroke-width="1.2"/>
<path d="M272.1 713.2 l-0.6 1.2" stroke="#11807c" stroke-width="1.2"/>
<path d="M279.6 711.4 l0.3 1.1" stroke="#1e9e9a" stroke-width="1.2"/>
<path d="M277.6 713.1 l1.1 -1.2" stroke="#1e9e9a" stroke-width="1.2"/>
<path d="M273.8 713.8 l-1.6 0.6" stroke="#eaae01" stroke-width="1.2"/>
<path d="M282.3 713.2 l0.8 1.1" stroke="#f6726a" stroke-width="1.2"/>
<path d="M278.7 712.4 l-1.4 -1.2" stroke="#1e9e9a" stroke-width="1.2"/>
<path d="M281.1 711.3 l1.5 -0.0" stroke="#1e9e9a" stroke-width="1.2"/>
<path d="M275.0 712.4 l1.1 1.0" stroke="#eaae01" stroke-width="1.2"/>
<path d="M276.3 712.5 l1.6 -1.0" stroke="#1e9e9a" stroke-width="1.2"/>
<path d="M274.6 712.3 l1.2 -0.9" stroke="#1e9e9a" stroke-width="1.2"/>
<path d="M275.6 713.0 l0.2 1.3" stroke="#1e9e9a" stroke-width="1.2"/>
<path d="M281.3 712.5 l0.9 -0.1" stroke="#1e9e9a" stroke-width="1.2"/>
<path d="M284.7 712.4 l-0.4 -0.3" stroke="#1e9e9a" stroke-width="1.2"/>
<path d="M275.0 711.9 l1.7 -0.2" stroke="#eaae01" stroke-width="1.2"/>
<path d="M286.4 710.3 l-1.3 -1.1" stroke="#1e9e9a" stroke-width="1.2"/>
<path d="M287.6 712.3 l-0.4 0.4" stroke="#1e9e9a" stroke-width="1.2"/>
<path d="M296.0 710.2 l1.3 1.4" stroke="#eaae01" stroke-width="1.2"/>
<path d="M290.1 709.7 l0.9 0.7" stroke="#eaae01" stroke-width="1.2"/>
<path d="M290.9 711.0 l1.6 0.1" stroke="#eaae01" stroke-width="1.2"/>
<path d="M286.6 710.0 l-0.7 0.4" stroke="#1e9e9a" stroke-width="1.2"/>
<path d="M286.9 711.6 l-0.5 -0.8" stroke="#eaae01" stroke-width="1.2"/>
<path d="M291.0 711.3 l1.1 1.4" stroke="#1e9e9a" stroke-width="1.2"/>
<path d="M295.5 711.4 l1.1 -0.8" stroke="#1e9e9a" stroke-width="1.2"/>
<path d="M291.1 712.4 l-0.8 -0.7" stroke="#11807c" stroke-width="1.2"/>
<path d="M294.1 710.5 l1.8 1.3" stroke="#1e9e9a" stroke-width="1.2"/>
<path d="M288.2 710.3 l-0.6 -0.0" stroke="#eaae01" stroke-width="1.2"/>
<path d="M296.4 708.7 l-0.6 0.4" stroke="#1e9e9a" stroke-width="1.2"/>
<path d="M304.6 710.6 l0.9 -0.1" stroke="#1e9e9a" stroke-width="1.2"/>
<path d="M299.2 709.8 l1.6 0.6" stroke="#11807c" stroke-width="1.2"/>
<path d="M302.3 709.4 l-1.2 -1.0" stroke="#eaae01" stroke-width="1.2"/>
<path d="M299.2 711.2 l0.4 0.3" stroke="#eaae01" stroke-width="1.2"/>
<path d="M303.0 709.6 l-1.3 -1.4" stroke="#1e9e9a" stroke-width="1.2"/>
<path d="M307.8 711.1 l-0.2 1.0" stroke="#eaae01" stroke-width="1.2"/>
<path d="M304.8 710.2 l0.0 0.7" stroke="#f6726a" stroke-width="1.2"/>
<path d="M300.1 711.5 l1.5 -0.4" stroke="#eaae01" stroke-width="1.2"/>
<path d="M301.7 711.8 l1.2 1.1" stroke="#1e9e9a" stroke-width="1.2"/>
<path d="M296.7 710.3 l-0.2 -0.9" stroke="#11807c" stroke-width="1.2"/>
<path d="M297.2 709.2 l0.4 -1.1" stroke="#1e9e9a" stroke-width="1.2"/>
<path d="M297.5 710.3 l1.0 -1.1" stroke="#1e9e9a" stroke-width="1.2"/>
<path d="M301.9 710.0 l-1.4 -0.1" stroke="#11807c" stroke-width="1.2"/>
<path d="M309.1 709.8 l0.4 0.0" stroke="#f6726a" stroke-width="1.2"/>
<path d="M312.9 711.7 l1.1 0.0" stroke="#1e9e9a" stroke-width="1.2"/>
<path d="M310.0 712.6 l1.5 1.1" stroke="#f6726a" stroke-width="1.2"/>
<path d="M309.4 711.1 l-0.2 -1.2" stroke="#1e9e9a" stroke-width="1.2"/>
<path d="M308.6 711.9 l-1.4 0.8" stroke="#11807c" stroke-width="1.2"/>
<path d="M316.7 712.0 l1.4 1.3" stroke="#f6726a" stroke-width="1.2"/>
<path d="M311.0 711.1 l-1.2 0.5" stroke="#1e9e9a" stroke-width="1.2"/>
<path d="M310.3 712.9 l-0.6 -0.9" stroke="#1e9e9a" stroke-width="1.2"/>
<path d="M311.2 710.1 l-0.1 0.6" stroke="#1e9e9a" stroke-width="1.2"/>
<path d="M311.2 711.0 l-1.4 1.2" stroke="#eaae01" stroke-width="1.2"/>
<path d="M310.9 710.2 l-1.7 0.8" stroke="#f6726a" stroke-width="1.2"/>
<path d="M318.2 712.5 l1.1 -0.7" stroke="#1e9e9a" stroke-width="1.2"/>
<path d="M319.4 712.8 l-0.6 -0.6" stroke="#1e9e9a" stroke-width="1.2"/>
<path d="M323.1 714.4 l1.6 0.4" stroke="#f6726a" stroke-width="1.2"/>
<path d="M322.9 714.3 l-0.8 -1.1" stroke="#eaae01" stroke-width="1.2"/>
<path d="M318.4 712.2 l0.4 -1.3" stroke="#f6726a" stroke-width="1.2"/>
<path d="M324.6 714.5 l-1.6 -0.8" stroke="#f6726a" stroke-width="1.2"/>
<path d="M319.1 713.5 l-0.2 0.5" stroke="#f6726a" stroke-width="1.2"/>
<path d="M320.2 714.2 l-1.7 0.7" stroke="#eaae01" stroke-width="1.2"/>
<path d="M320.9 712.9 l-1.4 0.9" stroke="#1e9e9a" stroke-width="1.2"/>
<path d="M320.7 713.9 l1.7 -0.5" stroke="#1e9e9a" stroke-width="1.2"/>
<path d="M317.9 711.8 l0.8 -1.0" stroke="#1e9e9a" stroke-width="1.2"/>
<path d="M274.8 726.9 l-1.5 0.7" stroke="#eaae01" stroke-width="1.2"/>
<path d="M267.3 724.7 l-0.4 0.0" stroke="#11807c" stroke-width="1.2"/>
<path d="M273.5 726.5 l-0.1 -1.0" stroke="#eaae01" stroke-width="1.2"/>
<path d="M268.9 727.3 l-0.6 -1.3" stroke="#1e9e9a" stroke-width="1.2"/>
<path d="M271.8 725.0 l-0.4 -0.1" stroke="#f6726a" stroke-width="1.2"/>
<path d="M269.1 726.0 l-1.5 0.9" stroke="#eaae01" stroke-width="1.2"/>
<path d="M267.8 725.6 l-0.7 -0.7" stroke="#f6726a" stroke-width="1.2"/>
<path d="M270.7 726.7 l1.4 0.8" stroke="#1e9e9a" stroke-width="1.2"/>
<path d="M281.0 725.2 l-1.3 0.6" stroke="#1e9e9a" stroke-width="1.2"/>
<path d="M279.4 725.5 l0.5 0.7" stroke="#1e9e9a" stroke-width="1.2"/>
<path d="M281.6 724.2 l0.2 0.9" stroke="#1e9e9a" stroke-width="1.2"/>
<path d="M274.2 726.8 l0.7 0.5" stroke="#1e9e9a" stroke-width="1.2"/>
<path d="M274.6 724.3 l1.7 -0.3" stroke="#f6726a" stroke-width="1.2"/>
<path d="M277.2 723.5 l0.7 -0.0" stroke="#1e9e9a" stroke-width="1.2"/>
<path d="M274.3 726.7 l1.4 -1.1" stroke="#1e9e9a" stroke-width="1.2"/>
<path d="M280.2 724.7 l-1.5 -0.7" stroke="#11807c" stroke-width="1.2"/>
<path d="M280.9 725.0 l-0.0 -0.3" stroke="#1e9e9a" stroke-width="1.2"/>
<path d="M279.4 725.6 l0.5 -0.8" stroke="#1e9e9a" stroke-width="1.2"/>
<path d="M279.8 725.0 l-0.7 0.2" stroke="#1e9e9a" stroke-width="1.2"/>
<path d="M272.2 725.2 l-1.4 -0.8" stroke="#1e9e9a" stroke-width="1.2"/>
<path d="M279.6 724.2 l-0.1 -1.1" stroke="#1e9e9a" stroke-width="1.2"/>
<path d="M294.1 722.5 l-1.7 -0.1" stroke="#1e9e9a" stroke-width="1.2"/>
<path d="M295.6 721.2 l-0.4 1.2" stroke="#f6726a" stroke-width="1.2"/>
<path d="M294.2 719.8 l0.1 1.3" stroke="#1e9e9a" stroke-width="1.2"/>
<path d="M287.3 723.3 l0.7 -0.8" stroke="#eaae01" stroke-width="1.2"/>
<path d="M295.0 719.7 l1.6 0.5" stroke="#eaae01" stroke-width="1.2"/>
<path d="M290.1 722.2 l-0.7 1.0" stroke="#1e9e9a" stroke-width="1.2"/>
<path d="M285.6 724.7 l1.6 -0.9" stroke="#eaae01" stroke-width="1.2"/>
<path d="M285.7 722.9 l-0.4 1.4" stroke="#eaae01" stroke-width="1.2"/>
<path d="M291.1 721.8 l1.3 -0.6" stroke="#f6726a" stroke-width="1.2"/>
<path d="M285.9 723.9 l-0.9 -0.7" stroke="#eaae01" stroke-width="1.2"/>
<path d="M289.7 721.8 l1.4 0.9" stroke="#1e9e9a" stroke-width="1.2"/>
<path d="M293.3 723.2 l-1.1 -1.2" stroke="#1e9e9a" stroke-width="1.2"/>
<path d="M295.2 721.3 l0.5 -0.6" stroke="#eaae01" stroke-width="1.2"/>
<path d="M286.7 722.4 l-0.3 -0.6" stroke="#1e9e9a" stroke-width="1.2"/>
<path d="M299.9 720.3 l0.6 -0.6" stroke="#1e9e9a" stroke-width="1.2"/>
<path d="M302.3 717.7 l-1.5 0.0" stroke="#eaae01" stroke-width="1.2"/>
<path d="M305.7 717.6 l1.8 -0.1" stroke="#f6726a" stroke-width="1.2"/>
<path d="M296.9 719.0 l0.2 -0.5" stroke="#f6726a" stroke-width="1.2"/>
<path d="M301.4 718.5 l0.9 -0.2" stroke="#eaae01" stroke-width="1.2"/>
<path d="M301.0 718.9 l0.9 -0.0" stroke="#f6726a" stroke-width="1.2"/>
<path d="M302.4 719.2 l0.5 1.0" stroke="#1e9e9a" stroke-width="1.2"/>
<path d="M298.0 719.2 l0.5 -0.2" stroke="#1e9e9a" stroke-width="1.2"/>
<path d="M300.8 721.0 l-1.7 0.6" stroke="#eaae01" stroke-width="1.2"/>
<path d="M306.4 717.7 l-1.5 1.2" stroke="#eaae01" stroke-width="1.2"/>
<path d="M306.9 717.2 l-0.9 -1.1" stroke="#1e9e9a" stroke-width="1.2"/>
<path d="M298.1 720.8 l0.8 0.4" stroke="#11807c" stroke-width="1.2"/>
<path d="M304.8 718.1 l-1.8 -1.0" stroke="#eaae01" stroke-width="1.2"/>
<path d="M301.4 719.3 l0.5 0.1" stroke="#eaae01" stroke-width="1.2"/>
<path d="M313.4 716.7 l0.1 0.2" stroke="#f6726a" stroke-width="1.2"/>
<path d="M311.3 718.1 l0.1 1.4" stroke="#eaae01" stroke-width="1.2"/>
<path d="M310.3 718.6 l-0.1 -0.7" stroke="#eaae01" stroke-width="1.2"/>
<path d="M311.9 718.2 l-1.6 -0.9" stroke="#f6726a" stroke-width="1.2"/>
<path d="M318.2 717.6 l0.6 1.2" stroke="#eaae01" stroke-width="1.2"/>
<path d="M308.9 717.0 l-0.5 -0.3" stroke="#1e9e9a" stroke-width="1.2"/>
<path d="M307.1 718.1 l-1.1 1.3" stroke="#eaae01" stroke-width="1.2"/>
<path d="M312.2 716.9 l-0.8 1.1" stroke="#eaae01" stroke-width="1.2"/>
<path d="M309.3 717.6 l-0.1 1.1" stroke="#eaae01" stroke-width="1.2"/>
<path d="M308.6 718.4 l-1.0 1.3" stroke="#eaae01" stroke-width="1.2"/>
<path d="M307.9 716.0 l-0.2 0.6" stroke="#1e9e9a" stroke-width="1.2"/>
<path d="M310.1 716.4 l-0.6 -0.9" stroke="#eaae01" stroke-width="1.2"/>
<path d="M319.1 717.6 l0.8 0.9" stroke="#1e9e9a" stroke-width="1.2"/>
<path d="M325.7 716.8 l-0.8 -0.4" stroke="#eaae01" stroke-width="1.2"/>
<path d="M324.5 719.4 l-0.4 0.8" stroke="#eaae01" stroke-width="1.2"/>
<path d="M322.1 717.5 l-0.1 -0.4" stroke="#1e9e9a" stroke-width="1.2"/>
<path d="M324.5 717.6 l-1.7 -0.2" stroke="#1e9e9a" stroke-width="1.2"/>
<path d="M325.4 716.8 l-0.1 0.8" stroke="#eaae01" stroke-width="1.2"/>
<path d="M318.6 717.7 l-0.6 -0.6" stroke="#1e9e9a" stroke-width="1.2"/>
<path d="M326.0 717.3 l0.7 1.2" stroke="#1e9e9a" stroke-width="1.2"/>
<path d="M321.8 719.0 l0.5 1.2" stroke="#11807c" stroke-width="1.2"/>
<path d="M268.3 721.2 l1.6 -0.3" stroke="#1e9e9a" stroke-width="1.2"/>
<path d="M271.2 720.5 l-1.1 0.8" stroke="#1e9e9a" stroke-width="1.2"/>
<path d="M277.4 719.7 l-0.9 1.0" stroke="#1e9e9a" stroke-width="1.2"/>
<path d="M274.4 720.1 l-1.1 0.7" stroke="#1e9e9a" stroke-width="1.2"/>
<path d="M270.1 719.1 l0.2 -1.0" stroke="#1e9e9a" stroke-width="1.2"/>
<path d="M272.0 718.6 l-1.5 -1.1" stroke="#1e9e9a" stroke-width="1.2"/>
<path d="M274.6 719.5 l-1.3 -0.1" stroke="#eaae01" stroke-width="1.2"/>
<path d="M277.2 718.4 l0.6 -1.1" stroke="#11807c" stroke-width="1.2"/>
<path d="M276.9 718.7 l-0.9 -0.7" stroke="#f6726a" stroke-width="1.2"/>
<path d="M272.4 719.1 l1.4 0.2" stroke="#f6726a" stroke-width="1.2"/>
<path d="M271.9 721.7 l0.1 0.4" stroke="#1e9e9a" stroke-width="1.2"/>
<path d="M269.8 719.6 l-0.1 0.9" stroke="#eaae01" stroke-width="1.2"/>
<path d="M290.0 714.6 l-1.0 -1.3" stroke="#f6726a" stroke-width="1.2"/>
<path d="M287.0 715.7 l-0.5 1.0" stroke="#eaae01" stroke-width="1.2"/>
<path d="M283.5 717.8 l-1.4 0.3" stroke="#eaae01" stroke-width="1.2"/>
<path d="M285.4 716.1 l-1.6 1.4" stroke="#eaae01" stroke-width="1.2"/>
<path d="M280.3 719.1 l-1.8 -0.5" stroke="#11807c" stroke-width="1.2"/>
<path d="M285.9 715.8 l-1.7 -0.0" stroke="#eaae01" stroke-width="1.2"/>
<path d="M284.4 717.7 l0.2 0.4" stroke="#1e9e9a" stroke-width="1.2"/>
<path d="M279.2 718.3 l1.8 0.5" stroke="#1e9e9a" stroke-width="1.2"/>
<path d="M282.5 717.7 l-0.3 -1.3" stroke="#f6726a" stroke-width="1.2"/>
<path d="M288.8 716.6 l0.8 -0.8" stroke="#1e9e9a" stroke-width="1.2"/>
<path d="M280.4 717.7 l-1.5 0.2" stroke="#11807c" stroke-width="1.2"/>
<path d="M284.1 716.0 l0.2 0.4" stroke="#eaae01" stroke-width="1.2"/>
<path d="M288.3 716.2 l0.9 -0.9" stroke="#f6726a" stroke-width="1.2"/>
<path d="M293.5 714.3 l-1.4 -0.0" stroke="#eaae01" stroke-width="1.2"/>
<path d="M301.1 713.8 l1.2 -1.3" stroke="#eaae01" stroke-width="1.2"/>
<path d="M300.4 714.9 l-0.4 1.1" stroke="#1e9e9a" stroke-width="1.2"/>
<path d="M298.6 713.9 l1.3 0.3" stroke="#11807c" stroke-width="1.2"/>
<path d="M296.6 714.9 l-1.0 -0.3" stroke="#1e9e9a" stroke-width="1.2"/>
<path d="M296.1 713.9 l1.7 0.9" stroke="#eaae01" stroke-width="1.2"/>
<path d="M293.9 716.5 l-1.7 0.9" stroke="#1e9e9a" stroke-width="1.2"/>
<path d="M292.2 715.7 l1.0 0.4" stroke="#1e9e9a" stroke-width="1.2"/>
<path d="M293.3 715.0 l-0.2 -0.2" stroke="#f6726a" stroke-width="1.2"/>
<path d="M291.2 715.6 l-0.2 0.3" stroke="#eaae01" stroke-width="1.2"/>
<path d="M300.9 715.7 l-1.4 -1.0" stroke="#1e9e9a" stroke-width="1.2"/>
<path d="M294.2 715.0 l0.6 -1.3" stroke="#1e9e9a" stroke-width="1.2"/>
<path d="M293.3 715.0 l0.0 -1.2" stroke="#1e9e9a" stroke-width="1.2"/>
<path d="M307.3 716.2 l-1.7 -1.2" stroke="#eaae01" stroke-width="1.2"/>
<path d="M309.5 713.7 l1.7 -0.0" stroke="#eaae01" stroke-width="1.2"/>
<path d="M314.1 714.1 l0.8 -0.8" stroke="#11807c" stroke-width="1.2"/>
<path d="M311.8 714.3 l1.4 -0.6" stroke="#f6726a" stroke-width="1.2"/>
<path d="M310.2 715.0 l-1.1 -0.7" stroke="#1e9e9a" stroke-width="1.2"/>
<path d="M307.2 713.4 l-0.3 0.4" stroke="#eaae01" stroke-width="1.2"/>
<path d="M304.6 714.3 l1.0 -1.1" stroke="#11807c" stroke-width="1.2"/>
<path d="M308.4 714.4 l-0.2 0.1" stroke="#11807c" stroke-width="1.2"/>
<path d="M311.0 714.2 l0.5 -0.3" stroke="#1e9e9a" stroke-width="1.2"/>
<path d="M310.4 716.4 l-1.3 -0.5" stroke="#1e9e9a" stroke-width="1.2"/>
<path d="M302.1 714.9 l-0.7 0.0" stroke="#eaae01" stroke-width="1.2"/>
<path d="M306.9 715.8 l1.4 0.7" stroke="#1e9e9a" stroke-width="1.2"/>
<path d="M309.6 714.3 l-0.2 0.0" stroke="#1e9e9a" stroke-width="1.2"/>
<path d="M323.1 716.3 l-1.6 -1.2" stroke="#1e9e9a" stroke-width="1.2"/>
<path d="M320.1 716.1 l-1.0 0.2" stroke="#1e9e9a" stroke-width="1.2"/>
<path d="M319.9 716.6 l-1.2 -1.4" stroke="#1e9e9a" stroke-width="1.2"/>
<path d="M324.6 716.8 l0.5 1.0" stroke="#eaae01" stroke-width="1.2"/>
<path d="M323.0 715.9 l-1.6 0.9" stroke="#eaae01" stroke-width="1.2"/>
<path d="M325.1 717.8 l1.6 0.7" stroke="#1e9e9a" stroke-width="1.2"/>
<path d="M319.1 712.5 l-1.7 -0.9" stroke="#1e9e9a" stroke-width="1.2"/>
<path d="M318.1 712.4 l0.2 1.2" stroke="#1e9e9a" stroke-width="1.2"/>
<path d="M314.8 714.5 l0.5 -0.2" stroke="#1e9e9a" stroke-width="1.2"/>
<path d="M321.5 714.3 l-1.6 1.1" stroke="#1e9e9a" stroke-width="1.2"/>
<path d="M324.4 714.8 l-0.2 1.2" stroke="#11807c" stroke-width="1.2"/>
<path d="M316.1 712.3 l-0.9 0.4" stroke="#eaae01" stroke-width="1.2"/>
<path d="M317.6 715.8 l-0.9 -1.3" stroke="#11807c" stroke-width="1.2"/>
<path d="M322.6 717.1 l1.7 -0.6" stroke="#1e9e9a" stroke-width="1.2"/>
<path d="M326.8 715.8 l-1.7 -0.7" stroke="#1e9e9a" stroke-width="1.2"/>
<path d="M318.3 716.4 l1.5 -0.9" stroke="#1e9e9a" stroke-width="1.2"/>
<path d="M319.4 714.6 l0.5 0.5" stroke="#11807c" stroke-width="1.2"/>
<path d="M324.2 716.3 l0.1 -1.4" stroke="#11807c" stroke-width="1.2"/>
<path d="M316.8 712.3 l1.0 -0.3" stroke="#f6726a" stroke-width="1.2"/>
<path d="M321.5 714.6 l-1.7 -1.1" stroke="#eaae01" stroke-width="1.2"/>
<path d="M324.4 716.0 l-1.7 -1.0" stroke="#eaae01" stroke-width="1.2"/>
<path d="M319.8 714.4 l-1.6 0.3" stroke="#eaae01" stroke-width="1.2"/>
<path d="M320.1 716.4 l-1.6 1.0" stroke="#1e9e9a" stroke-width="1.2"/>
<path d="M326.9 715.8 l-1.1 -1.3" stroke="#eaae01" stroke-width="1.2"/>
<path d="M327.2 718.8 l1.2 0.4" stroke="#eaae01" stroke-width="1.2"/>
<path d="M316.0 712.9 l0.5 -0.6" stroke="#11807c" stroke-width="1.2"/>
<path d="M317.3 714.3 l-1.6 0.7" stroke="#f6726a" stroke-width="1.2"/>
<path d="M341.7 716.3 l1.3 0.3" stroke="#1e9e9a" stroke-width="1.2"/>
<path d="M326.0 717.6 l-1.4 -0.1" stroke="#11807c" stroke-width="1.2"/>
<path d="M327.0 718.8 l-1.5 0.9" stroke="#11807c" stroke-width="1.2"/>
<path d="M326.5 716.2 l0.9 -1.2" stroke="#11807c" stroke-width="1.2"/>
<path d="M329.7 718.0 l-1.1 -0.0" stroke="#11807c" stroke-width="1.2"/>
<path d="M332.9 716.1 l-0.8 -0.8" stroke="#eaae01" stroke-width="1.2"/>
<path d="M337.1 714.6 l1.0 -0.0" stroke="#1e9e9a" stroke-width="1.2"/>
<path d="M342.0 713.9 l-0.5 -0.3" stroke="#f6726a" stroke-width="1.2"/>
<path d="M334.0 715.2 l-1.7 -0.8" stroke="#1e9e9a" stroke-width="1.2"/>
<path d="M331.9 717.3 l1.7 0.4" stroke="#1e9e9a" stroke-width="1.2"/>
<path d="M339.4 716.2 l0.9 0.4" stroke="#1e9e9a" stroke-width="1.2"/>
<path d="M330.7 715.6 l-0.2 0.2" stroke="#11807c" stroke-width="1.2"/>
<path d="M330.9 718.0 l0.3 -1.0" stroke="#f6726a" stroke-width="1.2"/>
<path d="M335.0 715.7 l-0.8 0.7" stroke="#eaae01" stroke-width="1.2"/>
<path d="M339.7 717.0 l0.8 0.3" stroke="#eaae01" stroke-width="1.2"/>
<path d="M330.3 719.2 l1.7 0.6" stroke="#f6726a" stroke-width="1.2"/>
<path d="M329.6 716.0 l-1.3 -1.0" stroke="#1e9e9a" stroke-width="1.2"/>
<path d="M329.9 716.3 l0.5 -1.1" stroke="#eaae01" stroke-width="1.2"/>
<path d="M328.7 715.4 l1.3 -0.2" stroke="#1e9e9a" stroke-width="1.2"/>
<path d="M331.6 716.5 l-1.3 0.3" stroke="#eaae01" stroke-width="1.2"/>
<path d="M333.5 718.8 l0.7 0.2" stroke="#1e9e9a" stroke-width="1.2"/>
<path d="M337.8 717.2 l1.4 0.8" stroke="#1e9e9a" stroke-width="1.2"/>
<path d="M338.7 717.1 l-1.4 -0.2" stroke="#1e9e9a" stroke-width="1.2"/>
<path d="M331.0 719.1 l1.0 0.6" stroke="#eaae01" stroke-width="1.2"/>
<path d="M334.9 716.2 l-1.7 1.0" stroke="#1e9e9a" stroke-width="1.2"/>
<path d="M334.9 718.4 l-0.6 -1.4" stroke="#1e9e9a" stroke-width="1.2"/>
<path d="M341.0 714.3 l0.2 -0.9" stroke="#f6726a" stroke-width="1.2"/>
<path d="M340.4 716.2 l1.2 -0.1" stroke="#eaae01" stroke-width="1.2"/>
<path d="M329.1 715.3 l1.2 0.1" stroke="#11807c" stroke-width="1.2"/>
<path d="M334.5 715.7 l-1.1 0.0" stroke="#1e9e9a" stroke-width="1.2"/>
<path d="M341.8 716.3 l-1.6 -0.6" stroke="#1e9e9a" stroke-width="1.2"/>
<path d="M330.2 716.7 l0.5 0.5" stroke="#1e9e9a" stroke-width="1.2"/>
<path d="M333.5 715.8 l1.6 0.1" stroke="#1e9e9a" stroke-width="1.2"/>
<path d="M330.8 717.0 l-1.2 1.2" stroke="#eaae01" stroke-width="1.2"/>
<path d="M328.3 716.4 l0.2 -0.8" stroke="#1e9e9a" stroke-width="1.2"/>
<path d="M352.3 714.1 l1.1 -0.2" stroke="#11807c" stroke-width="1.2"/>
<path d="M354.4 714.0 l1.2 -0.4" stroke="#11807c" stroke-width="1.2"/>
<path d="M350.6 713.2 l1.7 0.5" stroke="#f6726a" stroke-width="1.2"/>
<path d="M348.7 715.9 l-0.9 -0.6" stroke="#f6726a" stroke-width="1.2"/>
<path d="M347.1 715.2 l1.4 -1.0" stroke="#1e9e9a" stroke-width="1.2"/>
<path d="M344.9 713.1 l1.5 0.8" stroke="#1e9e9a" stroke-width="1.2"/>
<path d="M345.0 715.9 l0.6 -0.8" stroke="#eaae01" stroke-width="1.2"/>
<path d="M341.8 716.0 l-1.3 -0.7" stroke="#1e9e9a" stroke-width="1.2"/>
<path d="M350.1 712.4 l1.1 -0.9" stroke="#1e9e9a" stroke-width="1.2"/>
<path d="M352.6 714.9 l1.4 0.1" stroke="#1e9e9a" stroke-width="1.2"/>
<path d="M348.3 714.2 l0.1 0.7" stroke="#eaae01" stroke-width="1.2"/>
<path d="M348.6 714.9 l-0.3 0.9" stroke="#f6726a" stroke-width="1.2"/>
<path d="M347.6 714.5 l0.7 -0.7" stroke="#eaae01" stroke-width="1.2"/>
<path d="M344.2 716.3 l1.2 -0.1" stroke="#eaae01" stroke-width="1.2"/>
<path d="M349.1 715.9 l-0.3 1.4" stroke="#f6726a" stroke-width="1.2"/>
<path d="M348.2 713.5 l-1.7 0.3" stroke="#1e9e9a" stroke-width="1.2"/>
<path d="M351.6 713.4 l0.0 -0.0" stroke="#eaae01" stroke-width="1.2"/>
<path d="M350.1 714.6 l-1.3 -1.1" stroke="#1e9e9a" stroke-width="1.2"/>
<path d="M348.7 715.4 l1.0 -0.8" stroke="#1e9e9a" stroke-width="1.2"/>
<path d="M346.5 714.9 l-0.8 -0.4" stroke="#11807c" stroke-width="1.2"/>
<path d="M346.8 716.7 l0.0 1.3" stroke="#11807c" stroke-width="1.2"/>
<path d="M350.7 713.4 l0.8 -1.0" stroke="#f6726a" stroke-width="1.2"/>
<path d="M351.2 715.6 l0.8 1.1" stroke="#1e9e9a" stroke-width="1.2"/>
<path d="M346.2 713.5 l-1.6 0.9" stroke="#eaae01" stroke-width="1.2"/>
<path d="M348.5 712.6 l1.5 0.3" stroke="#1e9e9a" stroke-width="1.2"/>
<path d="M360.9 714.9 l1.4 -1.2" stroke="#1e9e9a" stroke-width="1.2"/>
<path d="M354.4 714.0 l-1.4 -0.9" stroke="#eaae01" stroke-width="1.2"/>
<path d="M355.0 715.2 l-1.8 1.0" stroke="#1e9e9a" stroke-width="1.2"/>
<path d="M354.1 714.5 l-0.7 -0.2" stroke="#11807c" stroke-width="1.2"/>
<path d="M356.7 714.4 l-0.0 0.1" stroke="#eaae01" stroke-width="1.2"/>
<path d="M363.9 714.0 l1.5 -0.1" stroke="#1e9e9a" stroke-width="1.2"/>
<path d="M353.0 713.8 l1.7 -0.1" stroke="#1e9e9a" stroke-width="1.2"/>
<path d="M356.3 714.5 l1.4 0.4" stroke="#eaae01" stroke-width="1.2"/>
<path d="M356.0 714.6 l-1.5 1.0" stroke="#11807c" stroke-width="1.2"/>
<path d="M352.7 714.5 l-0.2 0.7" stroke="#eaae01" stroke-width="1.2"/>
<path d="M363.3 715.5 l1.3 0.6" stroke="#1e9e9a" stroke-width="1.2"/>
<path d="M354.9 714.4 l0.6 1.1" stroke="#1e9e9a" stroke-width="1.2"/>
<path d="M361.8 712.4 l-1.7 0.4" stroke="#eaae01" stroke-width="1.2"/>
<path d="M360.8 713.5 l0.4 1.3" stroke="#1e9e9a" stroke-width="1.2"/>
<path d="M363.3 713.5 l0.8 -0.1" stroke="#1e9e9a" stroke-width="1.2"/>
<path d="M357.3 711.9 l-1.2 0.8" stroke="#1e9e9a" stroke-width="1.2"/>
<path d="M360.0 713.7 l1.0 0.2" stroke="#f6726a" stroke-width="1.2"/>
<path d="M354.7 715.8 l1.1 0.3" stroke="#1e9e9a" stroke-width="1.2"/>
<path d="M364.2 712.2 l0.4 -0.5" stroke="#eaae01" stroke-width="1.2"/>
<path d="M359.9 713.3 l-0.4 0.8" stroke="#1e9e9a" stroke-width="1.2"/>
<path d="M355.8 714.5 l-0.9 -0.2" stroke="#f6726a" stroke-width="1.2"/>
<path d="M361.4 715.8 l-0.8 -1.0" stroke="#eaae01" stroke-width="1.2"/>
<path d="M365.7 712.8 l1.1 0.1" stroke="#11807c" stroke-width="1.2"/>
<path d="M362.2 714.4 l0.2 0.8" stroke="#1e9e9a" stroke-width="1.2"/>
<path d="M356.7 715.5 l-0.7 -1.2" stroke="#eaae01" stroke-width="1.2"/>
<path d="M370.2 717.7 l0.9 0.8" stroke="#1e9e9a" stroke-width="1.2"/>
<path d="M368.2 717.4 l-1.6 -0.3" stroke="#11807c" stroke-width="1.2"/>
<path d="M369.6 717.8 l-0.1 0.3" stroke="#f6726a" stroke-width="1.2"/>
<path d="M365.5 713.8 l-0.8 0.2" stroke="#1e9e9a" stroke-width="1.2"/>
<path d="M370.1 717.3 l-1.6 1.4" stroke="#eaae01" stroke-width="1.2"/>
<path d="M367.3 716.4 l-1.5 -0.5" stroke="#11807c" stroke-width="1.2"/>
<path d="M364.1 715.1 l-1.7 1.4" stroke="#eaae01" stroke-width="1.2"/>
<path d="M374.6 717.8 l1.5 -0.6" stroke="#f6726a" stroke-width="1.2"/>
<path d="M365.6 715.3 l1.7 -0.7" stroke="#1e9e9a" stroke-width="1.2"/>
<path d="M363.9 713.2 l-1.7 -1.3" stroke="#eaae01" stroke-width="1.2"/>
<path d="M369.9 715.7 l1.5 -1.2" stroke="#11807c" stroke-width="1.2"/>
<path d="M371.1 714.9 l-0.9 0.2" stroke="#eaae01" stroke-width="1.2"/>
<path d="M374.1 717.5 l-1.1 1.0" stroke="#1e9e9a" stroke-width="1.2"/>
<path d="M367.8 716.8 l-1.7 -0.7" stroke="#eaae01" stroke-width="1.2"/>
<path d="M370.5 717.5 l1.5 -0.7" stroke="#11807c" stroke-width="1.2"/>
<path d="M371.7 717.4 l-1.6 -1.0" stroke="#1e9e9a" stroke-width="1.2"/>
<path d="M375.3 717.9 l0.3 -0.2" stroke="#f6726a" stroke-width="1.2"/>
<path d="M372.1 716.2 l-1.4 -0.1" stroke="#1e9e9a" stroke-width="1.2"/>
<path d="M365.5 713.5 l1.4 -0.1" stroke="#1e9e9a" stroke-width="1.2"/>
<path d="M376.5 716.1 l-1.0 1.2" stroke="#11807c" stroke-width="1.2"/>
<path d="M376.3 715.9 l1.6 1.2" stroke="#1e9e9a" stroke-width="1.2"/>
<path d="M367.0 714.0 l-0.6 -0.7" stroke="#f6726a" stroke-width="1.2"/>
<path d="M365.5 714.2 l-1.6 0.6" stroke="#1e9e9a" stroke-width="1.2"/>
<path d="M369.5 718.0 l-0.3 -0.7" stroke="#f6726a" stroke-width="1.2"/>
<path d="M365.3 713.7 l-1.2 -0.0" stroke="#11807c" stroke-width="1.2"/>
<path d="M370.1 713.9 l-1.6 1.1" stroke="#1e9e9a" stroke-width="1.2"/>
<path d="M325.4 721.7 l-1.4 0.7" stroke="#f6726a" stroke-width="1.2"/>
<path d="M329.9 721.4 l1.5 -1.1" stroke="#eaae01" stroke-width="1.2"/>
<path d="M324.1 718.9 l1.7 -1.0" stroke="#1e9e9a" stroke-width="1.2"/>
<path d="M326.1 721.7 l-1.3 -1.4" stroke="#1e9e9a" stroke-width="1.2"/>
<path d="M328.7 720.7 l-1.7 -0.3" stroke="#1e9e9a" stroke-width="1.2"/>
<path d="M320.8 722.4 l1.0 0.6" stroke="#1e9e9a" stroke-width="1.2"/>
<path d="M319.5 718.9 l0.8 0.7" stroke="#1e9e9a" stroke-width="1.2"/>
<path d="M319.5 721.4 l1.1 0.2" stroke="#1e9e9a" stroke-width="1.2"/>
<path d="M319.5 721.7 l1.2 1.2" stroke="#1e9e9a" stroke-width="1.2"/>
<path d="M324.3 720.5 l1.3 -0.0" stroke="#1e9e9a" stroke-width="1.2"/>
<path d="M321.1 720.2 l0.6 -0.7" stroke="#11807c" stroke-width="1.2"/>
<path d="M327.6 719.5 l-0.5 0.3" stroke="#1e9e9a" stroke-width="1.2"/>
<path d="M319.2 720.0 l-1.5 -0.4" stroke="#1e9e9a" stroke-width="1.2"/>
<path d="M323.3 722.6 l0.8 -0.3" stroke="#11807c" stroke-width="1.2"/>
<path d="M325.7 723.6 l-0.0 0.0" stroke="#1e9e9a" stroke-width="1.2"/>
<path d="M325.3 719.3 l-1.0 -0.9" stroke="#eaae01" stroke-width="1.2"/>
<path d="M319.2 721.9 l-1.7 1.2" stroke="#eaae01" stroke-width="1.2"/>
<path d="M326.5 723.4 l0.3 0.1" stroke="#1e9e9a" stroke-width="1.2"/>
<path d="M325.4 723.5 l-1.2 -0.6" stroke="#1e9e9a" stroke-width="1.2"/>
<path d="M324.8 722.4 l-1.4 -0.3" stroke="#eaae01" stroke-width="1.2"/>
<path d="M321.0 722.1 l0.6 -0.1" stroke="#eaae01" stroke-width="1.2"/>
<path d="M325.6 719.0 l-0.4 -0.2" stroke="#1e9e9a" stroke-width="1.2"/>
<path d="M328.8 721.7 l1.0 -0.5" stroke="#eaae01" stroke-width="1.2"/>
<path d="M321.1 720.5 l1.1 1.2" stroke="#1e9e9a" stroke-width="1.2"/>
<path d="M329.9 720.1 l-1.3 0.5" stroke="#1e9e9a" stroke-width="1.2"/>
<path d="M336.2 722.8 l-0.5 0.1" stroke="#eaae01" stroke-width="1.2"/>
<path d="M331.0 722.5 l-1.0 -0.2" stroke="#eaae01" stroke-width="1.2"/>
<path d="M337.2 721.9 l1.1 1.1" stroke="#eaae01" stroke-width="1.2"/>
<path d="M338.5 722.1 l1.5 0.3" stroke="#f6726a" stroke-width="1.2"/>
<path d="M339.0 719.8 l-0.9 0.1" stroke="#eaae01" stroke-width="1.2"/>
<path d="M337.4 721.1 l-0.5 -0.9" stroke="#f6726a" stroke-width="1.2"/>
<path d="M333.2 724.3 l-1.5 0.3" stroke="#f6726a" stroke-width="1.2"/>
<path d="M340.9 721.5 l1.5 0.2" stroke="#f6726a" stroke-width="1.2"/>
<path d="M334.7 723.3 l1.2 0.3" stroke="#f6726a" stroke-width="1.2"/>
<path d="M337.7 720.5 l-0.5 1.1" stroke="#1e9e9a" stroke-width="1.2"/>
<path d="M333.9 723.6 l-0.9 -0.8" stroke="#eaae01" stroke-width="1.2"/>
<path d="M335.8 722.3 l1.5 -0.9" stroke="#eaae01" stroke-width="1.2"/>
<path d="M340.6 720.7 l-0.8 1.4" stroke="#f6726a" stroke-width="1.2"/>
<path d="M335.1 720.7 l0.4 -0.4" stroke="#eaae01" stroke-width="1.2"/>
<path d="M338.1 723.2 l0.8 -1.1" stroke="#f6726a" stroke-width="1.2"/>
<path d="M335.1 723.3 l-0.3 0.5" stroke="#eaae01" stroke-width="1.2"/>
<path d="M330.8 722.8 l1.2 0.0" stroke="#f6726a" stroke-width="1.2"/>
<path d="M340.0 722.8 l-0.8 0.4" stroke="#1e9e9a" stroke-width="1.2"/>
<path d="M338.6 721.4 l-1.8 0.7" stroke="#eaae01" stroke-width="1.2"/>
<path d="M337.2 723.9 l-1.3 1.0" stroke="#1e9e9a" stroke-width="1.2"/>
<path d="M334.2 720.5 l-0.2 -0.1" stroke="#11807c" stroke-width="1.2"/>
<path d="M337.8 721.2 l0.3 0.4" stroke="#1e9e9a" stroke-width="1.2"/>
<path d="M331.7 724.7 l-0.2 -0.9" stroke="#1e9e9a" stroke-width="1.2"/>
<path d="M332.4 722.5 l-1.0 0.9" stroke="#1e9e9a" stroke-width="1.2"/>
<path d="M336.3 722.6 l1.7 -0.8" stroke="#eaae01" stroke-width="1.2"/>
<path d="M348.6 718.7 l-0.9 1.1" stroke="#eaae01" stroke-width="1.2"/>
<path d="M345.5 720.2 l1.8 0.0" stroke="#1e9e9a" stroke-width="1.2"/>
<path d="M348.6 720.3 l-1.7 0.5" stroke="#f6726a" stroke-width="1.2"/>
<path d="M344.9 719.0 l-1.4 -0.4" stroke="#eaae01" stroke-width="1.2"/>
<path d="M346.8 721.2 l1.7 -0.0" stroke="#eaae01" stroke-width="1.2"/>
<path d="M347.5 723.1 l0.7 0.7" stroke="#f6726a" stroke-width="1.2"/>
<path d="M342.4 720.7 l1.2 0.0" stroke="#eaae01" stroke-width="1.2"/>
<path d="M344.9 722.1 l1.6 0.0" stroke="#11807c" stroke-width="1.2"/>
<path d="M353.6 720.4 l0.0 0.0" stroke="#11807c" stroke-width="1.2"/>
<path d="M342.7 721.7 l-1.4 0.2" stroke="#1e9e9a" stroke-width="1.2"/>
<path d="M350.1 721.5 l1.0 -0.5" stroke="#eaae01" stroke-width="1.2"/>
<path d="M347.6 719.7 l-1.4 -1.4" stroke="#11807c" stroke-width="1.2"/>
<path d="M340.8 722.5 l-0.8 0.4" stroke="#1e9e9a" stroke-width="1.2"/>
<path d="M350.2 721.1 l0.4 -1.0" stroke="#1e9e9a" stroke-width="1.2"/>
<path d="M347.9 718.7 l-1.2 0.1" stroke="#eaae01" stroke-width="1.2"/>
<path d="M351.8 721.8 l0.5 0.5" stroke="#eaae01" stroke-width="1.2"/>
<path d="M346.9 719.6 l-1.2 -0.7" stroke="#f6726a" stroke-width="1.2"/>
<path d="M344.8 721.6 l-1.1 0.3" stroke="#f6726a" stroke-width="1.2"/>
<path d="M340.9 720.9 l1.7 -0.2" stroke="#11807c" stroke-width="1.2"/>
<path d="M347.9 718.7 l1.3 -0.5" stroke="#1e9e9a" stroke-width="1.2"/>
<path d="M353.6 719.5 l-0.9 1.1" stroke="#1e9e9a" stroke-width="1.2"/>
<path d="M351.2 721.0 l0.8 -0.8" stroke="#1e9e9a" stroke-width="1.2"/>
<path d="M347.1 720.9 l1.3 -1.2" stroke="#11807c" stroke-width="1.2"/>
<path d="M343.3 719.0 l-0.4 -0.4" stroke="#f6726a" stroke-width="1.2"/>
<path d="M347.4 720.3 l-1.6 -1.1" stroke="#1e9e9a" stroke-width="1.2"/>
<path d="M362.1 720.0 l-0.1 -0.4" stroke="#eaae01" stroke-width="1.2"/>
<path d="M357.3 718.6 l-1.2 0.6" stroke="#11807c" stroke-width="1.2"/>
<path d="M353.4 721.8 l0.2 -0.1" stroke="#eaae01" stroke-width="1.2"/>
<path d="M361.3 720.6 l0.8 -0.3" stroke="#eaae01" stroke-width="1.2"/>
<path d="M363.0 723.3 l-1.1 1.0" stroke="#1e9e9a" stroke-width="1.2"/>
<path d="M363.0 723.2 l1.4 0.2" stroke="#1e9e9a" stroke-width="1.2"/>
<path d="M356.4 721.1 l-1.3 0.7" stroke="#eaae01" stroke-width="1.2"/>
<path d="M359.3 722.6 l1.0 -0.3" stroke="#1e9e9a" stroke-width="1.2"/>
<path d="M361.1 720.1 l0.8 0.5" stroke="#1e9e9a" stroke-width="1.2"/>
<path d="M361.0 719.7 l-1.6 1.2" stroke="#eaae01" stroke-width="1.2"/>
<path d="M363.7 719.8 l-0.7 -0.8" stroke="#1e9e9a" stroke-width="1.2"/>
<path d="M355.7 719.4 l1.2 -0.1" stroke="#1e9e9a" stroke-width="1.2"/>
<path d="M361.1 722.5 l-1.2 -0.4" stroke="#f6726a" stroke-width="1.2"/>
<path d="M363.3 722.9 l0.6 0.6" stroke="#eaae01" stroke-width="1.2"/>
<path d="M357.7 719.9 l-1.4 -0.6" stroke="#1e9e9a" stroke-width="1.2"/>
<path d="M356.9 719.3 l-1.7 -1.3" stroke="#1e9e9a" stroke-width="1.2"/>
<path d="M353.8 719.5 l0.9 0.1" stroke="#1e9e9a" stroke-width="1.2"/>
<path d="M362.5 721.2 l0.3 0.6" stroke="#eaae01" stroke-width="1.2"/>
<path d="M355.9 721.3 l1.6 -1.1" stroke="#f6726a" stroke-width="1.2"/>
<path d="M362.7 722.9 l0.3 0.5" stroke="#11807c" stroke-width="1.2"/>
<path d="M365.2 719.3 l-1.0 1.2" stroke="#f6726a" stroke-width="1.2"/>
<path d="M360.1 721.9 l1.8 0.3" stroke="#1e9e9a" stroke-width="1.2"/>
<path d="M356.0 719.8 l-0.2 -0.4" stroke="#1e9e9a" stroke-width="1.2"/>
<path d="M359.9 722.3 l-0.2 -1.2" stroke="#1e9e9a" stroke-width="1.2"/>
<path d="M361.0 721.1 l-1.3 0.7" stroke="#11807c" stroke-width="1.2"/>
<path d="M366.1 722.7 l-1.2 -0.9" stroke="#f6726a" stroke-width="1.2"/>
<path d="M372.5 720.3 l-1.2 -0.4" stroke="#eaae01" stroke-width="1.2"/>
<path d="M366.4 719.8 l0.7 0.5" stroke="#1e9e9a" stroke-width="1.2"/>
<path d="M366.3 721.4 l-1.3 0.4" stroke="#1e9e9a" stroke-width="1.2"/>
<path d="M371.1 722.3 l0.2 -0.5" stroke="#1e9e9a" stroke-width="1.2"/>
<path d="M374.3 722.5 l0.6 -1.0" stroke="#eaae01" stroke-width="1.2"/>
<path d="M377.4 721.0 l-1.4 -0.6" stroke="#eaae01" stroke-width="1.2"/>
<path d="M367.6 719.4 l-0.7 -1.1" stroke="#f6726a" stroke-width="1.2"/>
<path d="M370.3 719.9 l-0.1 -0.4" stroke="#1e9e9a" stroke-width="1.2"/>
<path d="M364.8 719.2 l-0.1 0.7" stroke="#11807c" stroke-width="1.2"/>
<path d="M369.6 720.3 l-0.0 -0.2" stroke="#1e9e9a" stroke-width="1.2"/>
<path d="M367.1 719.2 l0.5 0.4" stroke="#eaae01" stroke-width="1.2"/>
<path d="M376.1 720.3 l-1.5 0.7" stroke="#eaae01" stroke-width="1.2"/>
<path d="M364.6 719.8 l-1.1 0.4" stroke="#f6726a" stroke-width="1.2"/>
<path d="M376.3 719.9 l0.8 -0.5" stroke="#11807c" stroke-width="1.2"/>
<path d="M371.3 722.0 l-0.6 -0.4" stroke="#f6726a" stroke-width="1.2"/>
<path d="M370.5 722.8 l-1.6 -1.1" stroke="#eaae01" stroke-width="1.2"/>
<path d="M375.8 723.6 l1.5 1.2" stroke="#1e9e9a" stroke-width="1.2"/>
<path d="M370.4 719.9 l0.4 0.4" stroke="#f6726a" stroke-width="1.2"/>
<path d="M365.2 719.8 l1.7 -1.1" stroke="#1e9e9a" stroke-width="1.2"/>
<path d="M364.9 720.0 l-0.5 -1.3" stroke="#1e9e9a" stroke-width="1.2"/>
<path d="M373.2 721.4 l-0.8 0.5" stroke="#eaae01" stroke-width="1.2"/>
<path d="M370.3 720.7 l-1.8 1.3" stroke="#1e9e9a" stroke-width="1.2"/>
<path d="M367.7 720.8 l-0.2 0.2" stroke="#eaae01" stroke-width="1.2"/>
<path d="M367.4 719.5 l0.1 -0.2" stroke="#f6726a" stroke-width="1.2"/>
<path d="M329.7 723.1 l1.7 0.3" stroke="#1e9e9a" stroke-width="1.2"/>
<path d="M332.1 724.4 l0.6 0.2" stroke="#1e9e9a" stroke-width="1.2"/>
<path d="M327.2 724.8 l-0.7 -0.4" stroke="#eaae01" stroke-width="1.2"/>
<path d="M333.1 722.9 l0.9 0.5" stroke="#1e9e9a" stroke-width="1.2"/>
<path d="M323.8 724.8 l-0.5 -0.7" stroke="#1e9e9a" stroke-width="1.2"/>
<path d="M327.2 723.5 l0.2 -1.1" stroke="#eaae01" stroke-width="1.2"/>
<path d="M333.4 722.6 l0.6 0.6" stroke="#1e9e9a" stroke-width="1.2"/>
<path d="M324.6 724.7 l-1.4 0.0" stroke="#1e9e9a" stroke-width="1.2"/>
<path d="M328.8 723.8 l1.1 -1.0" stroke="#eaae01" stroke-width="1.2"/>
<path d="M328.8 725.2 l0.5 1.3" stroke="#eaae01" stroke-width="1.2"/>
<path d="M328.9 724.8 l-1.2 1.3" stroke="#1e9e9a" stroke-width="1.2"/>
<path d="M330.5 723.1 l0.4 -0.3" stroke="#11807c" stroke-width="1.2"/>
<path d="M320.7 725.3 l-0.1 -1.1" stroke="#eaae01" stroke-width="1.2"/>
<path d="M324.6 723.4 l-1.1 -1.1" stroke="#11807c" stroke-width="1.2"/>
<path d="M331.7 723.6 l-0.6 0.7" stroke="#11807c" stroke-width="1.2"/>
<path d="M332.4 722.9 l0.0 0.1" stroke="#f6726a" stroke-width="1.2"/>
<path d="M326.6 725.3 l-1.4 0.1" stroke="#f6726a" stroke-width="1.2"/>
<path d="M348.8 724.9 l-0.9 -0.4" stroke="#1e9e9a" stroke-width="1.2"/>
<path d="M346.6 725.1 l-1.4 -1.3" stroke="#1e9e9a" stroke-width="1.2"/>
<path d="M339.0 722.7 l1.6 1.0" stroke="#1e9e9a" stroke-width="1.2"/>
<path d="M348.7 723.9 l0.1 0.5" stroke="#f6726a" stroke-width="1.2"/>
<path d="M351.4 722.2 l1.8 -0.0" stroke="#f6726a" stroke-width="1.2"/>
<path d="M343.1 724.7 l-1.1 0.9" stroke="#eaae01" stroke-width="1.2"/>
<path d="M347.5 723.6 l0.7 -0.1" stroke="#eaae01" stroke-width="1.2"/>
<path d="M341.5 723.7 l-0.6 -0.8" stroke="#f6726a" stroke-width="1.2"/>
<path d="M351.8 722.3 l1.1 0.6" stroke="#eaae01" stroke-width="1.2"/>
<path d="M341.8 725.0 l-1.8 0.2" stroke="#f6726a" stroke-width="1.2"/>
<path d="M340.5 723.5 l-1.6 -1.0" stroke="#1e9e9a" stroke-width="1.2"/>
<path d="M347.0 723.0 l1.8 -0.4" stroke="#1e9e9a" stroke-width="1.2"/>
<path d="M346.3 722.6 l-1.7 0.2" stroke="#1e9e9a" stroke-width="1.2"/>
<path d="M350.5 724.5 l0.3 -1.1" stroke="#1e9e9a" stroke-width="1.2"/>
<path d="M350.6 722.9 l1.6 0.5" stroke="#11807c" stroke-width="1.2"/>
<path d="M342.2 724.4 l1.3 -0.7" stroke="#1e9e9a" stroke-width="1.2"/>
<path d="M351.8 723.2 l-0.6 -0.5" stroke="#1e9e9a" stroke-width="1.2"/>
<path d="M353.1 723.3 l1.1 1.4" stroke="#eaae01" stroke-width="1.2"/>
<path d="M337.9 724.8 l-0.2 -0.2" stroke="#1e9e9a" stroke-width="1.2"/>
<path d="M345.3 722.7 l-1.3 0.6" stroke="#eaae01" stroke-width="1.2"/>
<path d="M357.9 723.8 l-1.5 -0.9" stroke="#f6726a" stroke-width="1.2"/>
<path d="M369.4 722.0 l1.8 -0.4" stroke="#f6726a" stroke-width="1.2"/>
<path d="M366.4 723.9 l1.2 -0.5" stroke="#eaae01" stroke-width="1.2"/>
<path d="M357.5 723.6 l-1.2 -0.6" stroke="#11807c" stroke-width="1.2"/>
<path d="M364.5 722.5 l1.4 -0.6" stroke="#eaae01" stroke-width="1.2"/>
<path d="M360.7 722.3 l1.7 0.3" stroke="#eaae01" stroke-width="1.2"/>
<path d="M355.6 724.7 l0.8 -1.4" stroke="#f6726a" stroke-width="1.2"/>
<path d="M358.4 721.9 l1.5 -0.8" stroke="#f6726a" stroke-width="1.2"/>
<path d="M359.7 723.7 l0.4 0.8" stroke="#1e9e9a" stroke-width="1.2"/>
<path d="M357.4 724.3 l0.5 -0.5" stroke="#eaae01" stroke-width="1.2"/>
<path d="M362.1 722.4 l1.3 -1.3" stroke="#1e9e9a" stroke-width="1.2"/>
<path d="M359.2 722.7 l0.4 0.6" stroke="#1e9e9a" stroke-width="1.2"/>
<path d="M357.7 722.2 l0.1 1.0" stroke="#eaae01" stroke-width="1.2"/>
<path d="M359.0 722.8 l0.3 0.2" stroke="#1e9e9a" stroke-width="1.2"/>
<path d="M364.9 722.4 l0.4 0.9" stroke="#1e9e9a" stroke-width="1.2"/>
<path d="M360.1 723.5 l1.0 1.3" stroke="#1e9e9a" stroke-width="1.2"/>
<path d="M360.4 723.2 l-1.3 -1.4" stroke="#f6726a" stroke-width="1.2"/>
<path d="M361.9 723.9 l-1.3 0.4" stroke="#f6726a" stroke-width="1.2"/>
<path d="M361.6 724.5 l-1.3 -1.2" stroke="#1e9e9a" stroke-width="1.2"/>
<path d="M362.1 722.1 l-0.5 -1.0" stroke="#1e9e9a" stroke-width="1.2"/>
<path d="M343.8 714.4 l0.1 -0.4" stroke="#eaae01" stroke-width="1.2"/>
<path d="M346.6 713.6 l0.5 -0.4" stroke="#eaae01" stroke-width="1.2"/>
<path d="M347.3 711.9 l-1.4 0.7" stroke="#eaae01" stroke-width="1.2"/>
<path d="M342.8 713.0 l-0.5 -0.8" stroke="#11807c" stroke-width="1.2"/>
<path d="M345.7 712.6 l0.5 -0.8" stroke="#1e9e9a" stroke-width="1.2"/>
<path d="M342.9 712.9 l-0.5 -0.5" stroke="#eaae01" stroke-width="1.2"/>
<path d="M344.2 714.0 l-1.0 0.2" stroke="#1e9e9a" stroke-width="1.2"/>
<path d="M344.1 714.3 l1.6 -1.0" stroke="#f6726a" stroke-width="1.2"/>
<path d="M350.3 710.6 l1.4 -0.9" stroke="#11807c" stroke-width="1.2"/>
<path d="M355.3 711.7 l-1.6 0.8" stroke="#1e9e9a" stroke-width="1.2"/>
<path d="M357.2 710.4 l1.3 -0.9" stroke="#11807c" stroke-width="1.2"/>
<path d="M358.1 711.1 l1.1 -1.0" stroke="#eaae01" stroke-width="1.2"/>
<path d="M356.0 711.1 l0.8 -1.1" stroke="#1e9e9a" stroke-width="1.2"/>
<path d="M350.8 710.9 l0.5 0.5" stroke="#f6726a" stroke-width="1.2"/>
<path d="M351.9 713.2 l-1.0 0.8" stroke="#1e9e9a" stroke-width="1.2"/>
<path d="M353.7 711.9 l0.3 0.6" stroke="#eaae01" stroke-width="1.2"/>
<path d="M354.1 713.0 l1.4 -1.1" stroke="#eaae01" stroke-width="1.2"/>
<path d="M352.1 711.7 l-1.0 0.1" stroke="#eaae01" stroke-width="1.2"/>
<path d="M366.0 714.2 l-0.5 -0.0" stroke="#1e9e9a" stroke-width="1.2"/>
<path d="M369.0 712.4 l0.8 -0.6" stroke="#eaae01" stroke-width="1.2"/>
<path d="M359.4 710.7 l-1.1 -1.3" stroke="#eaae01" stroke-width="1.2"/>
<path d="M369.2 712.3 l0.7 0.4" stroke="#f6726a" stroke-width="1.2"/>
<path d="M364.9 713.2 l0.9 -0.6" stroke="#11807c" stroke-width="1.2"/>
<path d="M363.3 712.0 l-0.4 -0.3" stroke="#eaae01" stroke-width="1.2"/>
<path d="M362.0 713.9 l-0.9 0.0" stroke="#eaae01" stroke-width="1.2"/>
<path d="M370.9 714.0 l1.2 0.5" stroke="#eaae01" stroke-width="1.2"/>
<path d="M359.3 710.4 l-1.6 0.5" stroke="#1e9e9a" stroke-width="1.2"/>
<path d="M362.4 712.4 l-0.2 0.2" stroke="#f6726a" stroke-width="1.2"/>
<path d="M364.3 712.4 l0.3 1.4" stroke="#f6726a" stroke-width="1.2"/>
<path d="M361.2 712.8 l-0.5 -1.2" stroke="#1e9e9a" stroke-width="1.2"/>
<path d="M369.4 713.8 l-0.6 0.4" stroke="#11807c" stroke-width="1.2"/>
<path d="M363.9 712.9 l-0.9 1.0" stroke="#f6726a" stroke-width="1.2"/>
<path d="M368.2 713.4 l-1.0 -1.0" stroke="#1e9e9a" stroke-width="1.2"/>
<path d="M360.2 728.8 l-1.2 -0.4" stroke="#1e9e9a" stroke-width="1.2"/>
<path d="M358.3 727.1 l0.5 0.9" stroke="#eaae01" stroke-width="1.2"/>
<path d="M361.7 726.4 l-0.5 1.0" stroke="#1e9e9a" stroke-width="1.2"/>
<path d="M359.1 725.0 l-1.4 -0.4" stroke="#1e9e9a" stroke-width="1.2"/>
<path d="M360.0 727.4 l-0.8 -0.6" stroke="#eaae01" stroke-width="1.2"/>
<path d="M357.8 724.9 l1.1 0.7" stroke="#1e9e9a" stroke-width="1.2"/>
<path d="M360.0 721.0 l0.6 0.3" stroke="#1e9e9a" stroke-width="1.2"/>
<path d="M361.0 723.9 l-1.1 0.2" stroke="#1e9e9a" stroke-width="1.2"/>
<path d="M357.7 721.7 l1.5 -0.7" stroke="#f6726a" stroke-width="1.2"/>
<path d="M359.1 722.8 l1.3 -0.8" stroke="#1e9e9a" stroke-width="1.2"/>
<path d="M360.8 724.6 l1.5 0.6" stroke="#f6726a" stroke-width="1.2"/>
<path d="M357.4 724.8 l-0.2 0.3" stroke="#1e9e9a" stroke-width="1.2"/>
<path d="M358.2 724.1 l1.5 -0.9" stroke="#eaae01" stroke-width="1.2"/>
<path d="M361.1 728.5 l-1.1 1.0" stroke="#1e9e9a" stroke-width="1.2"/>
<path d="M358.9 720.5 l-0.0 1.1" stroke="#1e9e9a" stroke-width="1.2"/>
<path d="M357.8 727.6 l1.6 0.6" stroke="#1e9e9a" stroke-width="1.2"/>
<path d="M361.7 722.8 l-0.2 -0.0" stroke="#eaae01" stroke-width="1.2"/>
<path d="M361.0 725.7 l-1.1 0.1" stroke="#1e9e9a" stroke-width="1.2"/>
<path d="M359.2 727.9 l1.0 -1.1" stroke="#1e9e9a" stroke-width="1.2"/>
<path d="M357.4 723.6 l-0.0 1.0" stroke="#eaae01" stroke-width="1.2"/>
<path d="M359.7 732.8 l0.8 -0.0" stroke="#eaae01" stroke-width="1.2"/>
<path d="M361.0 729.5 l-1.3 -0.3" stroke="#1e9e9a" stroke-width="1.2"/>
<path d="M360.7 729.0 l0.1 -1.4" stroke="#eaae01" stroke-width="1.2"/>
<path d="M358.1 737.3 l-0.4 0.5" stroke="#f6726a" stroke-width="1.2"/>
<path d="M359.4 733.8 l-1.6 -0.5" stroke="#1e9e9a" stroke-width="1.2"/>
<path d="M360.5 738.8 l-0.7 -1.0" stroke="#f6726a" stroke-width="1.2"/>
<path d="M360.6 733.2 l-0.0 0.2" stroke="#1e9e9a" stroke-width="1.2"/>
<path d="M361.1 731.4 l0.2 -1.3" stroke="#1e9e9a" stroke-width="1.2"/>
<path d="M360.0 731.8 l1.2 -1.3" stroke="#1e9e9a" stroke-width="1.2"/>
<path d="M359.7 730.0 l1.1 0.3" stroke="#eaae01" stroke-width="1.2"/>
<path d="M361.6 733.3 l-1.6 -0.2" stroke="#eaae01" stroke-width="1.2"/>
<path d="M357.5 736.8 l1.1 -0.0" stroke="#eaae01" stroke-width="1.2"/>
<path d="M361.1 730.5 l-0.0 0.5" stroke="#eaae01" stroke-width="1.2"/>
<path d="M358.5 734.3 l-1.2 0.8" stroke="#11807c" stroke-width="1.2"/>
<path d="M359.4 735.7 l1.0 1.3" stroke="#eaae01" stroke-width="1.2"/>
<path d="M360.4 732.1 l0.7 -1.0" stroke="#1e9e9a" stroke-width="1.2"/>
<path d="M361.0 727.9 l-0.2 0.7" stroke="#11807c" stroke-width="1.2"/>
<path d="M360.5 738.3 l-1.2 1.2" stroke="#1e9e9a" stroke-width="1.2"/>
<path d="M361.3 730.8 l0.6 -0.8" stroke="#11807c" stroke-width="1.2"/>
<path d="M358.3 736.7 l-1.0 0.1" stroke="#f6726a" stroke-width="1.2"/>
<path d="M359.4 740.0 l-0.6 -0.3" stroke="#1e9e9a" stroke-width="1.2"/>
<path d="M358.6 739.4 l1.8 1.2" stroke="#eaae01" stroke-width="1.2"/>
<path d="M361.1 740.8 l1.0 1.1" stroke="#11807c" stroke-width="1.2"/>
<path d="M362.9 742.7 l0.4 0.1" stroke="#f6726a" stroke-width="1.2"/>
<path d="M358.0 738.0 l1.2 -0.8" stroke="#11807c" stroke-width="1.2"/>
<path d="M362.3 744.2 l-0.6 1.2" stroke="#eaae01" stroke-width="1.2"/>
<path d="M360.8 741.5 l-0.1 -0.5" stroke="#1e9e9a" stroke-width="1.2"/>
<path d="M359.4 742.0 l-1.6 0.2" stroke="#11807c" stroke-width="1.2"/>
<path d="M359.8 740.3 l-0.4 -1.3" stroke="#1e9e9a" stroke-width="1.2"/>
<path d="M359.6 738.3 l-1.3 0.2" stroke="#1e9e9a" stroke-width="1.2"/>
<path d="M360.5 741.2 l-0.5 0.5" stroke="#eaae01" stroke-width="1.2"/>
<path d="M357.4 739.6 l-0.1 -1.0" stroke="#11807c" stroke-width="1.2"/>
<path d="M361.2 737.3 l-0.8 0.1" stroke="#1e9e9a" stroke-width="1.2"/>
<path d="M359.8 740.6 l0.0 -0.4" stroke="#eaae01" stroke-width="1.2"/>
<path d="M359.7 738.3 l1.5 0.6" stroke="#eaae01" stroke-width="1.2"/>
<path d="M360.9 739.8 l1.6 -0.0" stroke="#eaae01" stroke-width="1.2"/>
<path d="M363.9 743.8 l-1.5 -0.9" stroke="#eaae01" stroke-width="1.2"/>
<path d="M376.5 748.7 l0.1 -0.6" stroke="#1e9e9a" stroke-width="1.2"/>
<path d="M373.1 749.6 l-0.9 0.8" stroke="#eaae01" stroke-width="1.2"/>
<path d="M372.0 748.5 l0.4 1.4" stroke="#eaae01" stroke-width="1.2"/>
<path d="M365.7 745.3 l-0.7 -1.2" stroke="#11807c" stroke-width="1.2"/>
<path d="M373.8 747.1 l1.6 -0.2" stroke="#f6726a" stroke-width="1.2"/>
<path d="M367.6 745.4 l0.0 -0.9" stroke="#1e9e9a" stroke-width="1.2"/>
<path d="M375.0 747.5 l0.7 0.6" stroke="#eaae01" stroke-width="1.2"/>
<path d="M363.3 746.3 l-0.0 0.8" stroke="#eaae01" stroke-width="1.2"/>
<path d="M376.2 750.0 l1.3 -1.3" stroke="#eaae01" stroke-width="1.2"/>
<path d="M368.5 747.0 l0.3 0.8" stroke="#f6726a" stroke-width="1.2"/>
<path d="M371.6 747.0 l1.2 1.2" stroke="#f6726a" stroke-width="1.2"/>
<path d="M376.1 750.8 l0.6 -0.9" stroke="#11807c" stroke-width="1.2"/>
<path d="M369.8 748.3 l-0.7 1.3" stroke="#1e9e9a" stroke-width="1.2"/>
<path d="M372.8 745.5 l1.0 -0.7" stroke="#11807c" stroke-width="1.2"/>
<path d="M373.1 747.7 l0.2 1.1" stroke="#1e9e9a" stroke-width="1.2"/>
<path d="M373.2 749.2 l-0.4 0.8" stroke="#eaae01" stroke-width="1.2"/>
<path d="M374.6 750.7 l-0.4 1.3" stroke="#11807c" stroke-width="1.2"/>
<path d="M368.1 746.8 l0.3 0.9" stroke="#1e9e9a" stroke-width="1.2"/>
<path d="M371.6 748.7 l1.6 1.1" stroke="#eaae01" stroke-width="1.2"/>
<path d="M369.8 746.0 l-0.6 -0.8" stroke="#eaae01" stroke-width="1.2"/>
<path d="M370.3 746.7 l-0.6 1.4" stroke="#f6726a" stroke-width="1.2"/>
<path d="M368.6 744.9 l1.1 -1.1" stroke="#1e9e9a" stroke-width="1.2"/>
<path d="M370.5 749.5 l-0.4 -0.5" stroke="#eaae01" stroke-width="1.2"/>
<path d="M365.0 744.4 l0.4 1.1" stroke="#11807c" stroke-width="1.2"/>
<path d="M369.2 748.5 l1.0 0.3" stroke="#1e9e9a" stroke-width="1.2"/>
<path d="M376.6 748.6 l-1.8 -0.9" stroke="#eaae01" stroke-width="1.2"/>
<path d="M375.3 751.0 l0.9 0.5" stroke="#f6726a" stroke-width="1.2"/>
<path d="M377.0 750.9 l-0.4 1.2" stroke="#1e9e9a" stroke-width="1.2"/>
<path d="M387.1 746.0 l-0.6 -0.7" stroke="#1e9e9a" stroke-width="1.2"/>
<path d="M378.7 750.2 l-0.4 0.1" stroke="#1e9e9a" stroke-width="1.2"/>
<path d="M385.7 748.4 l0.7 -1.3" stroke="#f6726a" stroke-width="1.2"/>
<path d="M387.9 746.2 l-0.2 0.7" stroke="#1e9e9a" stroke-width="1.2"/>
<path d="M387.3 749.0 l1.6 -0.0" stroke="#eaae01" stroke-width="1.2"/>
<path d="M378.2 748.9 l0.3 0.2" stroke="#eaae01" stroke-width="1.2"/>
<path d="M376.2 750.9 l1.7 0.4" stroke="#1e9e9a" stroke-width="1.2"/>
<path d="M380.1 747.3 l1.7 0.4" stroke="#1e9e9a" stroke-width="1.2"/>
<path d="M386.1 747.5 l-0.5 1.1" stroke="#1e9e9a" stroke-width="1.2"/>
<path d="M381.3 749.1 l1.1 -0.4" stroke="#eaae01" stroke-width="1.2"/>
<path d="M377.8 751.2 l-0.7 0.1" stroke="#eaae01" stroke-width="1.2"/>
<path d="M385.7 748.7 l1.0 -0.4" stroke="#1e9e9a" stroke-width="1.2"/>
<path d="M383.1 750.0 l-1.1 -0.5" stroke="#1e9e9a" stroke-width="1.2"/>
<path d="M379.4 747.9 l-0.6 0.8" stroke="#1e9e9a" stroke-width="1.2"/>
<path d="M379.8 750.7 l-0.2 0.9" stroke="#1e9e9a" stroke-width="1.2"/>
<path d="M384.7 747.6 l-0.8 0.1" stroke="#eaae01" stroke-width="1.2"/>
<path d="M385.2 748.0 l-0.8 -0.4" stroke="#eaae01" stroke-width="1.2"/>
<path d="M386.8 746.9 l-1.4 -0.1" stroke="#1e9e9a" stroke-width="1.2"/>
<path d="M376.4 750.8 l-0.5 1.2" stroke="#f6726a" stroke-width="1.2"/>
<path d="M378.1 747.4 l-1.5 0.3" stroke="#1e9e9a" stroke-width="1.2"/>
<path d="M387.1 748.9 l-1.2 -0.9" stroke="#f6726a" stroke-width="1.2"/>
<path d="M385.5 746.6 l-0.4 1.2" stroke="#1e9e9a" stroke-width="1.2"/>
<path d="M383.9 747.7 l-0.6 1.0" stroke="#11807c" stroke-width="1.2"/>
<path d="M382.7 749.3 l0.6 1.1" stroke="#1e9e9a" stroke-width="1.2"/>
<path d="M377.0 747.7 l-1.6 -1.4" stroke="#1e9e9a" stroke-width="1.2"/>
<path d="M396.2 746.0 l0.3 -0.6" stroke="#eaae01" stroke-width="1.2"/>
<path d="M403.3 747.2 l-1.0 1.0" stroke="#eaae01" stroke-width="1.2"/>
<path d="M390.0 746.1 l0.9 0.9" stroke="#eaae01" stroke-width="1.2"/>
<path d="M400.3 744.5 l1.4 -0.3" stroke="#1e9e9a" stroke-width="1.2"/>
<path d="M403.9 746.8 l1.2 -0.6" stroke="#1e9e9a" stroke-width="1.2"/>
<path d="M390.0 745.4 l0.2 1.1" stroke="#1e9e9a" stroke-width="1.2"/>
<path d="M386.8 747.5 l1.2 -0.5" stroke="#eaae01" stroke-width="1.2"/>
<path d="M388.2 746.0 l0.0 1.3" stroke="#f6726a" stroke-width="1.2"/>
<path d="M398.1 744.2 l1.2 -1.1" stroke="#1e9e9a" stroke-width="1.2"/>
<path d="M392.0 746.4 l0.1 -0.8" stroke="#f6726a" stroke-width="1.2"/>
<path d="M398.5 745.4 l0.3 0.6" stroke="#11807c" stroke-width="1.2"/>
<path d="M390.0 748.5 l-0.3 -1.2" stroke="#f6726a" stroke-width="1.2"/>
<path d="M399.3 746.6 l-0.4 1.3" stroke="#1e9e9a" stroke-width="1.2"/>
<path d="M395.3 748.4 l1.1 1.3" stroke="#eaae01" stroke-width="1.2"/>
<path d="M395.4 745.0 l0.3 -0.2" stroke="#1e9e9a" stroke-width="1.2"/>
<path d="M405.8 745.9 l-0.6 -0.9" stroke="#eaae01" stroke-width="1.2"/>
<path d="M393.5 745.4 l1.4 -1.4" stroke="#1e9e9a" stroke-width="1.2"/>
<path d="M402.2 746.9 l-0.8 0.2" stroke="#11807c" stroke-width="1.2"/>
<path d="M401.7 747.1 l1.5 0.6" stroke="#eaae01" stroke-width="1.2"/>
<path d="M398.0 744.7 l1.2 0.4" stroke="#eaae01" stroke-width="1.2"/>
<path d="M400.5 746.2 l-1.2 0.4" stroke="#1e9e9a" stroke-width="1.2"/>
<path d="M403.7 743.4 l0.7 -0.2" stroke="#eaae01" stroke-width="1.2"/>
<path d="M389.0 748.8 l-1.4 -1.0" stroke="#f6726a" stroke-width="1.2"/>
<path d="M400.8 748.0 l1.1 -0.1" stroke="#f6726a" stroke-width="1.2"/>
<path d="M400.0 744.0 l-0.9 -0.3" stroke="#1e9e9a" stroke-width="1.2"/>
<path d="M394.3 748.7 l0.8 1.2" stroke="#eaae01" stroke-width="1.2"/>
<path d="M404.1 746.4 l-1.2 1.1" stroke="#1e9e9a" stroke-width="1.2"/>
<path d="M393.5 744.9 l0.3 -0.3" stroke="#1e9e9a" stroke-width="1.2"/>
<path d="M389.2 748.9 l1.0 -0.8" stroke="#1e9e9a" stroke-width="1.2"/>
<path d="M399.2 747.9 l0.4 1.1" stroke="#f6726a" stroke-width="1.2"/>
<path d="M396.5 745.2 l-1.1 -0.4" stroke="#eaae01" stroke-width="1.2"/>
<path d="M400.9 747.3 l-0.2 0.2" stroke="#eaae01" stroke-width="1.2"/>
<path d="M404.1 747.3 l-1.6 0.6" stroke="#11807c" stroke-width="1.2"/>
<path d="M388.4 747.1 l1.3 1.4" stroke="#1e9e9a" stroke-width="1.2"/>
<path d="M399.7 747.7 l-1.3 1.1" stroke="#1e9e9a" stroke-width="1.2"/>
<path d="M395.9 745.1 l-1.8 0.2" stroke="#eaae01" stroke-width="1.2"/>
<path d="M399.1 747.0 l-1.7 -1.1" stroke="#1e9e9a" stroke-width="1.2"/>
<path d="M405.6 743.4 l-0.4 1.2" stroke="#eaae01" stroke-width="1.2"/>
<path d="M365.2 737.0 l0.5 1.2" stroke="#1e9e9a" stroke-width="1.2"/>
<path d="M357.0 735.4 l1.6 0.7" stroke="#11807c" stroke-width="1.2"/>
<path d="M362.5 737.2 l-1.2 0.0" stroke="#1e9e9a" stroke-width="1.2"/>
<path d="M357.4 737.6 l-1.5 -1.3" stroke="#eaae01" stroke-width="1.2"/>
<path d="M360.3 737.9 l0.3 0.8" stroke="#1e9e9a" stroke-width="1.2"/>
<path d="M355.0 736.5 l-0.2 0.5" stroke="#f6726a" stroke-width="1.2"/>
<path d="M359.8 736.6 l1.1 -0.1" stroke="#1e9e9a" stroke-width="1.2"/>
<path d="M357.2 735.6 l1.7 0.3" stroke="#1e9e9a" stroke-width="1.2"/>
<path d="M356.5 736.9 l0.8 1.0" stroke="#eaae01" stroke-width="1.2"/>
<path d="M362.2 737.7 l-0.7 -0.6" stroke="#f6726a" stroke-width="1.2"/>
<path d="M360.3 736.8 l-1.8 -1.2" stroke="#eaae01" stroke-width="1.2"/>
<path d="M366.1 739.3 l-0.4 1.4" stroke="#1e9e9a" stroke-width="1.2"/>
<path d="M371.3 741.8 l0.8 0.8" stroke="#11807c" stroke-width="1.2"/>
<path d="M372.0 743.3 l0.6 -1.0" stroke="#eaae01" stroke-width="1.2"/>
<path d="M371.9 741.3 l1.6 -0.2" stroke="#1e9e9a" stroke-width="1.2"/>
<path d="M368.8 741.1 l-1.7 -0.3" stroke="#f6726a" stroke-width="1.2"/>
<path d="M364.8 740.6 l1.6 0.7" stroke="#1e9e9a" stroke-width="1.2"/>
<path d="M372.0 743.1 l1.1 -1.4" stroke="#f6726a" stroke-width="1.2"/>
<path d="M367.9 741.1 l1.5 -0.5" stroke="#f6726a" stroke-width="1.2"/>
<path d="M370.8 743.2 l-1.5 -0.9" stroke="#11807c" stroke-width="1.2"/>
<path d="M373.0 742.8 l-0.5 0.1" stroke="#f6726a" stroke-width="1.2"/>
<path d="M380.5 743.2 l0.6 -0.7" stroke="#1e9e9a" stroke-width="1.2"/>
<path d="M382.3 743.1 l1.7 -1.1" stroke="#11807c" stroke-width="1.2"/>
<path d="M373.1 744.3 l0.8 -0.2" stroke="#eaae01" stroke-width="1.2"/>
<path d="M374.1 743.4 l0.7 0.5" stroke="#1e9e9a" stroke-width="1.2"/>
<path d="M380.0 742.3 l1.7 -1.1" stroke="#f6726a" stroke-width="1.2"/>
<path d="M380.9 743.4 l0.5 0.3" stroke="#1e9e9a" stroke-width="1.2"/>
<path d="M378.6 743.6 l-1.5 0.6" stroke="#f6726a" stroke-width="1.2"/>
<path d="M375.8 741.8 l-1.4 -0.0" stroke="#1e9e9a" stroke-width="1.2"/>
<path d="M382.1 742.4 l-0.2 1.1" stroke="#11807c" stroke-width="1.2"/>
<path d="M373.9 743.6 l-0.2 0.6" stroke="#eaae01" stroke-width="1.2"/>
<path d="M373.9 742.6 l-1.1 -0.3" stroke="#11807c" stroke-width="1.2"/>
<path d="M389.6 741.3 l0.6 -0.6" stroke="#f6726a" stroke-width="1.2"/>
<path d="M381.0 744.3 l1.0 0.5" stroke="#eaae01" stroke-width="1.2"/>
<path d="M384.7 741.3 l-1.5 1.4" stroke="#1e9e9a" stroke-width="1.2"/>
<path d="M386.7 742.8 l-1.6 -0.6" stroke="#eaae01" stroke-width="1.2"/>
<path d="M386.2 744.1 l-0.5 0.6" stroke="#f6726a" stroke-width="1.2"/>
<path d="M384.3 742.2 l-1.2 0.5" stroke="#f6726a" stroke-width="1.2"/>
<path d="M393.0 741.1 l-0.4 0.7" stroke="#11807c" stroke-width="1.2"/>
<path d="M383.5 742.0 l1.3 -0.7" stroke="#1e9e9a" stroke-width="1.2"/>
<path d="M391.3 740.6 l0.6 0.9" stroke="#eaae01" stroke-width="1.2"/>
<path d="M383.1 742.6 l-1.4 0.2" stroke="#eaae01" stroke-width="1.2"/>
<path d="M387.2 742.5 l1.5 -0.2" stroke="#eaae01" stroke-width="1.2"/>
<path d="M381.6 742.3 l-0.1 1.2" stroke="#1e9e9a" stroke-width="1.2"/>
<path d="M386.9 741.6 l-1.0 0.3" stroke="#1e9e9a" stroke-width="1.2"/>
<path d="M406.0 743.8 l1.6 0.1" stroke="#eaae01" stroke-width="1.2"/>
<path d="M395.0 743.6 l-1.4 -0.1" stroke="#eaae01" stroke-width="1.2"/>
<path d="M400.0 743.8 l-1.5 -0.1" stroke="#eaae01" stroke-width="1.2"/>
<path d="M396.0 743.1 l-1.6 0.6" stroke="#f6726a" stroke-width="1.2"/>
<path d="M398.0 743.0 l0.6 0.0" stroke="#1e9e9a" stroke-width="1.2"/>
<path d="M393.5 742.7 l0.5 0.8" stroke="#1e9e9a" stroke-width="1.2"/>
<path d="M399.8 743.0 l1.1 1.2" stroke="#1e9e9a" stroke-width="1.2"/>
<path d="M402.8 743.2 l-1.1 -0.8" stroke="#1e9e9a" stroke-width="1.2"/>
<path d="M401.3 742.0 l1.3 -0.6" stroke="#eaae01" stroke-width="1.2"/>
<path d="M405.4 743.6 l0.3 1.2" stroke="#f6726a" stroke-width="1.2"/>
<path d="M398.4 741.4 l-1.0 -0.1" stroke="#1e9e9a" stroke-width="1.2"/>
<path d="M400.5 743.1 l0.4 -0.8" stroke="#eaae01" stroke-width="1.2"/>
<path d="M401.9 745.3 l-0.8 1.3" stroke="#1e9e9a" stroke-width="1.2"/>
<path d="M334.5 730.5 l0.6 -1.3" stroke="#1e9e9a" stroke-width="1.2"/>
<path d="M334.5 728.5 l-1.2 0.9" stroke="#eaae01" stroke-width="1.2"/>
<path d="M335.7 730.0 l-1.3 -0.7" stroke="#1e9e9a" stroke-width="1.2"/>
<path d="M336.6 723.8 l1.8 -1.0" stroke="#eaae01" stroke-width="1.2"/>
<path d="M336.2 726.0 l-1.2 0.2" stroke="#1e9e9a" stroke-width="1.2"/>
<path d="M335.3 729.5 l-1.0 -1.0" stroke="#1e9e9a" stroke-width="1.2"/>
<path d="M337.3 731.9 l-1.6 1.2" stroke="#eaae01" stroke-width="1.2"/>
<path d="M333.7 724.1 l0.9 -0.9" stroke="#f6726a" stroke-width="1.2"/>
<path d="M333.9 724.7 l1.1 0.4" stroke="#f6726a" stroke-width="1.2"/>
<path d="M334.5 728.2 l0.1 0.5" stroke="#1e9e9a" stroke-width="1.2"/>
<path d="M335.5 727.6 l-1.5 1.1" stroke="#1e9e9a" stroke-width="1.2"/>
<path d="M334.8 730.1 l0.5 -0.2" stroke="#f6726a" stroke-width="1.2"/>
<path d="M346.4 739.3 l0.9 0.3" stroke="#1e9e9a" stroke-width="1.2"/>
<path d="M342.1 737.0 l-0.2 -0.4" stroke="#eaae01" stroke-width="1.2"/>
<path d="M346.3 738.6 l1.7 0.8" stroke="#1e9e9a" stroke-width="1.2"/>
<path d="M338.7 736.4 l0.2 -0.3" stroke="#eaae01" stroke-width="1.2"/>
<path d="M338.5 734.2 l-0.5 0.5" stroke="#1e9e9a" stroke-width="1.2"/>
<path d="M343.8 736.6 l1.4 -1.1" stroke="#eaae01" stroke-width="1.2"/>
<path d="M343.2 736.6 l-1.5 0.2" stroke="#1e9e9a" stroke-width="1.2"/>
<path d="M347.2 737.8 l0.9 -0.5" stroke="#1e9e9a" stroke-width="1.2"/>
<path d="M346.0 738.2 l-1.2 -0.4" stroke="#11807c" stroke-width="1.2"/>
<path d="M348.0 739.3 l-1.1 -0.7" stroke="#1e9e9a" stroke-width="1.2"/>
<path d="M343.8 736.2 l-0.7 -0.7" stroke="#11807c" stroke-width="1.2"/>
<path d="M345.9 738.7 l0.3 -0.8" stroke="#11807c" stroke-width="1.2"/>
<path d="M336.5 734.7 l-1.7 0.8" stroke="#f6726a" stroke-width="1.2"/>
<path d="M344.5 737.0 l-1.0 -0.7" stroke="#eaae01" stroke-width="1.2"/>
<path d="M354.8 738.7 l-1.5 -1.2" stroke="#eaae01" stroke-width="1.2"/>
<path d="M349.1 737.7 l-0.6 -0.2" stroke="#f6726a" stroke-width="1.2"/>
<path d="M350.7 738.3 l-0.8 -0.7" stroke="#eaae01" stroke-width="1.2"/>
<path d="M346.8 740.1 l1.1 0.6" stroke="#eaae01" stroke-width="1.2"/>
<path d="M350.3 738.3 l1.1 0.7" stroke="#1e9e9a" stroke-width="1.2"/>
<path d="M354.1 739.8 l-1.0 0.8" stroke="#eaae01" stroke-width="1.2"/>
<path d="M352.8 740.6 l1.1 -0.1" stroke="#eaae01" stroke-width="1.2"/>
<path d="M352.3 739.9 l0.6 0.2" stroke="#11807c" stroke-width="1.2"/>
<path d="M347.8 739.1 l1.2 -0.1" stroke="#eaae01" stroke-width="1.2"/>
<path d="M360.8 739.1 l0.8 -1.3" stroke="#f6726a" stroke-width="1.2"/>
<path d="M359.7 738.5 l0.8 -0.1" stroke="#1e9e9a" stroke-width="1.2"/>
<path d="M356.0 741.8 l1.4 -1.0" stroke="#1e9e9a" stroke-width="1.2"/>
<path d="M355.9 740.2 l0.8 1.3" stroke="#1e9e9a" stroke-width="1.2"/>
<path d="M360.5 738.4 l-0.7 0.8" stroke="#1e9e9a" stroke-width="1.2"/>
<path d="M357.1 739.5 l-1.3 1.2" stroke="#eaae01" stroke-width="1.2"/>
<path d="M361.5 737.9 l1.0 0.6" stroke="#eaae01" stroke-width="1.2"/>
<path d="M362.1 738.7 l1.0 -1.1" stroke="#f6726a" stroke-width="1.2"/>
<path d="M342.0 740.9 l1.1 0.0" stroke="#f6726a" stroke-width="1.2"/>
<path d="M346.0 743.1 l1.0 -0.4" stroke="#1e9e9a" stroke-width="1.2"/>
<path d="M346.3 743.1 l-1.6 0.8" stroke="#1e9e9a" stroke-width="1.2"/>
<path d="M343.8 739.9 l1.7 1.1" stroke="#11807c" stroke-width="1.2"/>
<path d="M342.7 741.4 l0.6 1.0" stroke="#f6726a" stroke-width="1.2"/>
<path d="M346.0 742.3 l-0.4 -1.1" stroke="#eaae01" stroke-width="1.2"/>
<path d="M347.2 742.3 l0.6 0.1" stroke="#11807c" stroke-width="1.2"/>
<path d="M346.2 743.3 l1.2 -0.9" stroke="#1e9e9a" stroke-width="1.2"/>
<path d="M366.7 705.9 l-0.5 1.1" stroke="#f6726a" stroke-width="1.2"/>
<path d="M368.0 704.3 l1.6 0.6" stroke="#1e9e9a" stroke-width="1.2"/>
<path d="M366.6 704.7 l-0.8 -0.1" stroke="#11807c" stroke-width="1.2"/>
<path d="M370.3 703.8 l1.5 -0.0" stroke="#eaae01" stroke-width="1.2"/>
<path d="M370.7 705.5 l-0.9 -0.1" stroke="#eaae01" stroke-width="1.2"/>
<path d="M370.5 705.3 l-0.7 0.6" stroke="#f6726a" stroke-width="1.2"/>
<path d="M371.1 705.1 l1.2 1.0" stroke="#eaae01" stroke-width="1.2"/>
<path d="M367.2 706.0 l-1.7 -1.3" stroke="#1e9e9a" stroke-width="1.2"/>
<path d="M375.3 700.3 l1.6 -0.6" stroke="#f6726a" stroke-width="1.2"/>
<path d="M374.1 701.5 l-1.8 0.5" stroke="#eaae01" stroke-width="1.2"/>
<path d="M375.9 701.9 l1.1 0.4" stroke="#eaae01" stroke-width="1.2"/>
<path d="M373.0 703.1 l1.1 -0.7" stroke="#eaae01" stroke-width="1.2"/>
<path d="M374.2 703.0 l-0.9 0.6" stroke="#eaae01" stroke-width="1.2"/>
<path d="M373.3 703.1 l1.3 1.1" stroke="#eaae01" stroke-width="1.2"/>
<path d="M296.4 698.0 l0.2 1.2" stroke="#1e9e9a" stroke-width="1.2"/>
<path d="M301.3 697.9 l-0.1 -0.1" stroke="#f6726a" stroke-width="1.2"/>
<path d="M301.0 697.2 l-0.9 -1.1" stroke="#f6726a" stroke-width="1.2"/>
<path d="M295.2 697.9 l-0.5 0.3" stroke="#eaae01" stroke-width="1.2"/>
<path d="M296.6 697.9 l-0.4 0.8" stroke="#1e9e9a" stroke-width="1.2"/>
<path d="M301.0 696.7 l-0.1 1.1" stroke="#1e9e9a" stroke-width="1.2"/>
<path d="M299.3 697.7 l1.5 0.3" stroke="#1e9e9a" stroke-width="1.2"/>
<path d="M303.1 695.0 l-0.3 1.1" stroke="#1e9e9a" stroke-width="1.2"/>
<path d="M298.4 696.2 l1.5 0.4" stroke="#f6726a" stroke-width="1.2"/>
<path d="M311.3 693.0 l0.3 -0.2" stroke="#1e9e9a" stroke-width="1.2"/>
<path d="M309.1 692.2 l-0.8 0.0" stroke="#1e9e9a" stroke-width="1.2"/>
<path d="M308.4 694.2 l1.1 -0.8" stroke="#1e9e9a" stroke-width="1.2"/>
<path d="M312.5 692.5 l0.5 -1.2" stroke="#1e9e9a" stroke-width="1.2"/>
<path d="M305.7 696.1 l0.8 -0.9" stroke="#1e9e9a" stroke-width="1.2"/>
<path d="M307.6 694.6 l0.4 -0.3" stroke="#eaae01" stroke-width="1.2"/>
<path d="M311.7 691.9 l1.5 0.1" stroke="#eaae01" stroke-width="1.2"/>
<path d="M310.9 692.8 l-1.1 -1.3" stroke="#eaae01" stroke-width="1.2"/>
<path d="M308.3 695.4 l0.0 1.2" stroke="#eaae01" stroke-width="1.2"/>
<path d="M306.6 694.4 l-1.7 -1.0" stroke="#11807c" stroke-width="1.2"/>
<path d="M309.3 692.7 l0.0 -0.1" stroke="#eaae01" stroke-width="1.2"/>
<path d="M301.4 695.4 l-1.2 0.8" stroke="#1e9e9a" stroke-width="1.2"/>
<path d="M306.7 695.1 l0.4 1.1" stroke="#eaae01" stroke-width="1.2"/>
<path d="M324.6 697.4 l-0.1 0.3" stroke="#1e9e9a" stroke-width="1.2"/>
<path d="M325.6 696.5 l-1.6 1.2" stroke="#1e9e9a" stroke-width="1.2"/>
<path d="M326.7 696.0 l0.2 -0.2" stroke="#11807c" stroke-width="1.2"/>
<path d="M325.1 696.1 l-0.6 0.7" stroke="#1e9e9a" stroke-width="1.2"/>
<path d="M324.1 695.8 l-0.5 -0.2" stroke="#1e9e9a" stroke-width="1.2"/>
<path d="M326.4 696.8 l-1.1 -0.5" stroke="#eaae01" stroke-width="1.2"/>
<path d="M327.9 697.3 l1.0 0.3" stroke="#1e9e9a" stroke-width="1.2"/>
<path d="M327.7 697.4 l0.3 -1.0" stroke="#1e9e9a" stroke-width="1.2"/>
<path d="M322.6 697.2 l-0.3 -0.4" stroke="#eaae01" stroke-width="1.2"/>
<path d="M327.2 697.8 l0.5 -0.1" stroke="#1e9e9a" stroke-width="1.2"/>
<path d="M333.9 696.8 l0.8 -0.4" stroke="#11807c" stroke-width="1.2"/>
<path d="M332.0 697.4 l0.4 -1.0" stroke="#1e9e9a" stroke-width="1.2"/>
<path d="M331.8 696.3 l-1.3 -0.4" stroke="#1e9e9a" stroke-width="1.2"/>
<path d="M334.9 698.5 l-1.0 0.8" stroke="#1e9e9a" stroke-width="1.2"/>
<path d="M323.8 697.1 l-1.4 1.1" stroke="#f6726a" stroke-width="1.2"/>
<path d="M331.8 697.6 l-0.2 -0.6" stroke="#1e9e9a" stroke-width="1.2"/>
<path d="M327.7 697.6 l1.5 0.4" stroke="#11807c" stroke-width="1.2"/>
<path d="M327.9 697.0 l0.2 1.0" stroke="#1e9e9a" stroke-width="1.2"/>
<path d="M337.4 697.2 l1.5 0.1" stroke="#11807c" stroke-width="1.2"/>
<path d="M340.4 698.6 l1.6 -0.3" stroke="#eaae01" stroke-width="1.2"/>
<path d="M336.6 699.0 l-1.3 -0.8" stroke="#eaae01" stroke-width="1.2"/>
<path d="M336.5 699.0 l1.5 -1.1" stroke="#1e9e9a" stroke-width="1.2"/>
<path d="M338.8 699.5 l1.5 -0.2" stroke="#11807c" stroke-width="1.2"/>
<path d="M340.2 699.0 l-0.3 0.4" stroke="#1e9e9a" stroke-width="1.2"/>
<path d="M347.4 695.0 l-1.7 -1.2" stroke="#f6726a" stroke-width="1.2"/>
<path d="M336.9 698.7 l-1.2 -0.1" stroke="#1e9e9a" stroke-width="1.2"/>
<path d="M337.1 697.7 l-0.5 1.3" stroke="#eaae01" stroke-width="1.2"/>
<path d="M343.3 696.3 l-0.1 -1.3" stroke="#eaae01" stroke-width="1.2"/>
<path d="M348.9 695.2 l1.1 0.4" stroke="#eaae01" stroke-width="1.2"/>
<path d="M347.3 696.7 l1.0 0.1" stroke="#eaae01" stroke-width="1.2"/>
<path d="M349.9 695.3 l0.4 -0.5" stroke="#eaae01" stroke-width="1.2"/>
<path d="M344.3 698.3 l0.2 -1.0" stroke="#11807c" stroke-width="1.2"/>
<path d="M338.8 698.5 l0.0 1.2" stroke="#eaae01" stroke-width="1.2"/>
<path d="M349.5 697.2 l-0.3 0.5" stroke="#f6726a" stroke-width="1.2"/>
<path d="M346.6 696.3 l1.6 1.2" stroke="#1e9e9a" stroke-width="1.2"/>
<path d="M346.2 696.1 l1.8 -0.8" stroke="#f6726a" stroke-width="1.2"/>
<path d="M347.9 694.8 l0.7 -0.5" stroke="#1e9e9a" stroke-width="1.2"/>
<path d="M348.5 696.3 l0.3 0.1" stroke="#eaae01" stroke-width="1.2"/>
<path d="M376.1 691.1 l1.5 0.7" stroke="#1e9e9a" stroke-width="1.2"/>
<path d="M357.5 694.5 l0.3 -0.2" stroke="#f6726a" stroke-width="1.2"/>
<path d="M373.4 690.6 l-0.4 1.1" stroke="#eaae01" stroke-width="1.2"/>
<path d="M367.0 692.8 l-0.9 0.6" stroke="#11807c" stroke-width="1.2"/>
<path d="M366.9 691.4 l-0.7 -1.2" stroke="#1e9e9a" stroke-width="1.2"/>
<path d="M360.1 692.8 l1.6 1.4" stroke="#1e9e9a" stroke-width="1.2"/>
<path d="M363.3 693.6 l-0.8 0.4" stroke="#11807c" stroke-width="1.2"/>
<path d="M361.1 693.9 l-1.6 0.9" stroke="#eaae01" stroke-width="1.2"/>
<path d="M371.2 690.8 l0.1 0.7" stroke="#11807c" stroke-width="1.2"/>
<path d="M356.7 694.0 l-0.9 0.0" stroke="#eaae01" stroke-width="1.2"/>
<path d="M362.1 691.3 l1.4 -1.3" stroke="#11807c" stroke-width="1.2"/>
<path d="M363.8 693.1 l-0.8 1.0" stroke="#1e9e9a" stroke-width="1.2"/>
<path d="M368.6 692.1 l-1.4 -0.9" stroke="#11807c" stroke-width="1.2"/>
<path d="M364.3 691.3 l-0.1 0.8" stroke="#eaae01" stroke-width="1.2"/>
<path d="M360.3 692.8 l-0.7 1.4" stroke="#1e9e9a" stroke-width="1.2"/>
<path d="M354.4 695.1 l-1.0 -0.2" stroke="#1e9e9a" stroke-width="1.2"/>
<path d="M363.5 691.1 l-1.0 -0.1" stroke="#1e9e9a" stroke-width="1.2"/>
<path d="M373.5 691.7 l0.1 -1.1" stroke="#eaae01" stroke-width="1.2"/>
<path d="M361.8 694.5 l-0.1 1.2" stroke="#1e9e9a" stroke-width="1.2"/>
<path d="M365.0 691.9 l-0.6 -0.4" stroke="#1e9e9a" stroke-width="1.2"/>
<path d="M355.1 693.4 l-0.0 -0.6" stroke="#eaae01" stroke-width="1.2"/>
<path d="M361.1 692.3 l-1.7 -0.8" stroke="#11807c" stroke-width="1.2"/>
<path d="M355.5 694.8 l1.0 1.2" stroke="#1e9e9a" stroke-width="1.2"/>
<path d="M369.1 692.4 l0.2 1.0" stroke="#eaae01" stroke-width="1.2"/>
<path d="M368.2 691.6 l-0.7 0.6" stroke="#f6726a" stroke-width="1.2"/>
<path d="M369.8 690.8 l0.2 -0.8" stroke="#eaae01" stroke-width="1.2"/>
<path d="M363.8 693.2 l-1.4 -0.6" stroke="#1e9e9a" stroke-width="1.2"/>
<path d="M354.7 694.8 l-1.8 -1.3" stroke="#1e9e9a" stroke-width="1.2"/>
<path d="M384.9 685.4 l0.7 0.0" stroke="#1e9e9a" stroke-width="1.2"/>
<path d="M382.8 686.7 l-1.8 -0.8" stroke="#eaae01" stroke-width="1.2"/>
<path d="M380.2 686.8 l-0.8 1.1" stroke="#eaae01" stroke-width="1.2"/>
<path d="M384.5 686.7 l1.8 -1.3" stroke="#1e9e9a" stroke-width="1.2"/>
<path d="M387.0 684.4 l0.9 -0.6" stroke="#11807c" stroke-width="1.2"/>
<path d="M378.3 688.7 l1.8 1.4" stroke="#eaae01" stroke-width="1.2"/>
<path d="M387.3 683.4 l-0.5 -1.0" stroke="#1e9e9a" stroke-width="1.2"/>
<path d="M391.5 682.2 l-1.2 -1.0" stroke="#eaae01" stroke-width="1.2"/>
<path d="M387.1 683.7 l0.2 -1.1" stroke="#1e9e9a" stroke-width="1.2"/>
<path d="M384.5 686.2 l-1.6 -0.2" stroke="#1e9e9a" stroke-width="1.2"/>
<path d="M381.0 686.7 l-0.5 0.8" stroke="#11807c" stroke-width="1.2"/>
<path d="M390.7 682.5 l1.0 -0.8" stroke="#1e9e9a" stroke-width="1.2"/>
<path d="M388.6 683.9 l-0.9 -1.3" stroke="#1e9e9a" stroke-width="1.2"/>
<path d="M391.1 681.3 l-0.6 -1.2" stroke="#11807c" stroke-width="1.2"/>
<path d="M387.0 683.6 l1.0 -0.1" stroke="#1e9e9a" stroke-width="1.2"/>
<path d="M386.9 683.7 l0.7 -0.2" stroke="#eaae01" stroke-width="1.2"/>
<path d="M377.6 686.9 l0.8 0.7" stroke="#11807c" stroke-width="1.2"/>
<path d="M391.0 682.2 l-0.6 -1.1" stroke="#eaae01" stroke-width="1.2"/>
<path d="M389.5 683.5 l-1.0 -0.8" stroke="#eaae01" stroke-width="1.2"/>
<path d="M380.5 686.6 l-1.8 -0.8" stroke="#1e9e9a" stroke-width="1.2"/>
<path d="M382.1 685.0 l-0.8 -0.4" stroke="#1e9e9a" stroke-width="1.2"/>
<path d="M380.9 686.9 l-0.4 0.5" stroke="#eaae01" stroke-width="1.2"/>
<path d="M296.4 701.7 l-1.1 -0.7" stroke="#1e9e9a" stroke-width="1.2"/>
<path d="M297.0 705.5 l-1.1 0.5" stroke="#f6726a" stroke-width="1.2"/>
<path d="M298.3 703.0 l1.1 -0.1" stroke="#1e9e9a" stroke-width="1.2"/>
<path d="M297.3 698.9 l-1.7 -0.9" stroke="#1e9e9a" stroke-width="1.2"/>
<path d="M298.0 709.5 l1.1 -1.1" stroke="#11807c" stroke-width="1.2"/>
<path d="M296.0 702.1 l-0.8 -0.9" stroke="#1e9e9a" stroke-width="1.2"/>
<path d="M297.1 708.0 l1.7 -0.2" stroke="#eaae01" stroke-width="1.2"/>
<path d="M296.2 699.3 l-1.0 1.1" stroke="#11807c" stroke-width="1.2"/>
<path d="M296.7 704.2 l-0.4 0.5" stroke="#11807c" stroke-width="1.2"/>
<path d="M296.0 698.1 l-0.7 0.3" stroke="#11807c" stroke-width="1.2"/>
<path d="M298.1 707.4 l-0.2 1.3" stroke="#1e9e9a" stroke-width="1.2"/>
<path d="M298.4 706.7 l0.1 -0.0" stroke="#f6726a" stroke-width="1.2"/>
<path d="M318.3 684.3 l1.8 0.3" stroke="#1e9e9a" stroke-width="1.2"/>
<path d="M319.4 682.3 l0.6 -0.9" stroke="#1e9e9a" stroke-width="1.2"/>
<path d="M319.2 684.7 l-0.2 -0.4" stroke="#1e9e9a" stroke-width="1.2"/>
<path d="M320.1 685.1 l-0.4 -0.6" stroke="#1e9e9a" stroke-width="1.2"/>
<path d="M319.7 685.1 l-0.6 0.5" stroke="#1e9e9a" stroke-width="1.2"/>
<path d="M322.0 684.2 l-0.5 0.7" stroke="#1e9e9a" stroke-width="1.2"/>
<path d="M320.1 682.8 l-0.2 0.7" stroke="#11807c" stroke-width="1.2"/>
<path d="M521.1 643.1 L512.8 646.6 L508.7 650.7 L505.9 656.2 L501.8 658.3" fill="none" stroke="#1e9e9a" stroke-width="1.5" stroke-linejoin="round" stroke-linecap="round" opacity="1"/>
<path d="M501.8 658.3 L497.6 659.3" fill="none" stroke="#eaae01" stroke-width="1.5" stroke-linejoin="round" stroke-linecap="round" opacity="1"/>
<path d="M497.6 659.3 L490.7 661.8" fill="none" stroke="#1e9e9a" stroke-width="1.5" stroke-linejoin="round" stroke-linecap="round" opacity="1"/>
<path d="M490.7 661.8 L482.5 663.1 L475.6 661.8 L474.2 660.4" fill="none" stroke="#98a1ae" stroke-width="1.5" stroke-linejoin="round" stroke-linecap="round" opacity="1"/>
<path d="M476.9 663.8 L488.0 664.5 L490.7 663.1" fill="none" stroke="#98a1ae" stroke-width="1.2" stroke-linejoin="round" stroke-linecap="round" opacity="1"/>
<path d="M478.3 663.8 L483.8 664.2" fill="none" stroke="#eaae01" stroke-width="1.3" stroke-linejoin="round" stroke-linecap="round" opacity="1"/>
<path d="M490.7 661.8 L494.9 668.7 L495.6 678.3 L494.2 685.2 L490.7 689.4 L485.2 690.7" fill="none" stroke="#1e9e9a" stroke-width="1.5" stroke-linejoin="round" stroke-linecap="round" opacity="1"/>
<path d="M464.5 665.9 L472.8 665.2 L473.5 670.0" fill="none" stroke="#1e9e9a" stroke-width="1.5" stroke-linejoin="round" stroke-linecap="round" opacity="1"/>
<path d="M473.5 670.0 L470.0 672.8 L460.4 674.9" fill="none" stroke="#eaae01" stroke-width="1.5" stroke-linejoin="round" stroke-linecap="round" opacity="1"/>
<path d="M441.7 673.5 L450.7 674.2 L459.0 673.5 L454.8 676.9 L451.4 681.1" fill="none" stroke="#1e9e9a" stroke-width="1.8" stroke-linejoin="round" stroke-linecap="round" opacity="1"/>
<path d="M454.2 688.0 L464.5 688.0 L475.6 686.6 L482.5 688.0 L489.4 690.7 L497.6 694.2" fill="none" stroke="#98a1ae" stroke-width="1.5" stroke-linejoin="round" stroke-linecap="round" opacity="1"/>
<path d="M463.1 689.4 L460.4 694.9 L454.8 697.6 L446.6 700.4" fill="none" stroke="#1e9e9a" stroke-width="1.6" stroke-linejoin="round" stroke-linecap="round" opacity="1"/>
<path d="M454.8 697.6 L461.8 703.2 L468.7 708.0 L475.6 705.9 L481.1 701.8 L488.0 697.6" fill="none" stroke="#98a1ae" stroke-width="1.5" stroke-linejoin="round" stroke-linecap="round" opacity="1"/>
<path d="M478.3 694.9 L479.7 699.0 L488.0 696.3 L489.4 693.5 L485.2 692.8 L478.3 694.9" fill="none" stroke="#1e9e9a" stroke-width="1.4" stroke-linejoin="round" stroke-linecap="round" opacity="1"/>
<path d="M481.1 701.8 L476.9 711.4" fill="none" stroke="#98a1ae" stroke-width="1.4" stroke-linejoin="round" stroke-linecap="round" opacity="1"/>
<path d="M470.0 708.7 L468.7 717.0 L464.5 718.3" fill="none" stroke="#1e9e9a" stroke-width="1.5" stroke-linejoin="round" stroke-linecap="round" opacity="1"/>
<path d="M464.5 718.3 L456.2 719.7" fill="none" stroke="#eaae01" stroke-width="1.4" stroke-linejoin="round" stroke-linecap="round" opacity="1"/>
<path d="M454.8 717.0 L447.9 723.9" fill="none" stroke="#98a1ae" stroke-width="1.5" stroke-linejoin="round" stroke-linecap="round" opacity="1"/>
<path d="M488.0 710.1 L501.8 709.4 L512.8 705.9 L523.9 704.5" fill="none" stroke="#1e9e9a" stroke-width="1.5" stroke-linejoin="round" stroke-linecap="round" opacity="1"/>
<path d="M523.9 704.5 L540.4 705.2" fill="none" stroke="#98a1ae" stroke-width="1.5" stroke-linejoin="round" stroke-linecap="round" opacity="1"/>
<path d="M523.9 689.4 L525.3 696.3 L522.5 707.3 L523.9 712.8" fill="none" stroke="#98a1ae" stroke-width="1.3" stroke-linejoin="round" stroke-linecap="round" opacity="1"/>
<path d="M519.7 704.5 L540.4 705.9 L541.8 710.1 L529.4 710.1" fill="none" stroke="#98a1ae" stroke-width="1.3" stroke-linejoin="round" stroke-linecap="round" opacity="1"/>
<path d="M533.5 710.1 L529.4 721.1" fill="none" stroke="#1e9e9a" stroke-width="1.5" stroke-linejoin="round" stroke-linecap="round" opacity="1"/>
<path d="M529.4 721.1 L544.6 721.8 L548.7 723.2" fill="none" stroke="#98a1ae" stroke-width="1.4" stroke-linejoin="round" stroke-linecap="round" opacity="1"/>
<path d="M529.4 715.6 L517.0 723.2" fill="none" stroke="#98a1ae" stroke-width="1.3" stroke-linejoin="round" stroke-linecap="round" opacity="1"/>
<path d="M543.2 704.5 L544.6 696.3 L551.5 688.0 L558.4 679.7 L559.8 676.9" fill="none" stroke="#eaae01" stroke-width="1.3" stroke-linejoin="round" stroke-linecap="round" opacity="1"/>
<path d="M544.6 697.0 L551.5 688.7 L557.7 680.4" fill="none" stroke="#98a1ae" stroke-width="0.8" stroke-linejoin="round" stroke-linecap="round" opacity="1"/>
<path d="M559.8 676.9 L566.7 679.7" fill="none" stroke="#1e9e9a" stroke-width="1.3" stroke-linejoin="round" stroke-linecap="round" opacity="1"/>
<path d="M559.8 681.1 L567.4 685.2 L565.3 693.5" fill="none" stroke="#eaae01" stroke-width="1.4" stroke-linejoin="round" stroke-linecap="round" opacity="1"/>
<path d="M550.1 729.4 L561.1 725.3 L580.5 725.3 L581.8 719.7" fill="none" stroke="#98a1ae" stroke-width="1.5" stroke-linejoin="round" stroke-linecap="round" opacity="1"/>
<path d="M551.5 730.8 L557.0 732.2" fill="none" stroke="#98a1ae" stroke-width="1.3" stroke-linejoin="round" stroke-linecap="round" opacity="1"/>
<path d="M490.7 673.5 L500.4 672.8" fill="none" stroke="#98a1ae" stroke-width="1.0" stroke-linejoin="round" stroke-linecap="round" opacity="1"/>
<path d="M477.3 688.6 l-0.7 -1.1" stroke="#1e9e9a" stroke-width="1.1"/>
<path d="M478.3 686.6 l0.1 0.4" stroke="#f6726a" stroke-width="1.1"/>
<path d="M484.4 691.2 l-0.5 -0.1" stroke="#98a1ae" stroke-width="1.1"/>
<path d="M481.9 690.8 l-0.0 -0.3" stroke="#98a1ae" stroke-width="1.1"/>
<path d="M477.4 689.3 l-1.1 -0.4" stroke="#1e9e9a" stroke-width="1.1"/>
<path d="M478.9 692.1 l-0.2 -0.4" stroke="#eaae01" stroke-width="1.1"/>
<path d="M484.4 687.5 l-0.4 -1.1" stroke="#98a1ae" stroke-width="1.1"/>
<path d="M481.4 687.8 l1.1 0.9" stroke="#1e9e9a" stroke-width="1.1"/>
<path d="M479.0 687.5 l0.0 -0.9" stroke="#eaae01" stroke-width="1.1"/>
<path d="M477.4 689.4 l1.5 1.2" stroke="#f6726a" stroke-width="1.1"/>
<path d="M478.6 687.5 l0.7 -0.9" stroke="#1e9e9a" stroke-width="1.1"/>
<path d="M477.9 687.1 l0.4 -0.7" stroke="#1e9e9a" stroke-width="1.1"/>
<path d="M474.9 690.4 l-0.8 -1.0" stroke="#f6726a" stroke-width="1.1"/>
<path d="M481.8 691.5 l-0.8 0.2" stroke="#98a1ae" stroke-width="1.1"/>
<path d="M480.4 688.3 l0.2 0.0" stroke="#1e9e9a" stroke-width="1.1"/>
<path d="M483.2 686.9 l-1.1 -0.7" stroke="#eaae01" stroke-width="1.1"/>
<path d="M477.8 688.9 l-1.5 -0.7" stroke="#eaae01" stroke-width="1.1"/>
<path d="M478.0 688.8 l1.1 -0.6" stroke="#1e9e9a" stroke-width="1.1"/>
<path d="M480.6 688.6 l0.1 0.1" stroke="#1e9e9a" stroke-width="1.1"/>
<path d="M477.7 689.2 l-0.1 1.2" stroke="#1e9e9a" stroke-width="1.1"/>
<path d="M475.2 688.6 l0.3 -0.8" stroke="#98a1ae" stroke-width="1.1"/>
<path d="M480.7 689.2 l-1.0 1.1" stroke="#eaae01" stroke-width="1.1"/>
<path d="M484.5 690.9 l-0.2 1.2" stroke="#1e9e9a" stroke-width="1.1"/>
<path d="M475.6 689.1 l0.6 -1.0" stroke="#98a1ae" stroke-width="1.1"/>
<path d="M483.7 687.5 l-0.2 0.0" stroke="#1e9e9a" stroke-width="1.1"/>
<path d="M477.6 690.6 l-0.4 0.5" stroke="#f6726a" stroke-width="1.1"/>
<path d="M475.7 689.5 l-0.4 0.9" stroke="#1e9e9a" stroke-width="1.1"/>
<path d="M476.8 691.6 l1.0 0.2" stroke="#eaae01" stroke-width="1.1"/>
<path d="M480.3 688.0 l0.4 0.5" stroke="#1e9e9a" stroke-width="1.1"/>
<path d="M483.1 688.6 l0.4 -0.9" stroke="#f6726a" stroke-width="1.1"/>
<path d="M525.6 703.6 l-0.2 1.1" stroke="#98a1ae" stroke-width="1.1"/>
<path d="M522.5 705.3 l1.5 -0.7" stroke="#98a1ae" stroke-width="1.1"/>
<path d="M524.2 705.1 l-0.8 0.7" stroke="#eaae01" stroke-width="1.1"/>
<path d="M523.4 707.9 l0.9 -1.1" stroke="#eaae01" stroke-width="1.1"/>
<path d="M522.6 708.2 l0.5 0.4" stroke="#eaae01" stroke-width="1.1"/>
<path d="M523.8 705.8 l0.1 -1.0" stroke="#98a1ae" stroke-width="1.1"/>
<path d="M520.6 704.0 l0.0 0.5" stroke="#1e9e9a" stroke-width="1.1"/>
<path d="M526.6 706.9 l-0.6 0.1" stroke="#eaae01" stroke-width="1.1"/>
<path d="M526.0 707.3 l-1.1 -0.5" stroke="#1e9e9a" stroke-width="1.1"/>
<path d="M525.7 706.2 l0.9 1.1" stroke="#f6726a" stroke-width="1.1"/>
<path d="M527.2 707.0 l1.0 0.2" stroke="#1e9e9a" stroke-width="1.1"/>
<path d="M526.4 705.1 l0.1 -0.8" stroke="#eaae01" stroke-width="1.1"/>
<path d="M519.5 708.5 l0.3 -1.1" stroke="#1e9e9a" stroke-width="1.1"/>
<path d="M528.2 708.8 l-1.1 0.7" stroke="#1e9e9a" stroke-width="1.1"/>
<path d="M519.6 708.4 l-1.4 0.3" stroke="#f6726a" stroke-width="1.1"/>
<path d="M521.2 703.4 l-0.1 -0.6" stroke="#1e9e9a" stroke-width="1.1"/>
<path d="M520.7 704.8 l-0.5 -1.1" stroke="#1e9e9a" stroke-width="1.1"/>
<path d="M522.2 703.3 l-1.4 0.5" stroke="#1e9e9a" stroke-width="1.1"/>
<path d="M519.4 707.1 l-0.7 1.0" stroke="#1e9e9a" stroke-width="1.1"/>
<path d="M527.9 708.1 l0.3 1.1" stroke="#eaae01" stroke-width="1.1"/>
<path d="M524.4 703.0 l0.7 -0.7" stroke="#1e9e9a" stroke-width="1.1"/>
<path d="M519.8 708.5 l-0.0 0.2" stroke="#f6726a" stroke-width="1.1"/>
<path d="M527.7 705.2 l-0.1 0.7" stroke="#f6726a" stroke-width="1.1"/>
<path d="M523.4 704.1 l-0.7 0.6" stroke="#98a1ae" stroke-width="1.1"/>
<path d="M527.2 704.4 l-0.6 -1.1" stroke="#1e9e9a" stroke-width="1.1"/>
<path d="M519.8 705.6 l-0.1 -0.4" stroke="#eaae01" stroke-width="1.1"/>
<path d="M523.7 706.7 l0.9 0.5" stroke="#1e9e9a" stroke-width="1.1"/>
<path d="M522.9 703.9 l0.7 0.4" stroke="#eaae01" stroke-width="1.1"/>
<path d="M522.9 706.1 l-0.2 -0.8" stroke="#98a1ae" stroke-width="1.1"/>
<path d="M528.6 704.2 l0.5 -0.6" stroke="#98a1ae" stroke-width="1.1"/>
<path d="M455.6 676.6 l-0.7 0.3" stroke="#eaae01" stroke-width="1.1"/>
<path d="M454.7 673.4 l1.0 -0.4" stroke="#f6726a" stroke-width="1.1"/>
<path d="M457.9 676.4 l-0.7 0.8" stroke="#eaae01" stroke-width="1.1"/>
<path d="M455.4 674.8 l1.2 0.5" stroke="#1e9e9a" stroke-width="1.1"/>
<path d="M451.5 675.2 l0.9 0.4" stroke="#1e9e9a" stroke-width="1.1"/>
<path d="M458.0 673.8 l0.6 -0.2" stroke="#1e9e9a" stroke-width="1.1"/>
<path d="M458.3 672.1 l0.0 -0.8" stroke="#98a1ae" stroke-width="1.1"/>
<path d="M452.1 676.4 l-0.7 -1.0" stroke="#eaae01" stroke-width="1.1"/>
<path d="M457.1 676.2 l-0.1 0.1" stroke="#98a1ae" stroke-width="1.1"/>
<path d="M454.2 674.2 l-1.4 1.0" stroke="#1e9e9a" stroke-width="1.1"/>
<path d="M451.8 671.4 l0.2 0.1" stroke="#1e9e9a" stroke-width="1.1"/>
<path d="M452.0 675.9 l0.4 0.2" stroke="#eaae01" stroke-width="1.1"/>
<path d="M459.2 672.2 l-0.4 -0.0" stroke="#eaae01" stroke-width="1.1"/>
<path d="M450.5 675.0 l-0.6 -0.6" stroke="#1e9e9a" stroke-width="1.1"/>
<path d="M474.5 709.1 l1.0 0.9" stroke="#1e9e9a" stroke-width="1.1"/>
<path d="M466.9 705.8 l-0.7 0.8" stroke="#1e9e9a" stroke-width="1.1"/>
<path d="M469.0 705.4 l-0.6 -0.1" stroke="#1e9e9a" stroke-width="1.1"/>
<path d="M470.1 709.0 l-0.3 0.6" stroke="#1e9e9a" stroke-width="1.1"/>
<path d="M475.0 705.0 l-1.2 0.5" stroke="#1e9e9a" stroke-width="1.1"/>
<path d="M474.2 710.3 l-0.4 -0.4" stroke="#98a1ae" stroke-width="1.1"/>
<path d="M470.3 708.2 l-0.3 -0.5" stroke="#f6726a" stroke-width="1.1"/>
<path d="M467.1 710.0 l0.7 0.4" stroke="#f6726a" stroke-width="1.1"/>
<path d="M472.3 707.5 l-0.7 0.8" stroke="#eaae01" stroke-width="1.1"/>
<path d="M475.5 709.2 l0.5 0.1" stroke="#98a1ae" stroke-width="1.1"/>
<path d="M450.3 720.2 l1.5 0.0" stroke="#98a1ae" stroke-width="1.1"/>
<path d="M446.9 720.8 l1.4 -1.2" stroke="#eaae01" stroke-width="1.1"/>
<path d="M452.0 720.5 l-0.1 -0.9" stroke="#98a1ae" stroke-width="1.1"/>
<path d="M448.7 721.0 l1.3 -0.9" stroke="#1e9e9a" stroke-width="1.1"/>
<path d="M449.6 716.7 l-1.4 -0.1" stroke="#eaae01" stroke-width="1.1"/>
<path d="M449.0 720.3 l-1.3 -1.1" stroke="#eaae01" stroke-width="1.1"/>
<path d="M446.5 717.0 l-0.6 0.1" stroke="#eaae01" stroke-width="1.1"/>
<path d="M453.8 717.4 l0.4 1.2" stroke="#1e9e9a" stroke-width="1.1"/>
<path d="M448.7 721.4 l0.6 0.3" stroke="#eaae01" stroke-width="1.1"/>
<path d="M452.1 721.2 l-1.1 -0.1" stroke="#1e9e9a" stroke-width="1.1"/>
<path d="M534.8 720.8 l-0.2 -0.7" stroke="#1e9e9a" stroke-width="1.1"/>
<path d="M539.6 720.0 l0.6 -0.3" stroke="#1e9e9a" stroke-width="1.1"/>
<path d="M535.1 721.4 l0.3 0.4" stroke="#1e9e9a" stroke-width="1.1"/>
<path d="M532.5 723.7 l-0.2 0.6" stroke="#98a1ae" stroke-width="1.1"/>
<path d="M532.7 719.0 l-1.0 -0.8" stroke="#f6726a" stroke-width="1.1"/>
<path d="M532.6 723.1 l0.2 -0.2" stroke="#1e9e9a" stroke-width="1.1"/>
</svg>
<div class="abs ml" style="left:520.5px;top:443.1px">GOSSA</div>
<div class="abs ml" style="left:385.0px;top:489.7px">HARØYA</div>
<div class="abs ml" style="left:351.3px;top:532.7px">FJØRTOFTA</div>
<div class="abs ml" style="left:297.9px;top:545.9px">FLEMSØYA</div>
<div class="abs ml" style="left:438.9px;top:553.3px">MIDØYA</div>
<div class="abs ml" style="left:513.9px;top:528.9px">OTRØYA</div>
<div class="abs ml" style="left:285.6px;top:566.7px">HARAMSØYA</div>
<div class="abs ml" style="left:282.6px;top:595.9px">LEPSØYA</div>
<div class="abs ml" style="left:252.4px;top:642.3px">VIGRA</div>
<div class="abs ml" style="left:216.7px;top:706.2px">GODØYA</div>
<div class="abs ml" style="left:326.8px;top:684.6px">ELLINGSØYA</div>
<div class="abs ml" style="left:285.8px;top:746.9px">SULA</div>
<div class="abs ml" style="left:374.5px;top:715.3px">SENØYA</div>

<div class="abs mc" style="left:12px;top:372px;width:20px;height:40px"></div>
<svg class="abs" style="left:12px;top:372px" width="20" height="40" viewBox="0 0 20 40"><circle cx="9.7" cy="9.3" r="4.6" fill="#17223a"/><path d="M9.7 6.8 V11.8 M7.2 9.3 H12.2" stroke="#fff" stroke-width="0.9"/><circle cx="9.7" cy="28.8" r="4.6" fill="#17223a"/><path d="M7.2 28.8 H12.2" stroke="#fff" stroke-width="1.1"/></svg>
<div class="abs mc" style="left:12px;top:417px;width:20px;height:20px"></div>
<svg class="abs" style="left:12px;top:417px" width="20" height="20" viewBox="0 0 20 20"><circle cx="10" cy="10" r="3.8" fill="none" stroke="#69707d" stroke-width="0.7"/><circle cx="10" cy="10" r="0.8" fill="#69707d"/><path d="M10 5.2 V6.2 M10 13.8 V14.8 M5.2 10 H6.2 M13.8 10 H14.8" stroke="#69707d" stroke-width="0.7"/></svg>
<div class="abs mc" style="left:12px;top:442px;width:20px;height:20px;background:#56698a"></div>
<svg class="abs" style="left:12px;top:442px" width="20" height="20" viewBox="0 0 20 20"><path d="M6 14 L14 6 M10.5 6 H14 V9.5 M6 10.5 V14 H9.5" fill="none" stroke="#dfe5ef" stroke-width="0.8"/></svg>
<div class="abs mc" style="left:12px;top:467px;width:20px;height:20px"></div>
<svg class="abs" style="left:12px;top:467px" width="20" height="20" viewBox="0 0 20 20"><path d="M6 12.8 L10 8.8 L11.2 10 L7.2 14 Q6.6 14.6 6 14 Q5.4 13.4 6 12.8 Z" fill="none" stroke="#343741" stroke-width="0.75"/><path d="M10 8.8 Q9.3 6.8 10.8 5.6 Q12 4.8 13.2 5.2 L11.8 6.6 L12.4 7.8 L13.6 8.4 L15 7 Q15.3 8.4 14.4 9.3 Q13.2 10.6 11.2 10" fill="none" stroke="#343741" stroke-width="0.75"/></svg>
<!-- layers panel -->
<div class="abs" style="left:636px;top:372px;width:200px;height:237px;background:#fff;border-radius:3px;box-shadow:0 1px 4px rgba(0,0,0,0.13),0 0 1px rgba(0,0,0,0.15)"></div>
<div class="abs" style="left:636px;top:446px;width:200px;height:71px;background:#f5f8fc"></div>
<div class="abs lyl" style="top:392px"></div>
<div class="abs lyl" style="top:418px"></div>
<div class="abs lyl" style="top:519px"></div>
<div class="abs lyl" style="top:545px"></div>
<div class="abs lyl" style="top:571px"></div>
<div class="abs lyl" style="top:597px"></div>
<div class="abs" style="left:646.5px;top:377px;font-size:7.2px;font-weight:bold;color:#1d2a3e;line-height:9px;letter-spacing:0.25px">LAYERS</div>
<svg class="abs" style="left:787px;top:376px" width="45" height="11" viewBox="0 0 45 11"><path d="M1.5 5.5 Q5.5 1 9.5 5.5 Q5.5 10 1.5 5.5 Z" fill="none" stroke="#343741" stroke-width="0.8"/><circle cx="5.5" cy="5.5" r="1.6" fill="none" stroke="#343741" stroke-width="0.8"/><path d="M1.5 9.5 L9.5 1.5" stroke="#343741" stroke-width="0.8"/><path d="M17.5 5.5 Q22 1 26.5 5.5 Q22 10 17.5 5.5 Z" fill="none" stroke="#343741" stroke-width="0.8"/><circle cx="22" cy="5.5" r="1.7" fill="none" stroke="#343741" stroke-width="0.8"/><path d="M34 3 H39.5 M34 6 H42 M34 9 H39.5 M40 4 L42 6 L40 8" fill="none" stroke="#343741" stroke-width="0.8"/></svg>
<svg class="abs" style="left:641px;top:401px" width="11" height="9" viewBox="0 0 11 9"><path d="M1 4.5 Q5.5 0 10 4.5 Q5.5 9 1 4.5 Z" fill="none" stroke="#a2abba" stroke-width="0.8"/><circle cx="5.5" cy="4.5" r="1.6" fill="none" stroke="#a2abba" stroke-width="0.8"/><path d="M1.5 8.5 L9.5 0.5" stroke="#a2abba" stroke-width="0.8"/></svg>
<div class="abs lyt g" style="top:401px">PF Risk</div>
<div class="abs" style="left:641px;top:426px;width:10px;height:10px;background:#16c5c0;outline:0.8px dashed #f4f8e0;outline-offset:-2px"></div>
<div class="abs lyt" style="top:427px;color:#2b3445;-webkit-text-stroke:0.15px #2b3445;letter-spacing:0.2px">NorskVann | Risk</div>
<div class="abs" style="left:641.5px;top:454px;font-size:7.6px;color:#1d2a3e;line-height:9px;letter-spacing:0px;-webkit-text-stroke:0.2px #1d2a3e">pf_norsk_vann_class</div>
<div class="abs sw" style="top:463.5px;border-color:#f5d08a;background:#fefbf3"></div><div class="abs lyt" style="top:463.5px;color:#4a5060">beginning</div>
<div class="abs sw" style="top:473.5px;border-color:#f0958c;background:#fef5f4"></div><div class="abs lyt" style="top:473.5px;color:#4a5060">immediate</div>
<div class="abs sw" style="top:483.5px;border-color:#5cbdba;background:#f3fbfb"></div><div class="abs lyt" style="top:483.5px;color:#4a5060">no need</div>
<div class="abs sw" style="top:493.5px;border-color:#b9bec7;background:#f8f9fb"></div><div class="abs lyt" style="top:493.5px;color:#4a5060">unknown</div>
<div class="abs sw" style="top:503.5px;border-color:#eef1f6"></div><div class="abs lyt" style="top:503.5px;color:#8e97a8">Other</div>
<svg class="abs" style="left:641px;top:528px" width="11" height="9" viewBox="0 0 11 9"><path d="M1 4.5 Q5.5 0 10 4.5 Q5.5 9 1 4.5 Z" fill="none" stroke="#a2abba" stroke-width="0.8"/><circle cx="5.5" cy="4.5" r="1.6" fill="none" stroke="#a2abba" stroke-width="0.8"/><path d="M1.5 8.5 L9.5 0.5" stroke="#a2abba" stroke-width="0.8"/></svg>
<div class="abs lyt g" style="top:528px">Trykksoner</div>
<svg class="abs" style="left:641px;top:554px" width="11" height="9" viewBox="0 0 11 9"><path d="M1 4.5 Q5.5 0 10 4.5 Q5.5 9 1 4.5 Z" fill="none" stroke="#a2abba" stroke-width="0.8"/><circle cx="5.5" cy="4.5" r="1.6" fill="none" stroke="#a2abba" stroke-width="0.8"/><path d="M1.5 8.5 L9.5 0.5" stroke="#a2abba" stroke-width="0.8"/></svg>
<div class="abs lyt g" style="top:553.5px">Avløpssoner</div>
<svg class="abs" style="left:641px;top:580px" width="10" height="10" viewBox="0 0 10 10"><g fill="#4f5666"><rect x="0" y="0" width="2.6" height="2.6" rx="0.6"/><rect x="3.7" y="0" width="2.6" height="2.6" rx="0.6"/><rect x="7.4" y="0" width="2.6" height="2.6" rx="0.6"/><rect x="0" y="3.7" width="2.6" height="2.6" rx="0.6"/><rect x="3.7" y="3.7" width="2.6" height="2.6" rx="0.6"/><rect x="7.4" y="3.7" width="2.6" height="2.6" rx="0.6"/><rect x="0" y="7.4" width="2.6" height="2.6" rx="0.6"/><rect x="3.7" y="7.4" width="2.6" height="2.6" rx="0.6"/><rect x="7.4" y="7.4" width="2.6" height="2.6" rx="0.6"/></g></svg>
<div class="abs lyt" style="top:580px;color:#1d2a3e;-webkit-text-stroke:0.25px #1d2a3e">Basemap</div>
<!-- attribution -->
<div class="abs" style="left:814px;top:634px;font-size:9.5px;color:#3a3f48;line-height:11px;white-space:nowrap">Åndalsr</div>
<div class="abs" style="left:816.5px;top:652.5px;font-size:6.6px;font-weight:bold;color:#3a3f48;line-height:7px">E 136</div>
<div class="abs" style="left:773.5px;top:684px;font-size:6.6px;font-weight:bold;color:#3a3f48;line-height:7px">E 136</div>
<div class="abs" style="left:798px;top:764px;width:38px;height:10px;background:rgba(255,255,255,0.75);font-size:7.2px;line-height:10px;color:#1d2a3e;padding-left:2px;white-space:nowrap"><b style="font-weight:bold">zoom:</b> <span style="color:#343741">8.65</span></div>
<div class="abs" style="left:594px;top:779px;width:242px;height:11px;background:rgba(255,255,255,0.75);font-size:7.05px;line-height:11px;color:#1d2a3e;padding-left:3px;white-space:nowrap">Elastic Maps Service <span class="ext"></span>, OpenMapTiles <span class="ext"></span>, OpenStreetMap contributors <span class="ext"></span></div>

<!-- /map -->
<!-- metrics -->
<div class="abs" style="left:383px;top:120px;width:253px;height:100px;background:#fff"></div>
<svg class="abs" style="left:0;top:0" width="1402" height="221" viewBox="0 0 1402 221"><path d="M389.9 220 L389.9 219.8 L392.1 200.8 L394.8 215.3 L401.1 216.2 L404.7 217.1 L411.1 192.6 L413.8 214.3 L416.5 194.4 L419.2 216.2 L421.9 203.5 L424.7 203.5 L430.1 193.5 L432.8 216.2 L439.2 179.9 L441.9 216.2 L445.5 193.5 L451.8 218.9 L458.2 171.8 L462.7 196.2 L466.3 210.7 L468.1 212.5 L474.5 195.3 L479.0 212.5 L483.5 195.3 L487.2 212.5 L491.7 214.3 L493.5 218.9 L498.9 210.7 L506.2 195.3 L509.8 205.3 L512.5 201.7 L515.2 211.6 L522.5 203.5 L527.9 208.0 L531.6 188.1 L537.0 189.0 L542.4 209.8 L544.2 199.9 L555.1 196.2 L566.0 214.3 L576.8 216.2 L582.3 209.8 L591.3 216.2 L598.6 207.1 L609.4 216.2 L618.5 208.9 L627.6 214.3 L631.2 218.9 L631.2 220 Z" fill="#e4e4e4"/></svg>
<div class="abs mt" style="left:388px;top:126px">combined</div>
<div class="abs ms" style="left:388px;top:139px">Lengde [km]</div>
<div class="abs mv" style="right:770.5px;top:188px;font-size:24.6px">129.0<span>km</span></div>
<div class="abs" style="left:637px;top:120px;width:253px;height:100px;background:#f6726a"></div>
<svg class="abs" style="left:0;top:0" width="1402" height="221" viewBox="0 0 1402 221"><path d="M637.0 220 L637.0 219.8 L640.6 217.6 L643.3 219.4 L646.1 217.6 L649.7 219.4 L655.1 218.9 L660.6 218.3 L666.0 219.4 L670.5 215.3 L673.2 218.9 L677.8 214.7 L681.4 218.9 L689.5 215.3 L695.0 218.9 L703.1 215.3 L706.7 219.4 L709.5 198.0 L713.1 204.4 L720.3 205.3 L723.1 203.5 L725.8 206.2 L731.2 206.7 L736.6 205.3 L741.2 207.5 L744.8 190.8 L750.2 198.9 L754.8 200.2 L758.4 203.5 L761.1 206.2 L763.8 189.3 L766.5 203.5 L772.9 211.6 L779.2 212.9 L783.7 209.8 L788.3 208.0 L792.8 198.0 L795.5 197.1 L798.2 188.1 L800.9 196.2 L807.3 177.2 L810.9 196.2 L815.4 200.8 L820.0 197.1 L823.6 186.3 L827.2 198.9 L832.7 189.9 L838.1 187.2 L845.3 178.1 L852.6 186.3 L857.1 179.0 L861.6 179.9 L868.9 170.0 L870.7 170.5 L874.3 180.8 L880.7 174.5 L887.0 203.5 L889.7 219.8 L889.7 220 Z" fill="#f89c97"/></svg>
<div class="abs mt" style="left:642px;top:126px">stormwater</div>
<div class="abs ms" style="left:642px;top:139px">Lengde [km]</div>
<div class="abs mv" style="right:516.0px;top:188px;font-size:24.5px">419.8<span>km</span></div>
<div class="abs" style="left:891px;top:120px;width:253px;height:100px;background:#f6726a"></div>
<svg class="abs" style="left:0;top:0" width="1402" height="221" viewBox="0 0 1402 221"><path d="M891.0 220 L891.0 219.8 L898.2 218.9 L901.0 217.1 L903.7 219.4 L907.3 216.5 L912.7 218.3 L917.3 215.3 L922.7 216.5 L926.3 214.7 L929.9 217.6 L933.6 215.8 L938.1 216.5 L945.3 214.3 L949.0 212.9 L952.6 214.3 L957.1 199.9 L959.8 218.9 L963.5 193.5 L966.2 189.9 L970.7 197.1 L973.4 199.9 L976.1 186.3 L979.4 198.9 L982.5 191.7 L986.1 199.9 L992.4 195.3 L995.2 205.3 L998.8 181.7 L1001.5 184.5 L1005.1 195.3 L1009.7 193.0 L1014.2 194.4 L1017.8 174.5 L1021.4 191.7 L1026.9 204.4 L1030.5 198.0 L1035.9 207.5 L1040.5 198.9 L1042.3 199.9 L1045.9 183.2 L1049.5 192.6 L1052.2 189.0 L1055.9 190.8 L1061.3 176.3 L1064.9 198.0 L1068.5 192.6 L1071.3 183.6 L1074.0 193.5 L1077.6 184.5 L1081.2 191.7 L1086.7 186.3 L1090.3 189.9 L1093.9 185.4 L1096.6 170.9 L1099.3 173.6 L1105.7 188.1 L1110.2 182.6 L1117.4 179.0 L1121.1 180.8 L1124.7 173.0 L1128.3 181.7 L1134.7 182.6 L1140.1 204.4 L1143.7 218.9 L1143.7 220 Z" fill="#f89c97"/></svg>
<div class="abs mt" style="left:896px;top:126px">wastewater</div>
<div class="abs ms" style="left:896px;top:139px">Lengde [km]</div>
<div class="abs mv" style="right:262.3px;top:188px;font-size:25.4px">585.3<span>km</span></div>
<div class="abs" style="left:1145px;top:120px;width:254px;height:100px;background:#16c5c0"></div>
<svg class="abs" style="left:0;top:0" width="1402" height="221" viewBox="0 0 1402 221"><path d="M1151.3 220 L1151.3 219.8 L1154.1 190.8 L1157.7 214.3 L1161.3 212.5 L1167.6 215.3 L1170.4 206.2 L1176.7 214.3 L1181.2 216.2 L1183.0 217.6 L1186.3 195.3 L1189.4 215.3 L1193.0 214.3 L1195.7 216.5 L1199.3 208.6 L1203.0 209.8 L1207.5 214.3 L1212.0 208.9 L1214.7 219.8 L1221.1 178.1 L1224.7 208.9 L1227.4 203.5 L1230.1 210.7 L1236.5 183.6 L1243.7 200.8 L1246.4 199.9 L1252.8 170.9 L1256.4 199.9 L1260.9 203.5 L1262.8 206.2 L1271.8 175.4 L1275.4 197.1 L1278.2 194.4 L1281.8 205.3 L1284.5 195.3 L1288.1 207.1 L1290.8 200.8 L1293.6 207.1 L1299.9 189.0 L1306.2 192.6 L1309.9 196.2 L1317.1 199.9 L1326.2 194.4 L1333.4 205.3 L1337.0 196.2 L1341.6 184.5 L1344.3 189.9 L1347.9 185.4 L1351.5 192.6 L1357.0 187.2 L1362.4 191.7 L1366.9 179.0 L1370.5 189.9 L1373.3 176.3 L1376.9 189.0 L1380.5 178.1 L1387.8 191.7 L1389.6 183.6 L1394.1 203.5 L1398.6 219.8 L1398.6 220 Z" fill="#2ae8e0"/></svg>
<div class="abs mt" style="left:1150px;top:126px">water</div>
<div class="abs ms" style="left:1150px;top:139px">Lengde [km]</div>
<div class="abs mv" style="right:7.7px;top:188px;font-size:24.0px">827.5<span>km</span></div>
<!-- table -->
<div class="abs" style="left:388px;top:230px;width:993px;height:25px;background:#e9eef6"></div>
<div class="abs" style="left:388px;top:276px;width:993px;height:1px;background:#dde4ef"></div>
<div class="abs" style="left:388px;top:298px;width:993px;height:1px;background:#dde4ef"></div>
<div class="abs" style="left:388px;top:321px;width:993px;height:1px;background:#dde4ef"></div>
<div class="abs tc" style="left:392px;top:326px;height:4px;overflow:hidden">unknown</div>
<div class="abs tc" style="right:522px;top:326px;height:4px;overflow:hidden">1,099,917[m]</div>
<div class="abs tc" style="right:273px;top:326px;height:4px;overflow:hidden">20b[NOK]</div>
<div class="abs tc" style="right:25px;top:326px;height:4px;overflow:hidden">11b[NOK]</div>
<div class="abs" style="left:388px;top:330px;width:993px;height:24px;background:#e9eef6"></div>
<div class="abs th" style="left:392px;top:236px">Saneringsbehov ihht Norsk Vann</div>
<div class="abs th" style="right:522px;top:236px">Lengde</div>
<div class="abs th" style="right:273px;top:236px">Tradisjonell Grøfting</div>
<div class="abs th" style="right:25px;top:236px">No-dig</div>
<div class="abs tc" style="left:392px;top:259px">immediate</div>
<div class="abs tc" style="right:522px;top:259px">201,750[m]</div>
<div class="abs tc" style="right:273px;top:259px">4b[NOK]</div>
<div class="abs tc" style="right:25px;top:259px">2b[NOK]</div>
<div class="abs tc" style="left:392px;top:281px">unknown</div>
<div class="abs tc" style="right:522px;top:281px">304,973[m]</div>
<div class="abs tc" style="right:273px;top:281px">5b[NOK]</div>
<div class="abs tc" style="right:25px;top:281px">3b[NOK]</div>
<div class="abs tc" style="left:392px;top:303px">beginning</div>
<div class="abs tc" style="right:522px;top:303px">355,256[m]</div>
<div class="abs tc" style="right:273px;top:303px">6b[NOK]</div>
<div class="abs tc" style="right:25px;top:303px">3b[NOK]</div>
<div class="abs th" style="right:522px;top:335px">Sum: 1,961,895[m]</div>
<div class="abs th" style="right:273px;top:335px">Sum: 35b[NOK]</div>
<div class="abs th" style="right:25px;top:335px">Sum: 19b[NOK]</div>
<svg class="abs" style="left:1382px;top:230px" width="12" height="126" viewBox="0 0 12 126"><path d="M1.5 10 L5.8 4 L10 10 Z" fill="#a9b3c3"/><rect x="2.3" y="15" width="6.8" height="85.5" rx="3.4" fill="#a9b3c3"/><path d="M1.5 116 L5.8 122 L10 116 Z" fill="#a9b3c3"/></svg>
<!-- treemap -->
<div class="abs tm" style="left:855.3px;top:370.7px;width:419.7px;height:236.7px;background:#16c5c0"><div class="tt">PV 411 <i class="pp"></i> PV417 <i class="pp"></i> PV421 <i class="pp"></i> PV304 <i class="pp"></i> VB420 <i class="pp"></i> BASSENG XXX <i class="pp"></i> HB302 <i class="pp"></i> PV104 <i class="pp"></i> PV412 <i class="pp"></i><br>PV512 <i class="pp"></i> PV453 <i class="pp"></i> 148x SVA <i class="pp"></i> 35x EVA <i class="pp"></i> 5x RV <i class="pp"></i> 3x RVA <i class="pp"></i> 2x SVS <i class="pp"></i> 2x RVB <b>44.11%</b></div></div>
<div class="abs tm" style="left:1277px;top:370.7px;width:116.6px;height:236.7px;background:#a6edea"><div class="tt">BASSENG XXX <i class="pp"></i> PV512 <i class="pp"></i><br>VB420 <i class="pp"></i> PV417 <i class="pp"></i> 38x<br>SVA <i class="pp"></i> 20x MM <b>12.38%</b></div></div>
<div class="abs tm" style="left:855.3px;top:609px;width:169.3px;height:96.6px;background:#61a2ff"><div class="tt">PA405 <b>7.37%</b></div></div>
<div class="abs tm" style="left:855.3px;top:707.3px;width:169.3px;height:84.3px;background:#bfdbff"><div class="tt">HB1022 <i class="pp"></i> 17x SVA <i class="pp"></i> RV <b>6.4%</b></div></div>
<div class="abs tm" style="left:1026.2px;top:609px;width:143.2px;height:97.6px;background:#ee72a6"><div class="tt">HB302 <i class="pp"></i> PV304 <i class="pp"></i> 29x SVA <i class="pp"></i><br>5x MM <b>6.27%</b></div></div>
<div class="abs tm" style="left:1026.2px;top:708px;width:143.2px;height:83.6px;background:#ffc7db"><div class="tt">PV421 <i class="pp"></i> 17x SVA <i class="pp"></i> 8x MM<br><b>5.4%</b></div></div>
<div class="abs tm" style="left:1171.1px;top:609px;width:114.5px;height:93.6px;background:#f6726a"><div class="tt">HB1022 <i class="pp"></i> 14x SVA <i class="pp"></i> 2x<br>MM <b>4.85%</b></div></div>
<div class="abs tm" style="left:1286.8px;top:609px;width:106.8px;height:93.6px;background:#ffc9c2"><div class="tt">OV??? <b>4.5%</b></div></div>
<div class="abs tm" style="left:1171.1px;top:703.8px;width:111.8px;height:87.8px;background:#eaae01"><div class="tt">HB810 <i class="pp"></i> HB830 <i class="pp"></i> 5x<br>SVA <i class="pp"></i> 2x RVB <i class="pp"></i> RVA <i class="pp"></i><br>RV <b>4.43%</b></div></div>
<div class="abs tm" style="left:1284.4px;top:703.8px;width:109.2px;height:87.8px;background:#fcd883"><div class="tt">20x SVA <i class="pp"></i> 7x EVA <i class="pp"></i> RV<br><i class="pp"></i> RVB <b>4.31%</b></div></div>
<div class="abs" style="left:636px;top:120px;width:1px;height:100px;background:#eef1f6"></div><div class="abs" style="left:890px;top:120px;width:1px;height:100px;background:#e6eaf2"></div><div class="abs" style="left:1144px;top:120px;width:1px;height:100px;background:#e6eaf2"></div>
<!-- pie -->
<svg class="abs" style="left:3px;top:119px" width="376" height="242" viewBox="3 119 376 242"><path d="M191 240 L191.00 126.00 A114 114 0 0 1 294.49 192.19 Z" fill="#eaae01"/><path d="M191 240 L294.49 192.19 A114 114 0 0 1 288.56 298.97 Z" fill="#989fab"/><path d="M191 240 L288.56 298.97 A114 114 0 0 1 233.40 345.82 Z" fill="#f6726a"/><path d="M191 240 L233.40 345.82 A114 114 0 1 1 191.00 126.00 Z" fill="#16c5c0"/><path d="M191.00 205.50 L191.00 125.00" stroke="#fff" stroke-width="1"/><path d="M222.32 225.53 L295.40 191.77" stroke="#fff" stroke-width="1"/><path d="M220.52 257.85 L289.42 299.49" stroke="#fff" stroke-width="1"/><path d="M203.83 272.02 L233.77 346.75" stroke="#fff" stroke-width="1"/><circle cx="191" cy="240" r="34.5" fill="#fff"/></svg>
<div class="abs pl" style="left:193px;top:139px">beginning</div>
<div class="abs pl b" style="left:208px;top:149px;letter-spacing:-0.4px">18.11%</div>
<div class="abs pl" style="left:244px;top:225px">unknown</div>
<div class="abs pl b" style="left:247px;top:235px">15.54%</div>
<div class="abs pl" style="left:96px;top:239px">no need</div>
<div class="abs pl b" style="left:97px;top:249px">56.06%</div>
<div class="abs pl" style="left:224px;top:300px">immediate</div>
<div class="abs pl b" style="left:228px;top:310px">10.28%</div>
</body></html>
